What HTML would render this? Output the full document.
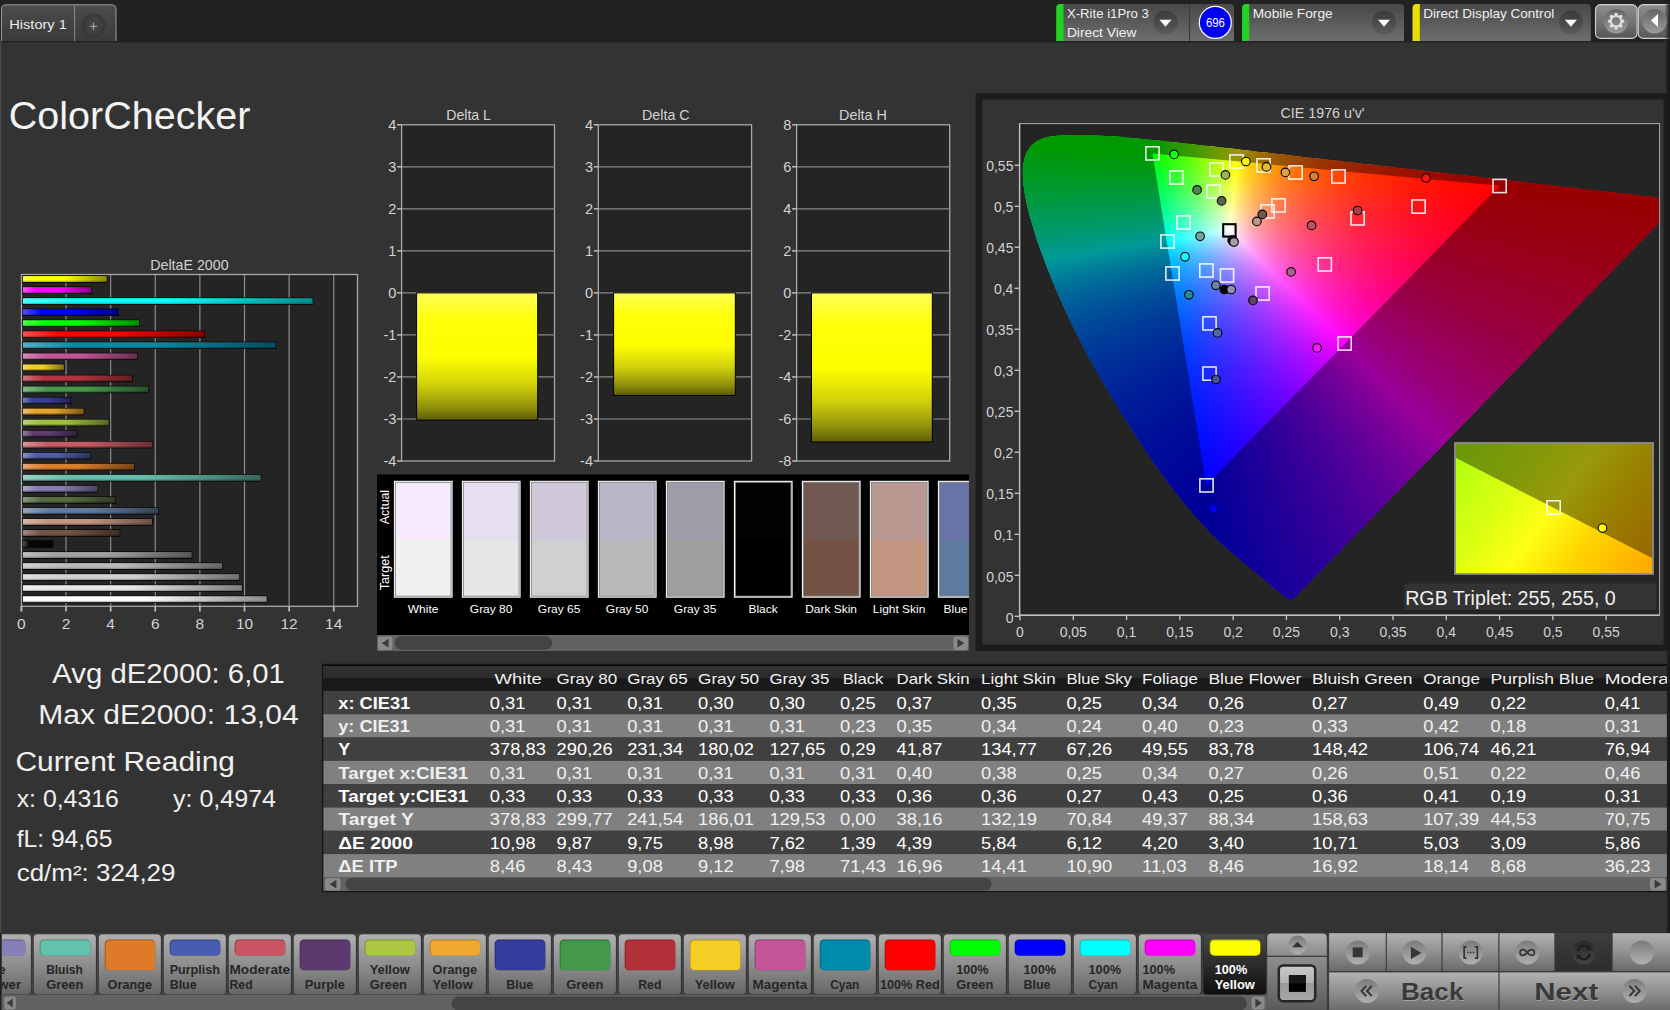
<!DOCTYPE html>
<html lang="en"><head><meta charset="utf-8"><title>ColorChecker</title>
<style>
html,body{margin:0;padding:0;background:#333333;overflow:hidden}
body{width:1670px;height:1010px;position:relative;font-family:"Liberation Sans",sans-serif}
svg{position:absolute;left:0;top:0;display:block;font-family:"Liberation Sans",sans-serif}
text{white-space:pre}
</style></head><body>
<svg width="1670" height="1010" viewBox="0 0 1670 1010">
<defs>
<linearGradient id="gshadow" x1="0" y1="0" x2="0" y2="1"><stop offset="0" stop-color="#1e1e1e"/><stop offset="1" stop-color="#333333"/></linearGradient>
<linearGradient id="gright" x1="0" y1="0" x2="1" y2="0"><stop offset="0" stop-color="#333333"/><stop offset="0.5" stop-color="#262626"/><stop offset="1" stop-color="#1c1c1c"/></linearGradient>
<linearGradient id="gright2" x1="0" y1="0" x2="1" y2="0"><stop offset="0" stop-color="#222222" stop-opacity="0"/><stop offset="1" stop-color="#1e1e1e"/></linearGradient>
<linearGradient id="gtab" x1="0" y1="0" x2="0" y2="1"><stop offset="0" stop-color="#4c4c4c"/><stop offset="1" stop-color="#3a3a3a"/></linearGradient>
<radialGradient id="gplus"><stop offset="0" stop-color="#4a4a4a"/><stop offset="0.7" stop-color="#3c3c3c"/><stop offset="1" stop-color="#363636"/></radialGradient>
<linearGradient id="gdev" x1="0" y1="0" x2="0" y2="1"><stop offset="0" stop-color="#484848"/><stop offset="1" stop-color="#6e6e6e"/></linearGradient>
<linearGradient id="gbtn" x1="0" y1="0" x2="0" y2="1"><stop offset="0" stop-color="#8e8e8e"/><stop offset="0.5" stop-color="#747474"/><stop offset="1" stop-color="#565656"/></linearGradient>
<radialGradient id="gdd" cx="0.5" cy="0.35" r="0.7"><stop offset="0" stop-color="#4a4a4a"/><stop offset="1" stop-color="#3c3c3c"/></radialGradient>
<linearGradient id="gddl" x1="0" y1="0" x2="0" y2="1"><stop offset="0" stop-color="#3a3a3a"/><stop offset="1" stop-color="#5c5c5c"/></linearGradient>
<linearGradient id="gcirc" x1="0" y1="0" x2="0" y2="1"><stop offset="0" stop-color="#646464"/><stop offset="1" stop-color="#9c9c9c"/></linearGradient>
<linearGradient id="b0" x1="0" y1="0" x2="1" y2="0"><stop offset="0" stop-color="#ffff52"/><stop offset="0.2" stop-color="#ffff00"/><stop offset="0.5" stop-color="#ffff00"/><stop offset="1" stop-color="#8c8c00"/></linearGradient>
<linearGradient id="b1" x1="0" y1="0" x2="1" y2="0"><stop offset="0" stop-color="#ff52ff"/><stop offset="0.2" stop-color="#ff00ff"/><stop offset="0.5" stop-color="#ff00ff"/><stop offset="1" stop-color="#8c008c"/></linearGradient>
<linearGradient id="b2" x1="0" y1="0" x2="1" y2="0"><stop offset="0" stop-color="#52ffff"/><stop offset="0.2" stop-color="#00ffff"/><stop offset="0.5" stop-color="#00ffff"/><stop offset="1" stop-color="#008c8c"/></linearGradient>
<linearGradient id="b3" x1="0" y1="0" x2="1" y2="0"><stop offset="0" stop-color="#5252ff"/><stop offset="0.2" stop-color="#0000ff"/><stop offset="0.5" stop-color="#0000ff"/><stop offset="1" stop-color="#00008c"/></linearGradient>
<linearGradient id="b4" x1="0" y1="0" x2="1" y2="0"><stop offset="0" stop-color="#52ff52"/><stop offset="0.2" stop-color="#00ff00"/><stop offset="0.5" stop-color="#00ff00"/><stop offset="1" stop-color="#008c00"/></linearGradient>
<linearGradient id="b5" x1="0" y1="0" x2="1" y2="0"><stop offset="0" stop-color="#ff5252"/><stop offset="0.2" stop-color="#ff0000"/><stop offset="0.5" stop-color="#ff0000"/><stop offset="1" stop-color="#8c0000"/></linearGradient>
<linearGradient id="b6" x1="0" y1="0" x2="1" y2="0"><stop offset="0" stop-color="#57b1c5"/><stop offset="0.2" stop-color="#088caa"/><stop offset="0.5" stop-color="#088caa"/><stop offset="1" stop-color="#044d5e"/></linearGradient>
<linearGradient id="b7" x1="0" y1="0" x2="1" y2="0"><stop offset="0" stop-color="#d48cb9"/><stop offset="0.2" stop-color="#c05698"/><stop offset="0.5" stop-color="#c05698"/><stop offset="1" stop-color="#6a2f54"/></linearGradient>
<linearGradient id="b8" x1="0" y1="0" x2="1" y2="0"><stop offset="0" stop-color="#f2dc6d"/><stop offset="0.2" stop-color="#eccc28"/><stop offset="0.5" stop-color="#eccc28"/><stop offset="1" stop-color="#827016"/></linearGradient>
<linearGradient id="b9" x1="0" y1="0" x2="1" y2="0"><stop offset="0" stop-color="#cb757c"/><stop offset="0.2" stop-color="#b2343e"/><stop offset="0.5" stop-color="#b2343e"/><stop offset="1" stop-color="#621d22"/></linearGradient>
<linearGradient id="b10" x1="0" y1="0" x2="1" y2="0"><stop offset="0" stop-color="#83b884"/><stop offset="0.2" stop-color="#48964a"/><stop offset="0.5" stop-color="#48964a"/><stop offset="1" stop-color="#285229"/></linearGradient>
<linearGradient id="b11" x1="0" y1="0" x2="1" y2="0"><stop offset="0" stop-color="#787cb9"/><stop offset="0.2" stop-color="#383e98"/><stop offset="0.5" stop-color="#383e98"/><stop offset="1" stop-color="#1f2254"/></linearGradient>
<linearGradient id="b12" x1="0" y1="0" x2="1" y2="0"><stop offset="0" stop-color="#eec171"/><stop offset="0.2" stop-color="#e6a42e"/><stop offset="0.5" stop-color="#e6a42e"/><stop offset="1" stop-color="#7f5a19"/></linearGradient>
<linearGradient id="b13" x1="0" y1="0" x2="1" y2="0"><stop offset="0" stop-color="#bed37e"/><stop offset="0.2" stop-color="#a0be42"/><stop offset="0.5" stop-color="#a0be42"/><stop offset="1" stop-color="#586924"/></linearGradient>
<linearGradient id="b14" x1="0" y1="0" x2="1" y2="0"><stop offset="0" stop-color="#927a9c"/><stop offset="0.2" stop-color="#5e3c6e"/><stop offset="0.5" stop-color="#5e3c6e"/><stop offset="1" stop-color="#34213d"/></linearGradient>
<linearGradient id="b15" x1="0" y1="0" x2="1" y2="0"><stop offset="0" stop-color="#d78f96"/><stop offset="0.2" stop-color="#c45a64"/><stop offset="0.5" stop-color="#c45a64"/><stop offset="1" stop-color="#6c3237"/></linearGradient>
<linearGradient id="b16" x1="0" y1="0" x2="1" y2="0"><stop offset="0" stop-color="#8890c4"/><stop offset="0.2" stop-color="#505ca8"/><stop offset="0.5" stop-color="#505ca8"/><stop offset="1" stop-color="#2c335c"/></linearGradient>
<linearGradient id="b17" x1="0" y1="0" x2="1" y2="0"><stop offset="0" stop-color="#e6a770"/><stop offset="0.2" stop-color="#da7e2c"/><stop offset="0.5" stop-color="#da7e2c"/><stop offset="1" stop-color="#784518"/></linearGradient>
<linearGradient id="b18" x1="0" y1="0" x2="1" y2="0"><stop offset="0" stop-color="#98d3c7"/><stop offset="0.2" stop-color="#68beac"/><stop offset="0.5" stop-color="#68beac"/><stop offset="1" stop-color="#39695f"/></linearGradient>
<linearGradient id="b19" x1="0" y1="0" x2="1" y2="0"><stop offset="0" stop-color="#ada9cb"/><stop offset="0.2" stop-color="#8680b2"/><stop offset="0.5" stop-color="#8680b2"/><stop offset="1" stop-color="#4a4662"/></linearGradient>
<linearGradient id="b20" x1="0" y1="0" x2="1" y2="0"><stop offset="0" stop-color="#8d9b80"/><stop offset="0.2" stop-color="#586c44"/><stop offset="0.5" stop-color="#586c44"/><stop offset="1" stop-color="#303b25"/></linearGradient>
<linearGradient id="b21" x1="0" y1="0" x2="1" y2="0"><stop offset="0" stop-color="#94a5bd"/><stop offset="0.2" stop-color="#627a9e"/><stop offset="0.5" stop-color="#627a9e"/><stop offset="1" stop-color="#364357"/></linearGradient>
<linearGradient id="b22" x1="0" y1="0" x2="1" y2="0"><stop offset="0" stop-color="#d7b8aa"/><stop offset="0.2" stop-color="#c49682"/><stop offset="0.5" stop-color="#c49682"/><stop offset="1" stop-color="#6c5248"/></linearGradient>
<linearGradient id="b23" x1="0" y1="0" x2="1" y2="0"><stop offset="0" stop-color="#a08980"/><stop offset="0.2" stop-color="#745244"/><stop offset="0.5" stop-color="#745244"/><stop offset="1" stop-color="#402d25"/></linearGradient>
<linearGradient id="b24" x1="0" y1="0" x2="1" y2="0"><stop offset="0" stop-color="#575757"/><stop offset="0.2" stop-color="#080808"/><stop offset="0.5" stop-color="#080808"/><stop offset="1" stop-color="#040404"/></linearGradient>
<linearGradient id="b25" x1="0" y1="0" x2="1" y2="0"><stop offset="0" stop-color="#bebebe"/><stop offset="0.2" stop-color="#a0a0a0"/><stop offset="0.5" stop-color="#a0a0a0"/><stop offset="1" stop-color="#585858"/></linearGradient>
<linearGradient id="b26" x1="0" y1="0" x2="1" y2="0"><stop offset="0" stop-color="#d0d0d0"/><stop offset="0.2" stop-color="#bababa"/><stop offset="0.5" stop-color="#bababa"/><stop offset="1" stop-color="#666666"/></linearGradient>
<linearGradient id="b27" x1="0" y1="0" x2="1" y2="0"><stop offset="0" stop-color="#dfdfdf"/><stop offset="0.2" stop-color="#d0d0d0"/><stop offset="0.5" stop-color="#d0d0d0"/><stop offset="1" stop-color="#727272"/></linearGradient>
<linearGradient id="b28" x1="0" y1="0" x2="1" y2="0"><stop offset="0" stop-color="#eeeeee"/><stop offset="0.2" stop-color="#e6e6e6"/><stop offset="0.5" stop-color="#e6e6e6"/><stop offset="1" stop-color="#7f7f7f"/></linearGradient>
<linearGradient id="b29" x1="0" y1="0" x2="1" y2="0"><stop offset="0" stop-color="#ffffff"/><stop offset="0.2" stop-color="#ffffff"/><stop offset="0.5" stop-color="#ffffff"/><stop offset="1" stop-color="#8c8c8c"/></linearGradient>
<linearGradient id="gyel" x1="0" y1="0" x2="0" y2="1"><stop offset="0" stop-color="#ffff58"/><stop offset="0.22" stop-color="#ffff08"/><stop offset="0.5" stop-color="#ffff00"/><stop offset="0.72" stop-color="#d2d20a"/><stop offset="0.9" stop-color="#90900c"/><stop offset="1" stop-color="#5c5c08"/></linearGradient>
<linearGradient id="c0" gradientUnits="userSpaceOnUse" x1="1053" x2="1103.5"><stop offset="0" stop-color="#00ff00"/><stop offset="1" stop-color="#00ff00"/></linearGradient>
<linearGradient id="c1" gradientUnits="userSpaceOnUse" x1="1042" x2="1130.5"><stop offset="0" stop-color="#00ff00"/><stop offset="1" stop-color="#00ff00"/></linearGradient>
<linearGradient id="c2" gradientUnits="userSpaceOnUse" x1="1036" x2="1151.5"><stop offset="0" stop-color="#00ff00"/><stop offset=".9827" stop-color="#00ff00"/><stop offset="1" stop-color="#04ff00"/></linearGradient>
<linearGradient id="c3" gradientUnits="userSpaceOnUse" x1="1033" x2="1170.5"><stop offset="0" stop-color="#00ff00"/><stop offset=".8509" stop-color="#00ff00"/><stop offset="1" stop-color="#30ff00"/></linearGradient>
<linearGradient id="c4" gradientUnits="userSpaceOnUse" x1="1030" x2="1188.5"><stop offset="0" stop-color="#00ff00"/><stop offset=".7603" stop-color="#00ff00"/><stop offset="1" stop-color="#5fff00"/></linearGradient>
<linearGradient id="c5" gradientUnits="userSpaceOnUse" x1="1028" x2="1206.5"><stop offset="0" stop-color="#00ff02"/><stop offset=".6891" stop-color="#00ff00"/><stop offset=".8515" stop-color="#47ff00"/><stop offset="1" stop-color="#93ff00"/></linearGradient>
<linearGradient id="c6" gradientUnits="userSpaceOnUse" x1="1026" x2="1224.5"><stop offset="0" stop-color="#00ff06"/><stop offset=".1864" stop-color="#00ff00"/><stop offset=".6297" stop-color="#00ff00"/><stop offset=".7254" stop-color="#2dff00"/><stop offset=".8237" stop-color="#61ff00"/><stop offset=".9144" stop-color="#96ff00"/><stop offset="1" stop-color="#ceff00"/></linearGradient>
<linearGradient id="c7" gradientUnits="userSpaceOnUse" x1="1025" x2="1241.5"><stop offset="0" stop-color="#00ff09"/><stop offset=".2725" stop-color="#00ff00"/><stop offset=".5843" stop-color="#00ff00"/><stop offset=".6928" stop-color="#39ff00"/><stop offset=".7945" stop-color="#76ff00"/><stop offset=".8915" stop-color="#b8ff00"/><stop offset=".9815" stop-color="#fdff00"/><stop offset="1" stop-color="#fff200"/></linearGradient>
<linearGradient id="c8" gradientUnits="userSpaceOnUse" x1="1024" x2="1259.5"><stop offset="0" stop-color="#00ff0c"/><stop offset=".3461" stop-color="#00ff00"/><stop offset=".5435" stop-color="#00ff00"/><stop offset=".6433" stop-color="#3aff00"/><stop offset=".7367" stop-color="#77ff00"/><stop offset=".8238" stop-color="#b8ff00"/><stop offset=".9066" stop-color="#feff00"/><stop offset=".9533" stop-color="#ffdb00"/><stop offset="1" stop-color="#ffbd00"/></linearGradient>
<linearGradient id="c9" gradientUnits="userSpaceOnUse" x1="1023" x2="1276.5"><stop offset="0" stop-color="#00ff10"/><stop offset=".4103" stop-color="#00ff00"/><stop offset=".5089" stop-color="#00ff00"/><stop offset=".5996" stop-color="#38ff00"/><stop offset=".6884" stop-color="#77ff00"/><stop offset=".7692" stop-color="#b8ff00"/><stop offset=".8462" stop-color="#ffff00"/><stop offset=".8817" stop-color="#ffe000"/><stop offset=".9172" stop-color="#ffc600"/><stop offset="1" stop-color="#ff9800"/></linearGradient>
<linearGradient id="c10" gradientUnits="userSpaceOnUse" x1="1022" x2="1294.5"><stop offset="0" stop-color="#00ff13"/><stop offset=".4789" stop-color="#00ff00"/><stop offset=".5633" stop-color="#39ff00"/><stop offset=".644" stop-color="#77ff00"/><stop offset=".7193" stop-color="#b9ff00"/><stop offset=".7908" stop-color="#ffff00"/><stop offset=".833" stop-color="#ffd800"/><stop offset=".8826" stop-color="#ffb400"/><stop offset=".9376" stop-color="#ff9600"/><stop offset="1" stop-color="#ff7b00"/></linearGradient>
<linearGradient id="c11" gradientUnits="userSpaceOnUse" x1="1021" x2="1311.5"><stop offset="0" stop-color="#00ff16"/><stop offset=".4527" stop-color="#00ff04"/><stop offset=".5267" stop-color="#35ff00"/><stop offset=".6041" stop-color="#74ff00"/><stop offset=".673" stop-color="#b4ff00"/><stop offset=".7453" stop-color="#fffe00"/><stop offset=".7952" stop-color="#ffce00"/><stop offset=".852" stop-color="#ffa600"/><stop offset=".9208" stop-color="#ff8300"/><stop offset="1" stop-color="#ff6500"/></linearGradient>
<linearGradient id="c12" gradientUnits="userSpaceOnUse" x1="1021" x2="1328.5"><stop offset="0" stop-color="#00ff1a"/><stop offset=".4293" stop-color="#00ff08"/><stop offset=".5024" stop-color="#38ff03"/><stop offset=".574" stop-color="#77ff00"/><stop offset=".6407" stop-color="#b9ff00"/><stop offset=".7024" stop-color="#ffff00"/><stop offset=".7577" stop-color="#ffc800"/><stop offset=".8244" stop-color="#ff9a00"/><stop offset=".9041" stop-color="#ff7300"/><stop offset="1" stop-color="#ff5400"/></linearGradient>
<linearGradient id="c13" gradientUnits="userSpaceOnUse" x1="1020" x2="1346.5"><stop offset="0" stop-color="#00ff1d"/><stop offset=".4089" stop-color="#00ff0c"/><stop offset=".4778" stop-color="#39ff08"/><stop offset=".5436" stop-color="#77ff03"/><stop offset=".6049" stop-color="#b8ff00"/><stop offset=".6631" stop-color="#feff00"/><stop offset=".6953" stop-color="#ffdb00"/><stop offset=".7259" stop-color="#ffbf00"/><stop offset=".7979" stop-color="#ff8e00"/><stop offset=".8882" stop-color="#ff6500"/><stop offset="1" stop-color="#ff4400"/></linearGradient>
<linearGradient id="c14" gradientUnits="userSpaceOnUse" x1="1020" x2="1363.5"><stop offset="0" stop-color="#00ff21"/><stop offset=".3886" stop-color="#00ff11"/><stop offset=".4527" stop-color="#37ff0d"/><stop offset=".5167" stop-color="#76ff09"/><stop offset=".575" stop-color="#b8ff04"/><stop offset=".6303" stop-color="#feff00"/><stop offset=".6623" stop-color="#ffd900"/><stop offset=".6943" stop-color="#ffbb00"/><stop offset=".7307" stop-color="#ff9f00"/><stop offset=".7729" stop-color="#ff8500"/><stop offset=".8734" stop-color="#ff5a00"/><stop offset="1" stop-color="#ff3800"/></linearGradient>
<linearGradient id="c15" gradientUnits="userSpaceOnUse" x1="1020" x2="1381.5"><stop offset="0" stop-color="#00ff24"/><stop offset=".3707" stop-color="#00ff15"/><stop offset=".4315" stop-color="#38ff12"/><stop offset=".491" stop-color="#76ff0e"/><stop offset=".5463" stop-color="#b8ff0a"/><stop offset=".5989" stop-color="#ffff05"/><stop offset=".6293" stop-color="#ffd802"/><stop offset=".6653" stop-color="#ffb500"/><stop offset=".7054" stop-color="#ff9600"/><stop offset=".7497" stop-color="#ff7c00"/><stop offset=".8008" stop-color="#ff6500"/><stop offset=".8589" stop-color="#ff5000"/><stop offset="1" stop-color="#ff2d00"/></linearGradient>
<linearGradient id="c16" gradientUnits="userSpaceOnUse" x1="1020" x2="1398.5"><stop offset="0" stop-color="#00ff27"/><stop offset=".3554" stop-color="#00ff1a"/><stop offset=".4148" stop-color="#3aff16"/><stop offset=".4703" stop-color="#78ff13"/><stop offset=".5218" stop-color="#b8ff0f"/><stop offset=".5707" stop-color="#feff0b"/><stop offset=".605" stop-color="#ffd306"/><stop offset=".6407" stop-color="#ffaf03"/><stop offset=".6816" stop-color="#ff9000"/><stop offset=".7292" stop-color="#ff7400"/><stop offset=".7834" stop-color="#ff5c00"/><stop offset=".8468" stop-color="#ff4700"/><stop offset="1" stop-color="#ff2500"/></linearGradient>
<linearGradient id="c17" gradientUnits="userSpaceOnUse" x1="1019" x2="1415.5"><stop offset="0" stop-color="#00ff2b"/><stop offset=".3417" stop-color="#00ff1e"/><stop offset=".396" stop-color="#37ff1b"/><stop offset=".4502" stop-color="#76ff18"/><stop offset=".5006" stop-color="#b9ff15"/><stop offset=".5473" stop-color="#ffff11"/><stop offset=".5801" stop-color="#ffd20c"/><stop offset=".6166" stop-color="#ffac07"/><stop offset=".6595" stop-color="#ff8b03"/><stop offset=".71" stop-color="#ff6e00"/><stop offset=".7667" stop-color="#ff5500"/><stop offset=".8335" stop-color="#ff4000"/><stop offset=".9105" stop-color="#ff2d00"/><stop offset="1" stop-color="#ff1d00"/></linearGradient>
<linearGradient id="c18" gradientUnits="userSpaceOnUse" x1="1019" x2="1433.5"><stop offset="0" stop-color="#00ff2e"/><stop offset=".3281" stop-color="#00ff23"/><stop offset=".3812" stop-color="#39ff20"/><stop offset=".4306" stop-color="#76ff1d"/><stop offset=".4777" stop-color="#b7ff1a"/><stop offset=".5223" stop-color="#fdff17"/><stop offset=".5573" stop-color="#ffce10"/><stop offset=".5947" stop-color="#ffa70b"/><stop offset=".6393" stop-color="#ff8406"/><stop offset=".6912" stop-color="#ff6702"/><stop offset=".7515" stop-color="#ff4e00"/><stop offset=".8215" stop-color="#ff3800"/><stop offset=".9035" stop-color="#ff2600"/><stop offset="1" stop-color="#ff1600"/></linearGradient>
<linearGradient id="c19" gradientUnits="userSpaceOnUse" x1="1019" x2="1450.5"><stop offset="0" stop-color="#00ff32"/><stop offset=".3163" stop-color="#00ff28"/><stop offset=".3662" stop-color="#39ff25"/><stop offset=".4137" stop-color="#76ff23"/><stop offset=".4565" stop-color="#b4ff20"/><stop offset=".5029" stop-color="#fffe1d"/><stop offset=".5353" stop-color="#ffcd15"/><stop offset=".5747" stop-color="#ffa30f"/><stop offset=".6199" stop-color="#ff8009"/><stop offset=".6732" stop-color="#ff6204"/><stop offset=".7358" stop-color="#ff4801"/><stop offset=".81" stop-color="#ff3200"/><stop offset=".8969" stop-color="#ff2000"/><stop offset="1" stop-color="#ff1000"/></linearGradient>
<linearGradient id="c20" gradientUnits="userSpaceOnUse" x1="1019" x2="1467.5"><stop offset="0" stop-color="#00ff36"/><stop offset=".3043" stop-color="#00ff2d"/><stop offset=".3512" stop-color="#37ff2b"/><stop offset=".398" stop-color="#75ff28"/><stop offset=".4415" stop-color="#b7ff26"/><stop offset=".4827" stop-color="#ffff23"/><stop offset=".5162" stop-color="#ffcb1a"/><stop offset=".5552" stop-color="#ffa013"/><stop offset=".602" stop-color="#ff7b0c"/><stop offset=".6566" stop-color="#ff5d07"/><stop offset=".7224" stop-color="#ff4202"/><stop offset=".7993" stop-color="#ff2d00"/><stop offset=".8907" stop-color="#ff1a00"/><stop offset="1" stop-color="#ff0b00"/></linearGradient>
<linearGradient id="c21" gradientUnits="userSpaceOnUse" x1="1019" x2="1485.5"><stop offset="0" stop-color="#00ff39"/><stop offset=".2937" stop-color="#00ff31"/><stop offset=".3398" stop-color="#39ff30"/><stop offset=".3837" stop-color="#77ff2e"/><stop offset=".4234" stop-color="#b6ff2c"/><stop offset=".4641" stop-color="#fffe29"/><stop offset=".4973" stop-color="#ffc91f"/><stop offset=".537" stop-color="#ff9c16"/><stop offset=".5841" stop-color="#ff770f"/><stop offset=".6409" stop-color="#ff5709"/><stop offset=".7085" stop-color="#ff3d04"/><stop offset=".7889" stop-color="#ff2700"/><stop offset=".8853" stop-color="#ff1500"/><stop offset="1" stop-color="#ff0600"/></linearGradient>
<linearGradient id="c22" gradientUnits="userSpaceOnUse" x1="1019" x2="1502.5"><stop offset="0" stop-color="#00ff3d"/><stop offset=".2844" stop-color="#00ff36"/><stop offset=".3278" stop-color="#39ff35"/><stop offset=".3692" stop-color="#75ff33"/><stop offset=".4064" stop-color="#b3ff32"/><stop offset=".4478" stop-color="#fffe2f"/><stop offset=".4633" stop-color="#ffe129"/><stop offset=".4809" stop-color="#ffc724"/><stop offset=".5212" stop-color="#ff981a"/><stop offset=".5688" stop-color="#ff7312"/><stop offset=".6267" stop-color="#ff530b"/><stop offset=".696" stop-color="#ff3805"/><stop offset=".7797" stop-color="#ff2201"/><stop offset=".88" stop-color="#ff1000"/><stop offset="1" stop-color="#ff0100"/></linearGradient>
<linearGradient id="c23" gradientUnits="userSpaceOnUse" x1="1019" x2="1520.5"><stop offset="0" stop-color="#00ff40"/><stop offset=".2742" stop-color="#00ff3b"/><stop offset=".3161" stop-color="#38ff3a"/><stop offset=".3569" stop-color="#76ff39"/><stop offset=".3948" stop-color="#b8ff38"/><stop offset=".4307" stop-color="#ffff36"/><stop offset=".4467" stop-color="#ffe02f"/><stop offset=".4636" stop-color="#ffc629"/><stop offset=".5045" stop-color="#ff961e"/><stop offset=".5533" stop-color="#ff6e15"/><stop offset=".6132" stop-color="#ff4e0d"/><stop offset=".6879" stop-color="#ff3307"/><stop offset=".7797" stop-color="#ff1c01"/><stop offset=".9103" stop-color="#ff0700"/><stop offset="1" stop-color="#ff0000"/></linearGradient>
<linearGradient id="c24" gradientUnits="userSpaceOnUse" x1="1020" x2="1537.5"><stop offset="0" stop-color="#00ff44"/><stop offset=".2647" stop-color="#00ff40"/><stop offset=".3053" stop-color="#39ff40"/><stop offset=".344" stop-color="#76ff3f"/><stop offset=".3787" stop-color="#b5ff3e"/><stop offset=".4155" stop-color="#fffe3c"/><stop offset=".4319" stop-color="#ffde34"/><stop offset=".4493" stop-color="#ffc22d"/><stop offset=".4899" stop-color="#ff9221"/><stop offset=".5401" stop-color="#ff6a17"/><stop offset=".6019" stop-color="#ff490f"/><stop offset=".6831" stop-color="#ff2c08"/><stop offset=".7845" stop-color="#ff1502"/><stop offset=".9353" stop-color="#ff0000"/><stop offset="1" stop-color="#ff0000"/></linearGradient>
<linearGradient id="c25" gradientUnits="userSpaceOnUse" x1="1020" x2="1555.5"><stop offset="0" stop-color="#00ff48"/><stop offset=".2568" stop-color="#00ff45"/><stop offset=".2951" stop-color="#38ff45"/><stop offset=".3315" stop-color="#74ff44"/><stop offset=".3641" stop-color="#b1ff44"/><stop offset=".4015" stop-color="#fffd43"/><stop offset=".4174" stop-color="#ffdd3a"/><stop offset=".4351" stop-color="#ffc032"/><stop offset=".4547" stop-color="#ffa62b"/><stop offset=".4771" stop-color="#ff8d24"/><stop offset=".5285" stop-color="#ff6519"/><stop offset=".591" stop-color="#ff4410"/><stop offset=".6788" stop-color="#ff2708"/><stop offset=".7899" stop-color="#ff0f02"/><stop offset=".901" stop-color="#ff0000"/><stop offset="1" stop-color="#ff0000"/></linearGradient>
<linearGradient id="c26" gradientUnits="userSpaceOnUse" x1="1020" x2="1572.5"><stop offset="0" stop-color="#00ff4b"/><stop offset=".2489" stop-color="#00ff4b"/><stop offset=".286" stop-color="#38ff4b"/><stop offset=".3222" stop-color="#76ff4a"/><stop offset=".3557" stop-color="#b7ff4a"/><stop offset=".3882" stop-color="#ffff4a"/><stop offset=".4045" stop-color="#ffdc40"/><stop offset=".4217" stop-color="#ffbf37"/><stop offset=".4416" stop-color="#ffa42f"/><stop offset=".4633" stop-color="#ff8c28"/><stop offset=".5158" stop-color="#ff621c"/><stop offset=".5801" stop-color="#ff4012"/><stop offset=".6742" stop-color="#ff2209"/><stop offset=".7946" stop-color="#ff0a02"/><stop offset=".8697" stop-color="#ff0000"/><stop offset="1" stop-color="#ff0000"/></linearGradient>
<linearGradient id="c27" gradientUnits="userSpaceOnUse" x1="1020" x2="1589.5"><stop offset="0" stop-color="#00ff4f"/><stop offset=".2423" stop-color="#00ff50"/><stop offset=".2783" stop-color="#39ff50"/><stop offset=".3126" stop-color="#76ff50"/><stop offset=".3433" stop-color="#b4ff51"/><stop offset=".3766" stop-color="#fffe50"/><stop offset=".3924" stop-color="#ffdb46"/><stop offset=".41" stop-color="#ffbd3c"/><stop offset=".4302" stop-color="#ffa133"/><stop offset=".4522" stop-color="#ff882b"/><stop offset=".5048" stop-color="#ff5e1e"/><stop offset=".5707" stop-color="#ff3c14"/><stop offset=".6708" stop-color="#ff1d0a"/><stop offset=".8016" stop-color="#ff0502"/><stop offset=".8402" stop-color="#ff0001"/><stop offset="1" stop-color="#ff0000"/></linearGradient>
<linearGradient id="c28" gradientUnits="userSpaceOnUse" x1="1020" x2="1607.5"><stop offset="0" stop-color="#00ff53"/><stop offset=".2357" stop-color="#01ff55"/><stop offset=".2706" stop-color="#3aff56"/><stop offset=".3038" stop-color="#77ff56"/><stop offset=".3353" stop-color="#baff57"/><stop offset=".3643" stop-color="#ffff58"/><stop offset=".3804" stop-color="#ffdb4b"/><stop offset=".3983" stop-color="#ffba41"/><stop offset=".4179" stop-color="#ff9f37"/><stop offset=".44" stop-color="#ff852f"/><stop offset=".4928" stop-color="#ff5b21"/><stop offset=".56" stop-color="#ff3915"/><stop offset=".6664" stop-color="#ff190b"/><stop offset=".8077" stop-color="#ff0003"/><stop offset="1" stop-color="#ff0000"/></linearGradient>
<linearGradient id="c29" gradientUnits="userSpaceOnUse" x1="1021" x2="1624.5"><stop offset="0" stop-color="#00ff57"/><stop offset=".2278" stop-color="#00ff5b"/><stop offset=".261" stop-color="#38ff5c"/><stop offset=".2933" stop-color="#75ff5c"/><stop offset=".3231" stop-color="#b6ff5d"/><stop offset=".3529" stop-color="#fffe5e"/><stop offset=".3687" stop-color="#ffda51"/><stop offset=".3869" stop-color="#ffb845"/><stop offset=".4068" stop-color="#ff9c3b"/><stop offset=".4292" stop-color="#ff8232"/><stop offset=".4548" stop-color="#ff6b2a"/><stop offset=".483" stop-color="#ff5723"/><stop offset=".551" stop-color="#ff3517"/><stop offset=".652" stop-color="#ff170c"/><stop offset=".7846" stop-color="#ff0004"/><stop offset="1" stop-color="#ff0000"/></linearGradient>
<linearGradient id="c30" gradientUnits="userSpaceOnUse" x1="1021" x2="1642.5"><stop offset="0" stop-color="#00ff5b"/><stop offset=".222" stop-color="#00ff60"/><stop offset=".2542" stop-color="#39ff61"/><stop offset=".2848" stop-color="#75ff63"/><stop offset=".3121" stop-color="#b2ff64"/><stop offset=".3427" stop-color="#fffe65"/><stop offset=".358" stop-color="#ffd957"/><stop offset=".3757" stop-color="#ffb74b"/><stop offset=".3958" stop-color="#ff9a3f"/><stop offset=".4183" stop-color="#ff8036"/><stop offset=".4441" stop-color="#ff682d"/><stop offset=".473" stop-color="#ff5425"/><stop offset=".5422" stop-color="#ff3218"/><stop offset=".6364" stop-color="#ff160e"/><stop offset=".7586" stop-color="#ff0006"/><stop offset="1" stop-color="#ff0000"/></linearGradient>
<linearGradient id="c31" gradientUnits="userSpaceOnUse" x1="1021" x2="1659.5"><stop offset="0" stop-color="#00ff5e"/><stop offset=".2161" stop-color="#00ff66"/><stop offset=".2459" stop-color="#35ff67"/><stop offset=".2772" stop-color="#75ff69"/><stop offset=".3054" stop-color="#b7ff6b"/><stop offset=".3328" stop-color="#ffff6d"/><stop offset=".3485" stop-color="#ffd85d"/><stop offset=".3657" stop-color="#ffb650"/><stop offset=".3853" stop-color="#ff9944"/><stop offset=".408" stop-color="#ff7e39"/><stop offset=".4338" stop-color="#ff6630"/><stop offset=".4628" stop-color="#ff5228"/><stop offset=".5325" stop-color="#ff2f1a"/><stop offset=".6218" stop-color="#ff150f"/><stop offset=".7353" stop-color="#ff0007"/><stop offset=".9021" stop-color="#ff0000"/><stop offset="1" stop-color="#ff0000"/></linearGradient>
<linearGradient id="c32" gradientUnits="userSpaceOnUse" x1="1022" x2="1661.5"><stop offset="0" stop-color="#00ff62"/><stop offset=".215" stop-color="#00ff6b"/><stop offset=".2455" stop-color="#37ff6d"/><stop offset=".2752" stop-color="#75ff6f"/><stop offset=".3026" stop-color="#b5ff72"/><stop offset=".3307" stop-color="#fffe74"/><stop offset=".3464" stop-color="#ffd763"/><stop offset=".3636" stop-color="#ffb655"/><stop offset=".3839" stop-color="#ff9748"/><stop offset=".4066" stop-color="#ff7c3d"/><stop offset=".4324" stop-color="#ff6533"/><stop offset=".4613" stop-color="#ff502b"/><stop offset=".5309" stop-color="#ff2e1c"/><stop offset=".6185" stop-color="#ff1411"/><stop offset=".7295" stop-color="#ff0009"/><stop offset="1" stop-color="#ff0000"/></linearGradient>
<linearGradient id="c33" gradientUnits="userSpaceOnUse" x1="1022" x2="1661.5"><stop offset="0" stop-color="#00ff66"/><stop offset=".2158" stop-color="#00ff71"/><stop offset=".2463" stop-color="#38ff73"/><stop offset=".2752" stop-color="#75ff76"/><stop offset=".301" stop-color="#b1ff78"/><stop offset=".3307" stop-color="#fffd7b"/><stop offset=".3464" stop-color="#ffd669"/><stop offset=".3636" stop-color="#ffb55a"/><stop offset=".3831" stop-color="#ff974d"/><stop offset=".4058" stop-color="#ff7c41"/><stop offset=".4316" stop-color="#ff6537"/><stop offset=".4605" stop-color="#ff502e"/><stop offset=".5309" stop-color="#ff2e1f"/><stop offset=".6169" stop-color="#ff1413"/><stop offset=".7263" stop-color="#ff000a"/><stop offset="1" stop-color="#ff0000"/></linearGradient>
<linearGradient id="c34" gradientUnits="userSpaceOnUse" x1="1023" x2="1661.5"><stop offset="0" stop-color="#00ff6a"/><stop offset=".2146" stop-color="#00ff77"/><stop offset=".2443" stop-color="#36ff79"/><stop offset=".2749" stop-color="#76ff7c"/><stop offset=".3023" stop-color="#b7ff7f"/><stop offset=".3289" stop-color="#ffff83"/><stop offset=".3446" stop-color="#ffd770"/><stop offset=".3618" stop-color="#ffb560"/><stop offset=".3814" stop-color="#ff9752"/><stop offset=".4041" stop-color="#ff7c46"/><stop offset=".4299" stop-color="#ff643b"/><stop offset=".4589" stop-color="#ff5031"/><stop offset=".5286" stop-color="#ff2e21"/><stop offset=".6139" stop-color="#ff1415"/><stop offset=".7228" stop-color="#ff000c"/><stop offset="1" stop-color="#ff0000"/></linearGradient>
<linearGradient id="c35" gradientUnits="userSpaceOnUse" x1="1023" x2="1661.5"><stop offset="0" stop-color="#00ff6e"/><stop offset=".2153" stop-color="#00ff7d"/><stop offset=".2459" stop-color="#39ff80"/><stop offset=".2749" stop-color="#76ff83"/><stop offset=".3007" stop-color="#b4ff86"/><stop offset=".3289" stop-color="#fffe8a"/><stop offset=".3446" stop-color="#ffd676"/><stop offset=".3618" stop-color="#ffb466"/><stop offset=".3814" stop-color="#ff9657"/><stop offset=".4041" stop-color="#ff7b4a"/><stop offset=".4291" stop-color="#ff643f"/><stop offset=".4581" stop-color="#ff4f35"/><stop offset=".5286" stop-color="#ff2d24"/><stop offset=".6132" stop-color="#ff1417"/><stop offset=".7204" stop-color="#ff000e"/><stop offset="1" stop-color="#ff0001"/></linearGradient>
<linearGradient id="c36" gradientUnits="userSpaceOnUse" x1="1023" x2="1661.5"><stop offset="0" stop-color="#00ff72"/><stop offset=".2161" stop-color="#00ff83"/><stop offset=".2467" stop-color="#3aff86"/><stop offset=".2756" stop-color="#78ff8a"/><stop offset=".3031" stop-color="#baff8e"/><stop offset=".3281" stop-color="#ffff92"/><stop offset=".3438" stop-color="#ffd77e"/><stop offset=".361" stop-color="#ffb56c"/><stop offset=".3806" stop-color="#ff965d"/><stop offset=".4033" stop-color="#ff7b4f"/><stop offset=".4283" stop-color="#ff6443"/><stop offset=".4573" stop-color="#ff4f38"/><stop offset=".5278" stop-color="#ff2d26"/><stop offset=".6116" stop-color="#ff141a"/><stop offset=".7173" stop-color="#ff000f"/><stop offset="1" stop-color="#ff0002"/></linearGradient>
<linearGradient id="c37" gradientUnits="userSpaceOnUse" x1="1024" x2="1661.5"><stop offset="0" stop-color="#00ff77"/><stop offset=".2149" stop-color="#00ff89"/><stop offset=".2439" stop-color="#36ff8c"/><stop offset=".2737" stop-color="#76ff91"/><stop offset=".3004" stop-color="#b6ff95"/><stop offset=".3271" stop-color="#fffe9a"/><stop offset=".3427" stop-color="#ffd684"/><stop offset=".36" stop-color="#ffb472"/><stop offset=".3796" stop-color="#ff9661"/><stop offset=".4024" stop-color="#ff7a53"/><stop offset=".4275" stop-color="#ff6346"/><stop offset=".4565" stop-color="#ff4e3b"/><stop offset=".5271" stop-color="#ff2c29"/><stop offset=".6094" stop-color="#ff131c"/><stop offset=".7137" stop-color="#ff0011"/><stop offset="1" stop-color="#ff0003"/></linearGradient>
<linearGradient id="c38" gradientUnits="userSpaceOnUse" x1="1024" x2="1661.5"><stop offset="0" stop-color="#00ff7b"/><stop offset=".2157" stop-color="#00ff8f"/><stop offset=".2455" stop-color="#39ff93"/><stop offset=".2737" stop-color="#75ff98"/><stop offset=".2988" stop-color="#b2ff9c"/><stop offset=".3271" stop-color="#fffda1"/><stop offset=".342" stop-color="#ffd78b"/><stop offset=".3592" stop-color="#ffb478"/><stop offset=".3788" stop-color="#ff9667"/><stop offset=".4016" stop-color="#ff7a57"/><stop offset=".4267" stop-color="#ff634a"/><stop offset=".4557" stop-color="#ff4e3f"/><stop offset=".5263" stop-color="#ff2c2b"/><stop offset=".6078" stop-color="#ff131e"/><stop offset=".7106" stop-color="#ff0013"/><stop offset="1" stop-color="#ff0004"/></linearGradient>
<linearGradient id="c39" gradientUnits="userSpaceOnUse" x1="1025" x2="1661.5"><stop offset="0" stop-color="#00ff7f"/><stop offset=".2152" stop-color="#00ff95"/><stop offset=".2451" stop-color="#3aff9a"/><stop offset=".2734" stop-color="#77ff9f"/><stop offset=".3001" stop-color="#b9ffa4"/><stop offset=".3252" stop-color="#ffffaa"/><stop offset=".3401" stop-color="#ffd893"/><stop offset=".3574" stop-color="#ffb57e"/><stop offset=".3771" stop-color="#ff966c"/><stop offset=".3998" stop-color="#ff7a5c"/><stop offset=".425" stop-color="#ff634f"/><stop offset=".454" stop-color="#ff4e42"/><stop offset=".5247" stop-color="#ff2b2e"/><stop offset=".6057" stop-color="#ff1320"/><stop offset=".707" stop-color="#ff0015"/><stop offset="1" stop-color="#ff0005"/></linearGradient>
<linearGradient id="c40" gradientUnits="userSpaceOnUse" x1="1025" x2="1661.5"><stop offset="0" stop-color="#00ff83"/><stop offset=".2152" stop-color="#00ff9b"/><stop offset=".2435" stop-color="#36ffa0"/><stop offset=".2726" stop-color="#75ffa6"/><stop offset=".2985" stop-color="#b5ffab"/><stop offset=".3252" stop-color="#fffeb1"/><stop offset=".3401" stop-color="#ffd799"/><stop offset=".3574" stop-color="#ffb484"/><stop offset=".3771" stop-color="#ff9571"/><stop offset=".3998" stop-color="#ff7961"/><stop offset=".425" stop-color="#ff6252"/><stop offset=".454" stop-color="#ff4d46"/><stop offset=".5247" stop-color="#ff2b31"/><stop offset=".6041" stop-color="#ff1322"/><stop offset=".7038" stop-color="#ff0017"/><stop offset="1" stop-color="#ff0006"/></linearGradient>
<linearGradient id="c41" gradientUnits="userSpaceOnUse" x1="1026" x2="1661.5"><stop offset="0" stop-color="#00ff88"/><stop offset=".2148" stop-color="#00ffa2"/><stop offset=".2439" stop-color="#38ffa7"/><stop offset=".2714" stop-color="#75ffad"/><stop offset=".2958" stop-color="#b1ffb3"/><stop offset=".3242" stop-color="#fffdb9"/><stop offset=".3391" stop-color="#ffd6a0"/><stop offset=".3564" stop-color="#ffb38a"/><stop offset=".3761" stop-color="#ff9476"/><stop offset=".3989" stop-color="#ff7865"/><stop offset=".4241" stop-color="#ff6156"/><stop offset=".4532" stop-color="#ff4c49"/><stop offset=".524" stop-color="#ff2a33"/><stop offset=".6019" stop-color="#ff1324"/><stop offset=".7002" stop-color="#ff0018"/><stop offset="1" stop-color="#ff0007"/></linearGradient>
<linearGradient id="c42" gradientUnits="userSpaceOnUse" x1="1026" x2="1661.5"><stop offset="0" stop-color="#00ff8c"/><stop offset=".118" stop-color="#00ff99"/><stop offset=".2156" stop-color="#01ffa8"/><stop offset=".2447" stop-color="#39ffae"/><stop offset=".2722" stop-color="#76ffb4"/><stop offset=".2982" stop-color="#b8ffbb"/><stop offset=".3234" stop-color="#ffffc2"/><stop offset=".3383" stop-color="#ffd7a8"/><stop offset=".3556" stop-color="#ffb390"/><stop offset=".3753" stop-color="#ff947c"/><stop offset=".3973" stop-color="#ff796a"/><stop offset=".4225" stop-color="#ff625b"/><stop offset=".4516" stop-color="#ff4c4d"/><stop offset=".5224" stop-color="#ff2a36"/><stop offset=".6003" stop-color="#ff1327"/><stop offset=".6971" stop-color="#ff001a"/><stop offset="1" stop-color="#ff0008"/></linearGradient>
<linearGradient id="c43" gradientUnits="userSpaceOnUse" x1="1027" x2="1661.5"><stop offset="0" stop-color="#00ff91"/><stop offset=".1174" stop-color="#00ff9e"/><stop offset=".2143" stop-color="#00ffaf"/><stop offset=".2427" stop-color="#37ffb5"/><stop offset=".2703" stop-color="#74ffbc"/><stop offset=".2955" stop-color="#b4ffc3"/><stop offset=".3223" stop-color="#fffeca"/><stop offset=".3373" stop-color="#ffd6af"/><stop offset=".3546" stop-color="#ffb296"/><stop offset=".3743" stop-color="#ff9381"/><stop offset=".3964" stop-color="#ff786f"/><stop offset=".4216" stop-color="#ff615f"/><stop offset=".4507" stop-color="#ff4c50"/><stop offset=".5217" stop-color="#ff2938"/><stop offset=".5981" stop-color="#ff1229"/><stop offset=".6935" stop-color="#ff001c"/><stop offset="1" stop-color="#ff0009"/></linearGradient>
<linearGradient id="c44" gradientUnits="userSpaceOnUse" x1="1028" x2="1661.5"><stop offset="0" stop-color="#00ff95"/><stop offset=".1168" stop-color="#00ffa4"/><stop offset=".2139" stop-color="#00ffb5"/><stop offset=".2431" stop-color="#3affbc"/><stop offset=".2707" stop-color="#78ffc4"/><stop offset=".296" stop-color="#b8ffcb"/><stop offset=".3204" stop-color="#ffffd4"/><stop offset=".3354" stop-color="#ffd7b7"/><stop offset=".3528" stop-color="#ffb39d"/><stop offset=".3725" stop-color="#ff9387"/><stop offset=".3946" stop-color="#ff7874"/><stop offset=".4199" stop-color="#ff6163"/><stop offset=".4491" stop-color="#ff4b54"/><stop offset=".5193" stop-color="#ff293b"/><stop offset=".5951" stop-color="#ff122b"/><stop offset=".6898" stop-color="#ff001e"/><stop offset=".8256" stop-color="#ff0013"/><stop offset="1" stop-color="#ff000a"/></linearGradient>
<linearGradient id="c45" gradientUnits="userSpaceOnUse" x1="1028" x2="1661.5"><stop offset="0" stop-color="#00ff9a"/><stop offset=".1176" stop-color="#00ffa9"/><stop offset=".2147" stop-color="#01ffbc"/><stop offset=".2431" stop-color="#39ffc3"/><stop offset=".2699" stop-color="#76ffcb"/><stop offset=".2952" stop-color="#b6ffd3"/><stop offset=".3204" stop-color="#fffedc"/><stop offset=".3354" stop-color="#ffd6be"/><stop offset=".352" stop-color="#ffb3a4"/><stop offset=".3717" stop-color="#ff938d"/><stop offset=".3938" stop-color="#ff7879"/><stop offset=".4191" stop-color="#ff6067"/><stop offset=".4483" stop-color="#ff4b58"/><stop offset=".5193" stop-color="#ff283e"/><stop offset=".5935" stop-color="#ff122e"/><stop offset=".6867" stop-color="#ff0020"/><stop offset=".8232" stop-color="#ff0014"/><stop offset="1" stop-color="#ff000a"/></linearGradient>
<linearGradient id="c46" gradientUnits="userSpaceOnUse" x1="1029" x2="1661.5"><stop offset="0" stop-color="#00ff9e"/><stop offset=".117" stop-color="#00ffaf"/><stop offset=".2134" stop-color="#00ffc3"/><stop offset=".2411" stop-color="#37ffcb"/><stop offset=".268" stop-color="#74ffd3"/><stop offset=".2925" stop-color="#b2ffdb"/><stop offset=".3194" stop-color="#fffde4"/><stop offset=".3344" stop-color="#ffd5c5"/><stop offset=".351" stop-color="#ffb2aa"/><stop offset=".3708" stop-color="#ff9292"/><stop offset=".3929" stop-color="#ff777d"/><stop offset=".4182" stop-color="#ff5f6b"/><stop offset=".4474" stop-color="#ff4a5b"/><stop offset=".5186" stop-color="#ff2841"/><stop offset=".5929" stop-color="#ff1230"/><stop offset=".6838" stop-color="#ff0022"/><stop offset=".8213" stop-color="#ff0015"/><stop offset="1" stop-color="#ff000b"/></linearGradient>
<linearGradient id="c47" gradientUnits="userSpaceOnUse" x1="1029" x2="1659.5"><stop offset="0" stop-color="#00ffa3"/><stop offset=".1174" stop-color="#00ffb5"/><stop offset=".2149" stop-color="#00ffca"/><stop offset=".2435" stop-color="#3affd2"/><stop offset=".2704" stop-color="#77ffdb"/><stop offset=".2958" stop-color="#b9ffe4"/><stop offset=".3196" stop-color="#ffffee"/><stop offset=".3347" stop-color="#ffd6cd"/><stop offset=".3513" stop-color="#ffb3b2"/><stop offset=".3711" stop-color="#ff9398"/><stop offset=".3933" stop-color="#ff7783"/><stop offset=".4187" stop-color="#ff5f70"/><stop offset=".4473" stop-color="#ff4a5f"/><stop offset=".5178" stop-color="#ff2844"/><stop offset=".5916" stop-color="#ff1232"/><stop offset=".6828" stop-color="#ff0024"/><stop offset=".8208" stop-color="#ff0017"/><stop offset="1" stop-color="#ff000d"/></linearGradient>
<linearGradient id="c48" gradientUnits="userSpaceOnUse" x1="1030" x2="1658.5"><stop offset="0" stop-color="#00ffa8"/><stop offset=".1169" stop-color="#00ffba"/><stop offset=".214" stop-color="#00ffd1"/><stop offset=".2403" stop-color="#34ffd9"/><stop offset=".2681" stop-color="#73ffe3"/><stop offset=".2928" stop-color="#b3ffec"/><stop offset=".319" stop-color="#fffef7"/><stop offset=".3341" stop-color="#ffd5d5"/><stop offset=".3508" stop-color="#ffb2b8"/><stop offset=".3699" stop-color="#ff939f"/><stop offset=".3922" stop-color="#ff7788"/><stop offset=".4177" stop-color="#ff5f74"/><stop offset=".4471" stop-color="#ff4a63"/><stop offset=".5179" stop-color="#ff2746"/><stop offset=".5903" stop-color="#ff1235"/><stop offset=".6802" stop-color="#ff0026"/><stop offset=".8194" stop-color="#ff0018"/><stop offset="1" stop-color="#ff000e"/></linearGradient>
<linearGradient id="c49" gradientUnits="userSpaceOnUse" x1="1031" x2="1656.5"><stop offset="0" stop-color="#00ffac"/><stop offset=".1175" stop-color="#00ffc0"/><stop offset=".2142" stop-color="#00ffd8"/><stop offset=".2414" stop-color="#37ffe1"/><stop offset=".2678" stop-color="#73ffeb"/><stop offset=".291" stop-color="#affff4"/><stop offset=".3189" stop-color="#fffdff"/><stop offset=".3341" stop-color="#ffd4dc"/><stop offset=".3509" stop-color="#ffb1be"/><stop offset=".3701" stop-color="#ff92a4"/><stop offset=".3925" stop-color="#ff768d"/><stop offset=".4181" stop-color="#ff5e78"/><stop offset=".4468" stop-color="#ff4967"/><stop offset=".518" stop-color="#ff2749"/><stop offset=".5899" stop-color="#ff1137"/><stop offset=".6787" stop-color="#ff0028"/><stop offset=".8185" stop-color="#ff001a"/><stop offset="1" stop-color="#ff000f"/></linearGradient>
<linearGradient id="c50" gradientUnits="userSpaceOnUse" x1="1031" x2="1654.5"><stop offset="0" stop-color="#00ffb1"/><stop offset=".1179" stop-color="#00ffc6"/><stop offset=".2157" stop-color="#00ffe0"/><stop offset=".2398" stop-color="#31ffe8"/><stop offset=".2622" stop-color="#63fff0"/><stop offset=".2967" stop-color="#bcffff"/><stop offset=".3232" stop-color="#fff2ff"/><stop offset=".3384" stop-color="#ffcbdd"/><stop offset=".3561" stop-color="#ffa8be"/><stop offset=".3753" stop-color="#ff8ba5"/><stop offset=".3978" stop-color="#ff718e"/><stop offset=".4234" stop-color="#ff5a79"/><stop offset=".4523" stop-color="#ff4668"/><stop offset=".5237" stop-color="#ff254b"/><stop offset=".5926" stop-color="#ff1139"/><stop offset=".6776" stop-color="#ff002a"/><stop offset=".818" stop-color="#ff001b"/><stop offset="1" stop-color="#ff0010"/></linearGradient>
<linearGradient id="c51" gradientUnits="userSpaceOnUse" x1="1032" x2="1652.5"><stop offset="0" stop-color="#00ffb6"/><stop offset=".1176" stop-color="#00ffcc"/><stop offset=".2151" stop-color="#00ffe7"/><stop offset=".2458" stop-color="#3efff2"/><stop offset=".2764" stop-color="#87ffff"/><stop offset=".3263" stop-color="#ffe8ff"/><stop offset=".3417" stop-color="#ffc3de"/><stop offset=".3594" stop-color="#ffa2bf"/><stop offset=".3795" stop-color="#ff85a5"/><stop offset=".4021" stop-color="#ff6c8f"/><stop offset=".4279" stop-color="#ff567b"/><stop offset=".4577" stop-color="#ff4269"/><stop offset=".5294" stop-color="#ff224c"/><stop offset=".5955" stop-color="#ff103b"/><stop offset=".6761" stop-color="#ff002d"/><stop offset=".8163" stop-color="#ff001d"/><stop offset="1" stop-color="#ff0011"/></linearGradient>
<linearGradient id="c52" gradientUnits="userSpaceOnUse" x1="1032" x2="1650.5"><stop offset="0" stop-color="#00ffbb"/><stop offset=".1188" stop-color="#00ffd2"/><stop offset=".2167" stop-color="#00ffef"/><stop offset=".2587" stop-color="#59ffff"/><stop offset=".3314" stop-color="#ffdcfd"/><stop offset=".3468" stop-color="#ffbadd"/><stop offset=".3646" stop-color="#ff9bc0"/><stop offset=".3848" stop-color="#ff7fa6"/><stop offset=".4082" stop-color="#ff678f"/><stop offset=".4341" stop-color="#ff527b"/><stop offset=".464" stop-color="#ff3f6a"/><stop offset=".5368" stop-color="#ff204d"/><stop offset=".5998" stop-color="#ff0e3c"/><stop offset=".675" stop-color="#ff002f"/><stop offset=".8157" stop-color="#ff001f"/><stop offset="1" stop-color="#ff0012"/></linearGradient>
<linearGradient id="c53" gradientUnits="userSpaceOnUse" x1="1033" x2="1648.5"><stop offset="0" stop-color="#00ffc0"/><stop offset=".1186" stop-color="#00ffd9"/><stop offset=".2169" stop-color="#00fff7"/><stop offset=".2388" stop-color="#2dffff"/><stop offset=".2819" stop-color="#88edff"/><stop offset=".3347" stop-color="#ffd3fd"/><stop offset=".3509" stop-color="#ffb1dc"/><stop offset=".3688" stop-color="#ff93c0"/><stop offset=".3891" stop-color="#ff79a6"/><stop offset=".4127" stop-color="#ff6290"/><stop offset=".4687" stop-color="#ff3c6b"/><stop offset=".5418" stop-color="#ff1e4e"/><stop offset=".6019" stop-color="#ff0e3e"/><stop offset=".6734" stop-color="#ff0031"/><stop offset=".8148" stop-color="#ff0020"/><stop offset="1" stop-color="#ff0013"/></linearGradient>
<linearGradient id="c54" gradientUnits="userSpaceOnUse" x1="1034" x2="1646.5"><stop offset="0" stop-color="#00ffc5"/><stop offset=".1184" stop-color="#00ffdf"/><stop offset=".2163" stop-color="#00fffe"/><stop offset=".2718" stop-color="#6fe9ff"/><stop offset=".338" stop-color="#ffcbfd"/><stop offset=".3543" stop-color="#ffaadd"/><stop offset=".3722" stop-color="#ff8ec1"/><stop offset=".3935" stop-color="#ff74a7"/><stop offset=".4171" stop-color="#ff5e91"/><stop offset=".4743" stop-color="#ff386c"/><stop offset=".5478" stop-color="#ff1c4f"/><stop offset=".6718" stop-color="#ff0033"/><stop offset=".8139" stop-color="#ff0022"/><stop offset="1" stop-color="#ff0014"/></linearGradient>
<linearGradient id="c55" gradientUnits="userSpaceOnUse" x1="1035" x2="1644.5"><stop offset="0" stop-color="#00ffca"/><stop offset=".1075" stop-color="#00ffe2"/><stop offset=".1977" stop-color="#00ffff"/><stop offset=".2166" stop-color="#00f8ff"/><stop offset=".2756" stop-color="#74e0ff"/><stop offset=".3413" stop-color="#ffc2fd"/><stop offset=".3577" stop-color="#ffa3dd"/><stop offset=".3765" stop-color="#ff87c1"/><stop offset=".3979" stop-color="#ff6fa7"/><stop offset=".4217" stop-color="#ff5991"/><stop offset=".4791" stop-color="#ff366d"/><stop offset=".5529" stop-color="#ff1a50"/><stop offset=".6702" stop-color="#ff0036"/><stop offset=".813" stop-color="#ff0023"/><stop offset="1" stop-color="#ff0016"/></linearGradient>
<linearGradient id="c56" gradientUnits="userSpaceOnUse" x1="1035" x2="1642.5"><stop offset="0" stop-color="#00ffd0"/><stop offset=".0963" stop-color="#00ffe5"/><stop offset=".1786" stop-color="#00ffff"/><stop offset=".2181" stop-color="#00f0ff"/><stop offset=".279" stop-color="#75d8ff"/><stop offset=".3457" stop-color="#ffbafe"/><stop offset=".3621" stop-color="#ff9dde"/><stop offset=".3811" stop-color="#ff82c2"/><stop offset=".4025" stop-color="#ff6aa9"/><stop offset=".4272" stop-color="#ff5592"/><stop offset=".4856" stop-color="#ff336d"/><stop offset=".5597" stop-color="#ff1851"/><stop offset=".67" stop-color="#ff0038"/><stop offset=".8123" stop-color="#ff0025"/><stop offset="1" stop-color="#ff0017"/></linearGradient>
<linearGradient id="c57" gradientUnits="userSpaceOnUse" x1="1036" x2="1640.5"><stop offset="0" stop-color="#00ffd5"/><stop offset=".0844" stop-color="#00ffe9"/><stop offset=".158" stop-color="#00ffff"/><stop offset=".2175" stop-color="#00e9ff"/><stop offset=".2787" stop-color="#72d2ff"/><stop offset=".349" stop-color="#ffb3fe"/><stop offset=".3664" stop-color="#ff95dd"/><stop offset=".3854" stop-color="#ff7cc2"/><stop offset=".4069" stop-color="#ff66a9"/><stop offset=".4309" stop-color="#ff5294"/><stop offset=".4897" stop-color="#ff306f"/><stop offset=".5649" stop-color="#ff1652"/><stop offset=".6683" stop-color="#ff003a"/><stop offset=".8114" stop-color="#ff0027"/><stop offset="1" stop-color="#ff0018"/></linearGradient>
<linearGradient id="c58" gradientUnits="userSpaceOnUse" x1="1037" x2="1638.5"><stop offset="0" stop-color="#00ffda"/><stop offset=".1372" stop-color="#00ffff"/><stop offset=".2178" stop-color="#00e3ff"/><stop offset=".2826" stop-color="#76caff"/><stop offset=".3525" stop-color="#ffabfe"/><stop offset=".3682" stop-color="#ff92e1"/><stop offset=".3857" stop-color="#ff7bc7"/><stop offset=".4264" stop-color="#ff559c"/><stop offset=".478" stop-color="#ff3579"/><stop offset=".542" stop-color="#ff1c5c"/><stop offset=".5993" stop-color="#ff0d4b"/><stop offset=".6667" stop-color="#ff003d"/><stop offset=".8105" stop-color="#ff0028"/><stop offset="1" stop-color="#ff0019"/></linearGradient>
<linearGradient id="c59" gradientUnits="userSpaceOnUse" x1="1037" x2="1636.5"><stop offset="0" stop-color="#00ffe0"/><stop offset=".1176" stop-color="#00ffff"/><stop offset=".2193" stop-color="#01dcff"/><stop offset=".2852" stop-color="#76c3ff"/><stop offset=".357" stop-color="#ffa4fe"/><stop offset=".3728" stop-color="#ff8ce1"/><stop offset=".3903" stop-color="#ff76c8"/><stop offset=".432" stop-color="#ff519c"/><stop offset=".4837" stop-color="#ff327a"/><stop offset=".5471" stop-color="#ff1a5e"/><stop offset=".6656" stop-color="#ff003f"/><stop offset=".8098" stop-color="#ff002a"/><stop offset="1" stop-color="#ff001b"/></linearGradient>
<linearGradient id="c60" gradientUnits="userSpaceOnUse" x1="1038" x2="1634.5"><stop offset="0" stop-color="#00ffe5"/><stop offset=".0964" stop-color="#00ffff"/><stop offset=".2188" stop-color="#00d6ff"/><stop offset=".2858" stop-color="#74bdff"/><stop offset=".3604" stop-color="#ff9efe"/><stop offset=".3764" stop-color="#ff86e2"/><stop offset=".394" stop-color="#ff71c9"/><stop offset=".4359" stop-color="#ff4d9e"/><stop offset=".4878" stop-color="#ff307b"/><stop offset=".5516" stop-color="#ff195f"/><stop offset=".6639" stop-color="#ff0042"/><stop offset=".808" stop-color="#ff002c"/><stop offset="1" stop-color="#ff001c"/></linearGradient>
<linearGradient id="c61" gradientUnits="userSpaceOnUse" x1="1039" x2="1632.5"><stop offset="0" stop-color="#00ffeb"/><stop offset=".075" stop-color="#00ffff"/><stop offset=".219" stop-color="#00d0ff"/><stop offset=".289" stop-color="#76b6ff"/><stop offset=".3639" stop-color="#ff97fe"/><stop offset=".3799" stop-color="#ff81e2"/><stop offset=".3976" stop-color="#ff6dca"/><stop offset=".4398" stop-color="#ff4a9f"/><stop offset=".4912" stop-color="#ff2e7d"/><stop offset=".5552" stop-color="#ff1761"/><stop offset=".6622" stop-color="#ff0044"/><stop offset=".8071" stop-color="#ff002e"/><stop offset="1" stop-color="#ff001d"/></linearGradient>
<linearGradient id="c62" gradientUnits="userSpaceOnUse" x1="1039" x2="1630.5"><stop offset="0" stop-color="#00fff0"/><stop offset=".0549" stop-color="#00ffff"/><stop offset=".2206" stop-color="#01caff"/><stop offset=".2925" stop-color="#77b0ff"/><stop offset=".3686" stop-color="#ff91fe"/><stop offset=".3846" stop-color="#ff7ce3"/><stop offset=".4024" stop-color="#ff68cb"/><stop offset=".4446" stop-color="#ff47a0"/><stop offset=".4962" stop-color="#ff2c7e"/><stop offset=".5604" stop-color="#ff1662"/><stop offset=".661" stop-color="#ff0047"/><stop offset=".8064" stop-color="#ff0030"/><stop offset="1" stop-color="#ff001e"/></linearGradient>
<linearGradient id="c63" gradientUnits="userSpaceOnUse" x1="1040" x2="1628.5"><stop offset="0" stop-color="#00fff6"/><stop offset=".0331" stop-color="#00ffff"/><stop offset=".2201" stop-color="#00c4ff"/><stop offset=".2931" stop-color="#75aaff"/><stop offset=".3721" stop-color="#ff8bfe"/><stop offset=".3883" stop-color="#ff77e3"/><stop offset=".4061" stop-color="#ff64cb"/><stop offset=".4486" stop-color="#ff44a1"/><stop offset=".5004" stop-color="#ff2a80"/><stop offset=".5641" stop-color="#ff1464"/><stop offset=".6593" stop-color="#ff0049"/><stop offset=".8054" stop-color="#ff0031"/><stop offset="1" stop-color="#ff0020"/></linearGradient>
<linearGradient id="c64" gradientUnits="userSpaceOnUse" x1="1041" x2="1626.5"><stop offset="0" stop-color="#00fffc"/><stop offset=".0683" stop-color="#00efff"/><stop offset=".2203" stop-color="#00bfff"/><stop offset=".2963" stop-color="#78a4ff"/><stop offset=".3757" stop-color="#ff85fe"/><stop offset=".392" stop-color="#ff72e4"/><stop offset=".4108" stop-color="#ff5fcb"/><stop offset=".4535" stop-color="#ff40a2"/><stop offset=".5056" stop-color="#ff2780"/><stop offset=".5687" stop-color="#ff1365"/><stop offset=".6576" stop-color="#ff004c"/><stop offset=".8044" stop-color="#ff0033"/><stop offset="1" stop-color="#ff0021"/></linearGradient>
<linearGradient id="c65" gradientUnits="userSpaceOnUse" x1="1042" x2="1624.5"><stop offset="0" stop-color="#00fcff"/><stop offset=".2197" stop-color="#00baff"/><stop offset=".2953" stop-color="#73a0ff"/><stop offset=".3794" stop-color="#ff80fe"/><stop offset=".4146" stop-color="#ff5bcc"/><stop offset=".4567" stop-color="#ff3ea4"/><stop offset=".509" stop-color="#ff2582"/><stop offset=".5725" stop-color="#ff1167"/><stop offset=".6558" stop-color="#ff004f"/><stop offset=".8034" stop-color="#ff0035"/><stop offset="1" stop-color="#ff0022"/></linearGradient>
<linearGradient id="c66" gradientUnits="userSpaceOnUse" x1="1043" x2="1623.5"><stop offset="0" stop-color="#00f6ff"/><stop offset=".2196" stop-color="#00b5ff"/><stop offset=".2989" stop-color="#779aff"/><stop offset=".3824" stop-color="#ff7afe"/><stop offset=".4177" stop-color="#ff57cd"/><stop offset=".4608" stop-color="#ff3ba4"/><stop offset=".5125" stop-color="#ff2383"/><stop offset=".5762" stop-color="#ff1068"/><stop offset=".6529" stop-color="#ff0052"/><stop offset=".7468" stop-color="#ff003f"/><stop offset=".8613" stop-color="#ff0030"/><stop offset="1" stop-color="#ff0023"/></linearGradient>
<linearGradient id="c67" gradientUnits="userSpaceOnUse" x1="1043" x2="1621.5"><stop offset="0" stop-color="#00f1ff"/><stop offset=".2213" stop-color="#00b0ff"/><stop offset=".3025" stop-color="#7895ff"/><stop offset=".3872" stop-color="#ff75fe"/><stop offset=".4226" stop-color="#ff54ce"/><stop offset=".4659" stop-color="#ff38a5"/><stop offset=".5177" stop-color="#ff2185"/><stop offset=".5808" stop-color="#ff0f69"/><stop offset=".6517" stop-color="#ff0054"/><stop offset=".7502" stop-color="#ff0041"/><stop offset=".8634" stop-color="#ff0031"/><stop offset="1" stop-color="#ff0025"/></linearGradient>
<linearGradient id="c68" gradientUnits="userSpaceOnUse" x1="1044" x2="1619.5"><stop offset="0" stop-color="#00ebff"/><stop offset=".2207" stop-color="#00acff"/><stop offset=".3023" stop-color="#7591ff"/><stop offset=".391" stop-color="#ff70fe"/><stop offset=".4266" stop-color="#ff50ce"/><stop offset=".47" stop-color="#ff35a6"/><stop offset=".5222" stop-color="#ff1f86"/><stop offset=".5847" stop-color="#ff0d6b"/><stop offset=".6499" stop-color="#ff0057"/><stop offset=".7533" stop-color="#ff0042"/><stop offset=".8653" stop-color="#ff0033"/><stop offset="1" stop-color="#ff0026"/></linearGradient>
<linearGradient id="c69" gradientUnits="userSpaceOnUse" x1="1045" x2="1617.5"><stop offset="0" stop-color="#00e6ff"/><stop offset=".221" stop-color="#00a7ff"/><stop offset=".3057" stop-color="#778bff"/><stop offset=".3948" stop-color="#ff6bfe"/><stop offset=".4306" stop-color="#ff4dcf"/><stop offset=".4734" stop-color="#ff33a8"/><stop offset=".5258" stop-color="#ff1e87"/><stop offset=".5886" stop-color="#ff0c6c"/><stop offset=".648" stop-color="#ff005a"/><stop offset=".7563" stop-color="#ff0043"/><stop offset=".8664" stop-color="#ff0034"/><stop offset="1" stop-color="#ff0027"/></linearGradient>
<linearGradient id="c70" gradientUnits="userSpaceOnUse" x1="1046" x2="1615.5"><stop offset="0" stop-color="#00e1ff"/><stop offset=".2212" stop-color="#00a3ff"/><stop offset=".309" stop-color="#7986ff"/><stop offset=".3986" stop-color="#ff67fe"/><stop offset=".4346" stop-color="#ff49d0"/><stop offset=".4776" stop-color="#ff30a9"/><stop offset=".5294" stop-color="#ff1c89"/><stop offset=".5926" stop-color="#ff0b6e"/><stop offset=".6471" stop-color="#ff005d"/><stop offset=".7594" stop-color="#ff0045"/><stop offset=".8683" stop-color="#ff0036"/><stop offset="1" stop-color="#ff0029"/></linearGradient>
<linearGradient id="c71" gradientUnits="userSpaceOnUse" x1="1046" x2="1613.5"><stop offset="0" stop-color="#00dcff"/><stop offset=".222" stop-color="#009fff"/><stop offset=".3101" stop-color="#7783ff"/><stop offset=".4035" stop-color="#ff62fe"/><stop offset=".4396" stop-color="#ff46d0"/><stop offset=".4828" stop-color="#ff2eaa"/><stop offset=".5348" stop-color="#ff1a8a"/><stop offset=".5974" stop-color="#ff096f"/><stop offset=".6458" stop-color="#ff0060"/><stop offset=".7621" stop-color="#ff0047"/><stop offset=".8705" stop-color="#ff0037"/><stop offset="1" stop-color="#ff002a"/></linearGradient>
<linearGradient id="c72" gradientUnits="userSpaceOnUse" x1="1047" x2="1611.5"><stop offset="0" stop-color="#00d7ff"/><stop offset=".2223" stop-color="#009aff"/><stop offset=".3136" stop-color="#797eff"/><stop offset=".4074" stop-color="#ff5efe"/><stop offset=".4438" stop-color="#ff42d1"/><stop offset=".4872" stop-color="#ff2bab"/><stop offset=".5394" stop-color="#ff188b"/><stop offset=".6014" stop-color="#ff0871"/><stop offset=".6439" stop-color="#ff0063"/><stop offset=".7653" stop-color="#ff0048"/><stop offset=".8725" stop-color="#ff0039"/><stop offset="1" stop-color="#ff002c"/></linearGradient>
<linearGradient id="c73" gradientUnits="userSpaceOnUse" x1="1048" x2="1609.5"><stop offset="0" stop-color="#00d2ff"/><stop offset=".2226" stop-color="#0096ff"/><stop offset=".3161" stop-color="#797aff"/><stop offset=".4114" stop-color="#ff5afe"/><stop offset=".4479" stop-color="#ff3fd2"/><stop offset=".4915" stop-color="#ff29ac"/><stop offset=".5432" stop-color="#ff178d"/><stop offset=".6055" stop-color="#ff0772"/><stop offset=".642" stop-color="#ff0066"/><stop offset=".7685" stop-color="#ff004a"/><stop offset=".8744" stop-color="#ff003a"/><stop offset="1" stop-color="#ff002d"/></linearGradient>
<linearGradient id="c74" gradientUnits="userSpaceOnUse" x1="1049" x2="1607.5"><stop offset="0" stop-color="#00ceff"/><stop offset=".222" stop-color="#0093ff"/><stop offset=".316" stop-color="#7776ff"/><stop offset=".4154" stop-color="#ff56fe"/><stop offset=".4521" stop-color="#ff3cd2"/><stop offset=".496" stop-color="#ff27ad"/><stop offset=".5479" stop-color="#ff158e"/><stop offset=".6097" stop-color="#ff0674"/><stop offset=".6401" stop-color="#ff006a"/><stop offset=".7708" stop-color="#ff004b"/><stop offset="1" stop-color="#ff002e"/></linearGradient>
<linearGradient id="c75" gradientUnits="userSpaceOnUse" x1="1050" x2="1605.5"><stop offset="0" stop-color="#00c9ff"/><stop offset=".2223" stop-color="#008fff"/><stop offset=".3204" stop-color="#7a72ff"/><stop offset=".4194" stop-color="#ff52fe"/><stop offset=".4563" stop-color="#ff39d3"/><stop offset=".5005" stop-color="#ff24ae"/><stop offset=".5527" stop-color="#ff138f"/><stop offset=".6139" stop-color="#ff0575"/><stop offset=".6382" stop-color="#ff006d"/><stop offset=".7741" stop-color="#ff004d"/><stop offset="1" stop-color="#ff0030"/></linearGradient>
<linearGradient id="c76" gradientUnits="userSpaceOnUse" x1="1051" x2="1603.5"><stop offset="0" stop-color="#00c5ff"/><stop offset=".2226" stop-color="#008bff"/><stop offset=".3231" stop-color="#7b6eff"/><stop offset=".4235" stop-color="#ff4eff"/><stop offset=".4606" stop-color="#ff36d3"/><stop offset=".5041" stop-color="#ff22af"/><stop offset=".5566" stop-color="#ff1290"/><stop offset=".6181" stop-color="#ff0376"/><stop offset=".6362" stop-color="#ff0070"/><stop offset=".6914" stop-color="#ff0060"/><stop offset=".7774" stop-color="#ff004e"/><stop offset="1" stop-color="#ff0031"/></linearGradient>
<linearGradient id="c77" gradientUnits="userSpaceOnUse" x1="1051" x2="1601.5"><stop offset="0" stop-color="#00c1ff"/><stop offset=".2234" stop-color="#0088ff"/><stop offset=".3243" stop-color="#786bff"/><stop offset=".4287" stop-color="#ff4aff"/><stop offset=".4659" stop-color="#ff33d4"/><stop offset=".5095" stop-color="#ff20b0"/><stop offset=".5613" stop-color="#ff1092"/><stop offset=".6231" stop-color="#ff0278"/><stop offset=".6948" stop-color="#ff0062"/><stop offset=".7802" stop-color="#ff0050"/><stop offset="1" stop-color="#ff0033"/></linearGradient>
<linearGradient id="c78" gradientUnits="userSpaceOnUse" x1="1052" x2="1599.5"><stop offset="0" stop-color="#00bdff"/><stop offset=".2237" stop-color="#0085ff"/><stop offset=".3288" stop-color="#7b67ff"/><stop offset=".4329" stop-color="#ff46ff"/><stop offset=".4703" stop-color="#ff31d5"/><stop offset=".5142" stop-color="#ff1eb1"/><stop offset=".5653" stop-color="#ff0f93"/><stop offset=".6265" stop-color="#ff017a"/><stop offset=".6986" stop-color="#ff0064"/><stop offset=".7826" stop-color="#ff0051"/><stop offset="1" stop-color="#ff0034"/></linearGradient>
<linearGradient id="c79" gradientUnits="userSpaceOnUse" x1="1053" x2="1597.5"><stop offset="0" stop-color="#00b9ff"/><stop offset=".2241" stop-color="#0081ff"/><stop offset=".3306" stop-color="#7b63ff"/><stop offset=".4371" stop-color="#ff43ff"/><stop offset=".4747" stop-color="#ff2ed5"/><stop offset=".5188" stop-color="#ff1cb2"/><stop offset=".5702" stop-color="#ff0d94"/><stop offset=".6309" stop-color="#ff007b"/><stop offset=".7025" stop-color="#ff0065"/><stop offset=".786" stop-color="#ff0053"/><stop offset="1" stop-color="#ff0036"/></linearGradient>
<linearGradient id="c80" gradientUnits="userSpaceOnUse" x1="1054" x2="1595.5"><stop offset="0" stop-color="#00b5ff"/><stop offset=".2235" stop-color="#007eff"/><stop offset=".3315" stop-color="#7960ff"/><stop offset=".4414" stop-color="#ff3fff"/><stop offset=".4792" stop-color="#ff2bd6"/><stop offset=".5226" stop-color="#ff1ab3"/><stop offset=".5743" stop-color="#ff0b96"/><stop offset=".6343" stop-color="#ff007d"/><stop offset=".7054" stop-color="#ff0067"/><stop offset=".7886" stop-color="#ff0054"/><stop offset="1" stop-color="#ff0037"/></linearGradient>
<linearGradient id="c81" gradientUnits="userSpaceOnUse" x1="1055" x2="1593.5"><stop offset="0" stop-color="#00b1ff"/><stop offset=".2238" stop-color="#007bff"/><stop offset=".3352" stop-color="#7b5dff"/><stop offset=".4457" stop-color="#ff3cff"/><stop offset=".4838" stop-color="#ff29d6"/><stop offset=".5274" stop-color="#ff18b4"/><stop offset=".5785" stop-color="#ff0a97"/><stop offset=".6388" stop-color="#ff007e"/><stop offset=".7094" stop-color="#ff0068"/><stop offset=".7911" stop-color="#ff0056"/><stop offset="1" stop-color="#ff0039"/></linearGradient>
<linearGradient id="c82" gradientUnits="userSpaceOnUse" x1="1056" x2="1591.5"><stop offset="0" stop-color="#00adff"/><stop offset=".2241" stop-color="#0078ff"/><stop offset=".338" stop-color="#7c5aff"/><stop offset=".45" stop-color="#ff39ff"/><stop offset=".4883" stop-color="#ff26d7"/><stop offset=".5322" stop-color="#ff16b5"/><stop offset=".5836" stop-color="#ff0898"/><stop offset=".6246" stop-color="#ff0086"/><stop offset=".6433" stop-color="#ff007f"/><stop offset=".7134" stop-color="#ff006a"/><stop offset=".7946" stop-color="#ff0058"/><stop offset="1" stop-color="#ff003b"/></linearGradient>
<linearGradient id="c83" gradientUnits="userSpaceOnUse" x1="1056" x2="1590.5"><stop offset="0" stop-color="#00aaff"/><stop offset=".2245" stop-color="#0075ff"/><stop offset=".3396" stop-color="#7a57ff"/><stop offset=".4546" stop-color="#ff36ff"/><stop offset=".492" stop-color="#ff24d8"/><stop offset=".536" stop-color="#ff14b6"/><stop offset=".5762" stop-color="#ff0a9f"/><stop offset=".6221" stop-color="#ff008a"/><stop offset=".6473" stop-color="#ff0080"/><stop offset=".7166" stop-color="#ff006b"/><stop offset=".797" stop-color="#ff0059"/><stop offset="1" stop-color="#ff003c"/></linearGradient>
<linearGradient id="c84" gradientUnits="userSpaceOnUse" x1="1057" x2="1588.5"><stop offset="0" stop-color="#00a7ff"/><stop offset=".2248" stop-color="#0072ff"/><stop offset=".3434" stop-color="#7c54ff"/><stop offset=".4591" stop-color="#ff33ff"/><stop offset=".4967" stop-color="#ff21d8"/><stop offset=".5409" stop-color="#ff13b7"/><stop offset=".6199" stop-color="#ff008e"/><stop offset=".651" stop-color="#ff0082"/><stop offset=".7197" stop-color="#ff006d"/><stop offset=".7996" stop-color="#ff005b"/><stop offset="1" stop-color="#ff003e"/></linearGradient>
<linearGradient id="c85" gradientUnits="userSpaceOnUse" x1="1058" x2="1586.5"><stop offset="0" stop-color="#00a3ff"/><stop offset=".2252" stop-color="#0070ff"/><stop offset=".3453" stop-color="#7c51ff"/><stop offset=".4636" stop-color="#ff30ff"/><stop offset=".5014" stop-color="#ff1fd9"/><stop offset=".5449" stop-color="#ff11b8"/><stop offset=".6178" stop-color="#ff0092"/><stop offset=".6547" stop-color="#ff0084"/><stop offset=".7228" stop-color="#ff006f"/><stop offset=".8023" stop-color="#ff005c"/><stop offset="1" stop-color="#ff003f"/></linearGradient>
<linearGradient id="c86" gradientUnits="userSpaceOnUse" x1="1059" x2="1584.5"><stop offset="0" stop-color="#00a0ff"/><stop offset=".2245" stop-color="#006dff"/><stop offset=".3473" stop-color="#7b4eff"/><stop offset=".4681" stop-color="#ff2dff"/><stop offset=".5062" stop-color="#ff1dd9"/><stop offset=".55" stop-color="#ff0fb9"/><stop offset=".6166" stop-color="#ff0096"/><stop offset=".6594" stop-color="#ff0085"/><stop offset=".7269" stop-color="#ff0070"/><stop offset=".8049" stop-color="#ff005e"/><stop offset="1" stop-color="#ff0041"/></linearGradient>
<linearGradient id="c87" gradientUnits="userSpaceOnUse" x1="1060" x2="1582.5"><stop offset="0" stop-color="#009cff"/><stop offset=".2249" stop-color="#006aff"/><stop offset=".3502" stop-color="#7c4bff"/><stop offset=".4727" stop-color="#ff2aff"/><stop offset=".51" stop-color="#ff1bdb"/><stop offset=".5541" stop-color="#ff0dba"/><stop offset=".6144" stop-color="#ff009a"/><stop offset=".6632" stop-color="#ff0087"/><stop offset=".7301" stop-color="#ff0072"/><stop offset=".8077" stop-color="#ff0060"/><stop offset="1" stop-color="#ff0042"/></linearGradient>
<linearGradient id="c88" gradientUnits="userSpaceOnUse" x1="1061" x2="1580.5"><stop offset="0" stop-color="#0099ff"/><stop offset=".2252" stop-color="#0168ff"/><stop offset=".3532" stop-color="#7c48ff"/><stop offset=".4774" stop-color="#ff27ff"/><stop offset=".5159" stop-color="#ff18da"/><stop offset=".5592" stop-color="#ff0cbb"/><stop offset=".6121" stop-color="#ff009e"/><stop offset=".667" stop-color="#ff0088"/><stop offset=".7334" stop-color="#ff0073"/><stop offset=".8104" stop-color="#ff0061"/><stop offset="1" stop-color="#ff0044"/></linearGradient>
<linearGradient id="c89" gradientUnits="userSpaceOnUse" x1="1062" x2="1578.5"><stop offset="0" stop-color="#0096ff"/><stop offset=".2246" stop-color="#0065ff"/><stop offset=".3543" stop-color="#7b46ff"/><stop offset=".4821" stop-color="#ff25ff"/><stop offset=".5208" stop-color="#ff16db"/><stop offset=".5644" stop-color="#ff0abc"/><stop offset=".6099" stop-color="#ff00a3"/><stop offset=".6718" stop-color="#ff0089"/><stop offset=".7377" stop-color="#ff0075"/><stop offset=".8132" stop-color="#ff0063"/><stop offset="1" stop-color="#ff0046"/></linearGradient>
<linearGradient id="c90" gradientUnits="userSpaceOnUse" x1="1063" x2="1576.5"><stop offset="0" stop-color="#0093ff"/><stop offset=".2249" stop-color="#0063ff"/><stop offset=".3583" stop-color="#7d43ff"/><stop offset=".4869" stop-color="#ff22ff"/><stop offset=".5248" stop-color="#ff14dc"/><stop offset=".5686" stop-color="#ff08bd"/><stop offset=".6076" stop-color="#ff00a8"/><stop offset=".6758" stop-color="#ff008b"/><stop offset=".741" stop-color="#ff0077"/><stop offset=".816" stop-color="#ff0065"/><stop offset="1" stop-color="#ff0047"/></linearGradient>
<linearGradient id="c91" gradientUnits="userSpaceOnUse" x1="1064" x2="1574.5"><stop offset="0" stop-color="#0090ff"/><stop offset=".2243" stop-color="#0061ff"/><stop offset=".3585" stop-color="#7b41ff"/><stop offset=".4917" stop-color="#ff1fff"/><stop offset=".5299" stop-color="#ff12dc"/><stop offset=".573" stop-color="#ff07be"/><stop offset=".6053" stop-color="#ff00ac"/><stop offset=".6797" stop-color="#ff008c"/><stop offset=".7444" stop-color="#ff0078"/><stop offset=".8188" stop-color="#ff0066"/><stop offset="1" stop-color="#ff0049"/></linearGradient>
<linearGradient id="c92" gradientUnits="userSpaceOnUse" x1="1065" x2="1572.5"><stop offset="0" stop-color="#008dff"/><stop offset=".2246" stop-color="#005eff"/><stop offset=".3626" stop-color="#7c3eff"/><stop offset=".4966" stop-color="#ff1dff"/><stop offset=".535" stop-color="#ff10dd"/><stop offset=".5783" stop-color="#ff05bf"/><stop offset=".603" stop-color="#ff00b1"/><stop offset=".6837" stop-color="#ff008e"/><stop offset=".8217" stop-color="#ff0068"/><stop offset="1" stop-color="#ff004b"/></linearGradient>
<linearGradient id="c93" gradientUnits="userSpaceOnUse" x1="1066" x2="1570.5"><stop offset="0" stop-color="#008aff"/><stop offset=".225" stop-color="#005cff"/><stop offset=".3657" stop-color="#7d3cff"/><stop offset=".5015" stop-color="#ff1aff"/><stop offset=".5391" stop-color="#ff0ede"/><stop offset=".5828" stop-color="#ff04c0"/><stop offset=".6323" stop-color="#ff00a6"/><stop offset=".6878" stop-color="#ff008f"/><stop offset=".8236" stop-color="#ff006a"/><stop offset="1" stop-color="#ff004d"/></linearGradient>
<linearGradient id="c94" gradientUnits="userSpaceOnUse" x1="1067" x2="1568.5"><stop offset="0" stop-color="#0087ff"/><stop offset=".2243" stop-color="#005aff"/><stop offset=".3669" stop-color="#7b3aff"/><stop offset=".5065" stop-color="#ff18ff"/><stop offset=".5444" stop-color="#ff0cde"/><stop offset=".5872" stop-color="#ff02c1"/><stop offset=".6361" stop-color="#ff00a8"/><stop offset=".6919" stop-color="#ff0091"/><stop offset=".8265" stop-color="#ff006c"/><stop offset="1" stop-color="#ff004f"/></linearGradient>
<linearGradient id="c95" gradientUnits="userSpaceOnUse" x1="1067" x2="1566.5"><stop offset="0" stop-color="#0085ff"/><stop offset=".2262" stop-color="#0058ff"/><stop offset=".3724" stop-color="#7d37ff"/><stop offset=".5125" stop-color="#ff16ff"/><stop offset=".5506" stop-color="#ff0bde"/><stop offset=".5936" stop-color="#ff01c2"/><stop offset=".6416" stop-color="#ff00a9"/><stop offset=".6967" stop-color="#ff0092"/><stop offset=".8298" stop-color="#ff006d"/><stop offset="1" stop-color="#ff0050"/></linearGradient>
<linearGradient id="c96" gradientUnits="userSpaceOnUse" x1="1068" x2="1564.5"><stop offset="0" stop-color="#0082ff"/><stop offset=".2266" stop-color="#0056ff"/><stop offset=".3756" stop-color="#7d35ff"/><stop offset=".5176" stop-color="#ff13ff"/><stop offset=".5559" stop-color="#ff09df"/><stop offset=".5982" stop-color="#ff00c3"/><stop offset=".6465" stop-color="#ff00aa"/><stop offset=".7009" stop-color="#ff0094"/><stop offset=".8318" stop-color="#ff006f"/><stop offset="1" stop-color="#ff0052"/></linearGradient>
<linearGradient id="c97" gradientUnits="userSpaceOnUse" x1="1069" x2="1562.5"><stop offset="0" stop-color="#007fff"/><stop offset=".2259" stop-color="#0054ff"/><stop offset=".3759" stop-color="#7b33ff"/><stop offset=".5228" stop-color="#ff11ff"/><stop offset=".5603" stop-color="#ff07e0"/><stop offset=".6028" stop-color="#ff00c4"/><stop offset=".6505" stop-color="#ff00ac"/><stop offset=".7052" stop-color="#ff0095"/><stop offset=".8349" stop-color="#ff0071"/><stop offset="1" stop-color="#ff0054"/></linearGradient>
<linearGradient id="c98" gradientUnits="userSpaceOnUse" x1="1070" x2="1560.5"><stop offset="0" stop-color="#007dff"/><stop offset=".2263" stop-color="#0052ff"/><stop offset=".3802" stop-color="#7d31ff"/><stop offset=".528" stop-color="#ff0fff"/><stop offset=".5892" stop-color="#ff00d0"/><stop offset=".6086" stop-color="#ff00c5"/><stop offset=".6565" stop-color="#ff00ac"/><stop offset=".7095" stop-color="#ff0097"/><stop offset=".8379" stop-color="#ff0073"/><stop offset="1" stop-color="#ff0056"/></linearGradient>
<linearGradient id="c99" gradientUnits="userSpaceOnUse" x1="1071" x2="1558.5"><stop offset="0" stop-color="#007aff"/><stop offset=".2267" stop-color="#0050ff"/><stop offset=".3836" stop-color="#7d2fff"/><stop offset=".5333" stop-color="#ff0dff"/><stop offset=".5867" stop-color="#ff00d6"/><stop offset=".6133" stop-color="#ff00c6"/><stop offset=".6605" stop-color="#ff00ae"/><stop offset=".7138" stop-color="#ff0098"/><stop offset=".84" stop-color="#ff0075"/><stop offset="1" stop-color="#ff0058"/></linearGradient>
<linearGradient id="c100" gradientUnits="userSpaceOnUse" x1="1072" x2="1556.5"><stop offset="0" stop-color="#0078ff"/><stop offset=".226" stop-color="#004eff"/><stop offset=".3839" stop-color="#7b2dff"/><stop offset=".5387" stop-color="#ff0bff"/><stop offset=".5851" stop-color="#ff00db"/><stop offset=".6182" stop-color="#ff00c7"/><stop offset=".6656" stop-color="#ff00af"/><stop offset=".7183" stop-color="#ff009a"/><stop offset=".8431" stop-color="#ff0076"/><stop offset="1" stop-color="#ff005a"/></linearGradient>
<linearGradient id="c101" gradientUnits="userSpaceOnUse" x1="1073" x2="1555.5"><stop offset="0" stop-color="#0075ff"/><stop offset=".2259" stop-color="#004cff"/><stop offset=".3876" stop-color="#7d2bff"/><stop offset=".543" stop-color="#ff09ff"/><stop offset=".5813" stop-color="#ff00e1"/><stop offset=".6228" stop-color="#ff00c7"/><stop offset=".7212" stop-color="#ff009b"/><stop offset=".8456" stop-color="#ff0078"/><stop offset="1" stop-color="#ff005b"/></linearGradient>
<linearGradient id="c102" gradientUnits="userSpaceOnUse" x1="1074" x2="1553.5"><stop offset="0" stop-color="#0073ff"/><stop offset=".2263" stop-color="#004aff"/><stop offset=".391" stop-color="#7d29ff"/><stop offset=".5485" stop-color="#ff07ff"/><stop offset=".5787" stop-color="#ff00e7"/><stop offset=".6277" stop-color="#ff00c8"/><stop offset=".7258" stop-color="#ff009d"/><stop offset=".8478" stop-color="#ff007a"/><stop offset="1" stop-color="#ff005d"/></linearGradient>
<linearGradient id="c103" gradientUnits="userSpaceOnUse" x1="1075" x2="1551.5"><stop offset="0" stop-color="#0071ff"/><stop offset=".2256" stop-color="#0048ff"/><stop offset=".3924" stop-color="#7c27ff"/><stop offset=".554" stop-color="#ff05ff"/><stop offset=".5761" stop-color="#ff00ee"/><stop offset=".6327" stop-color="#ff00ca"/><stop offset=".7303" stop-color="#ff009e"/><stop offset=".851" stop-color="#ff007b"/><stop offset="1" stop-color="#ff005f"/></linearGradient>
<linearGradient id="c104" gradientUnits="userSpaceOnUse" x1="1076" x2="1549.5"><stop offset="0" stop-color="#006eff"/><stop offset=".226" stop-color="#0046ff"/><stop offset=".396" stop-color="#7d26ff"/><stop offset=".5597" stop-color="#ff03ff"/><stop offset=".5977" stop-color="#ff00e3"/><stop offset=".6389" stop-color="#ff00ca"/><stop offset=".735" stop-color="#ff00a0"/><stop offset=".8532" stop-color="#ff007d"/><stop offset="1" stop-color="#ff0061"/></linearGradient>
<linearGradient id="c105" gradientUnits="userSpaceOnUse" x1="1078" x2="1547.5"><stop offset="0" stop-color="#006cff"/><stop offset=".2247" stop-color="#0045ff"/><stop offset=".3983" stop-color="#7d24ff"/><stop offset=".5644" stop-color="#ff01ff"/><stop offset=".6028" stop-color="#ff00e3"/><stop offset=".6432" stop-color="#ff00cb"/><stop offset=".738" stop-color="#ff00a1"/><stop offset=".8552" stop-color="#ff007f"/><stop offset="1" stop-color="#ff0063"/></linearGradient>
<linearGradient id="c106" gradientUnits="userSpaceOnUse" x1="1079" x2="1545.5"><stop offset="0" stop-color="#0069ff"/><stop offset=".224" stop-color="#0043ff"/><stop offset=".3998" stop-color="#7c22ff"/><stop offset=".5702" stop-color="#ff00ff"/><stop offset=".6077" stop-color="#ff00e4"/><stop offset=".6484" stop-color="#ff00cc"/><stop offset=".7428" stop-color="#ff00a3"/><stop offset=".8585" stop-color="#ff0081"/><stop offset="1" stop-color="#ff0066"/></linearGradient>
<linearGradient id="c107" gradientUnits="userSpaceOnUse" x1="1080" x2="1543.5"><stop offset="0" stop-color="#0067ff"/><stop offset=".2244" stop-color="#0041ff"/><stop offset=".4035" stop-color="#7d20ff"/><stop offset=".5761" stop-color="#ff00ff"/><stop offset=".6537" stop-color="#ff00cd"/><stop offset=".7476" stop-color="#ff00a4"/><stop offset=".8619" stop-color="#ff0083"/><stop offset="1" stop-color="#ff0068"/></linearGradient>
<linearGradient id="c108" gradientUnits="userSpaceOnUse" x1="1081" x2="1541.5"><stop offset="0" stop-color="#0065ff"/><stop offset=".2248" stop-color="#0040ff"/><stop offset=".4072" stop-color="#7d1eff"/><stop offset=".5613" stop-color="#ef00ff"/><stop offset=".582" stop-color="#ff00ff"/><stop offset=".6591" stop-color="#ff00ce"/><stop offset=".7514" stop-color="#ff00a6"/><stop offset=".8632" stop-color="#ff0085"/><stop offset="1" stop-color="#ff006a"/></linearGradient>
<linearGradient id="c109" gradientUnits="userSpaceOnUse" x1="1082" x2="1539.5"><stop offset="0" stop-color="#0063ff"/><stop offset=".224" stop-color="#003eff"/><stop offset=".4098" stop-color="#7d1dff"/><stop offset=".5585" stop-color="#e800ff"/><stop offset=".588" stop-color="#ff00ff"/><stop offset=".6645" stop-color="#ff00cf"/><stop offset=".7563" stop-color="#ff00a7"/><stop offset=".8667" stop-color="#ff0087"/><stop offset="1" stop-color="#ff006c"/></linearGradient>
<linearGradient id="c110" gradientUnits="userSpaceOnUse" x1="1083" x2="1537.5"><stop offset="0" stop-color="#0061ff"/><stop offset=".2244" stop-color="#003dff"/><stop offset=".3927" stop-color="#6f1fff"/><stop offset=".5556" stop-color="#e200ff"/><stop offset=".5941" stop-color="#ff00ff"/><stop offset=".67" stop-color="#ff00d0"/><stop offset=".7602" stop-color="#ff00a9"/><stop offset=".8691" stop-color="#ff0089"/><stop offset="1" stop-color="#ff006e"/></linearGradient>
<linearGradient id="c111" gradientUnits="userSpaceOnUse" x1="1084" x2="1535.5"><stop offset="0" stop-color="#005fff"/><stop offset=".2248" stop-color="#003bff"/><stop offset=".392" stop-color="#6d1eff"/><stop offset=".5526" stop-color="#dc00ff"/><stop offset=".6002" stop-color="#ff00ff"/><stop offset=".6755" stop-color="#ff00d1"/><stop offset=".7652" stop-color="#ff00ab"/><stop offset=".8715" stop-color="#ff008b"/><stop offset="1" stop-color="#ff0070"/></linearGradient>
<linearGradient id="c112" gradientUnits="userSpaceOnUse" x1="1085" x2="1533.5"><stop offset="0" stop-color="#005dff"/><stop offset=".2241" stop-color="#003aff"/><stop offset=".3902" stop-color="#691dff"/><stop offset=".5507" stop-color="#d700ff"/><stop offset=".6076" stop-color="#ff00fe"/><stop offset=".6812" stop-color="#ff00d2"/><stop offset=".7692" stop-color="#ff00ac"/><stop offset=".874" stop-color="#ff008d"/><stop offset="1" stop-color="#ff0073"/></linearGradient>
<linearGradient id="c113" gradientUnits="userSpaceOnUse" x1="1086" x2="1531.5"><stop offset="0" stop-color="#005bff"/><stop offset=".2245" stop-color="#0038ff"/><stop offset=".3883" stop-color="#661dff"/><stop offset=".5477" stop-color="#d100ff"/><stop offset=".6139" stop-color="#ff00ff"/><stop offset=".6869" stop-color="#ff00d3"/><stop offset=".7744" stop-color="#ff00ae"/><stop offset=".8777" stop-color="#ff008f"/><stop offset="1" stop-color="#ff0075"/></linearGradient>
<linearGradient id="c114" gradientUnits="userSpaceOnUse" x1="1087" x2="1529.5"><stop offset="0" stop-color="#0059ff"/><stop offset=".2237" stop-color="#0037ff"/><stop offset=".3842" stop-color="#621cff"/><stop offset=".5446" stop-color="#cb00ff"/><stop offset=".6203" stop-color="#ff00ff"/><stop offset=".6927" stop-color="#ff00d4"/><stop offset=".7785" stop-color="#ff00b0"/><stop offset=".8802" stop-color="#ff0091"/><stop offset="1" stop-color="#ff0077"/></linearGradient>
<linearGradient id="c115" gradientUnits="userSpaceOnUse" x1="1088" x2="1527.5"><stop offset="0" stop-color="#0057ff"/><stop offset=".2241" stop-color="#0035ff"/><stop offset=".3857" stop-color="#611bff"/><stop offset=".5415" stop-color="#c600ff"/><stop offset=".6268" stop-color="#ff00ff"/><stop offset=".6985" stop-color="#ff00d5"/><stop offset=".7827" stop-color="#ff00b1"/><stop offset=".8828" stop-color="#ff0093"/><stop offset="1" stop-color="#ff0079"/></linearGradient>
<linearGradient id="c116" gradientUnits="userSpaceOnUse" x1="1089" x2="1525.5"><stop offset="0" stop-color="#0055ff"/><stop offset=".2245" stop-color="#0034ff"/><stop offset=".3837" stop-color="#5f1aff"/><stop offset=".5384" stop-color="#c000ff"/><stop offset=".6334" stop-color="#ff00ff"/><stop offset=".7045" stop-color="#ff00d6"/><stop offset=".7881" stop-color="#ff00b3"/><stop offset=".8855" stop-color="#ff0095"/><stop offset="1" stop-color="#ff007c"/></linearGradient>
<linearGradient id="c117" gradientUnits="userSpaceOnUse" x1="1091" x2="1523.5"><stop offset="0" stop-color="#0053ff"/><stop offset=".222" stop-color="#0033ff"/><stop offset=".378" stop-color="#5a1aff"/><stop offset=".5341" stop-color="#bb00ff"/><stop offset=".6393" stop-color="#ff00ff"/><stop offset=".7098" stop-color="#ff00d7"/><stop offset=".7919" stop-color="#ff00b4"/><stop offset=".8879" stop-color="#ff0097"/><stop offset="1" stop-color="#ff007e"/></linearGradient>
<linearGradient id="c118" gradientUnits="userSpaceOnUse" x1="1092" x2="1521.5"><stop offset="0" stop-color="#0052ff"/><stop offset=".2224" stop-color="#0031ff"/><stop offset=".3783" stop-color="#5919ff"/><stop offset=".5308" stop-color="#b600ff"/><stop offset=".6461" stop-color="#ff00ff"/><stop offset=".7159" stop-color="#ff00d7"/><stop offset=".7963" stop-color="#ff00b6"/><stop offset=".8906" stop-color="#ff0099"/><stop offset="1" stop-color="#ff0081"/></linearGradient>
<linearGradient id="c119" gradientUnits="userSpaceOnUse" x1="1093" x2="1520.5"><stop offset="0" stop-color="#0050ff"/><stop offset=".2222" stop-color="#0030ff"/><stop offset=".3766" stop-color="#5718ff"/><stop offset=".5263" stop-color="#b100ff"/><stop offset=".6515" stop-color="#ff00ff"/><stop offset=".7205" stop-color="#ff00d8"/><stop offset=".8" stop-color="#ff00b8"/><stop offset=".8924" stop-color="#ff009b"/><stop offset="1" stop-color="#ff0083"/></linearGradient>
<linearGradient id="c120" gradientUnits="userSpaceOnUse" x1="1094" x2="1518.5"><stop offset="0" stop-color="#004eff"/><stop offset=".2214" stop-color="#002fff"/><stop offset=".523" stop-color="#ac00ff"/><stop offset=".6584" stop-color="#ff00ff"/><stop offset=".7267" stop-color="#ff00d9"/><stop offset=".8045" stop-color="#ff00b9"/><stop offset=".8952" stop-color="#ff009d"/><stop offset="1" stop-color="#ff0085"/></linearGradient>
<linearGradient id="c121" gradientUnits="userSpaceOnUse" x1="1095" x2="1516.5"><stop offset="0" stop-color="#004cff"/><stop offset=".2218" stop-color="#002eff"/><stop offset=".5196" stop-color="#a700ff"/><stop offset=".6655" stop-color="#ff00ff"/><stop offset=".7319" stop-color="#ff00db"/><stop offset=".809" stop-color="#ff00bb"/><stop offset=".898" stop-color="#ff009f"/><stop offset="1" stop-color="#ff0088"/></linearGradient>
<linearGradient id="c122" gradientUnits="userSpaceOnUse" x1="1096" x2="1514.5"><stop offset="0" stop-color="#004bff"/><stop offset=".2222" stop-color="#002cff"/><stop offset=".5173" stop-color="#a300ff"/><stop offset=".6726" stop-color="#ff00ff"/><stop offset=".7384" stop-color="#ff00db"/><stop offset=".8136" stop-color="#ff00bd"/><stop offset=".9008" stop-color="#ff00a2"/><stop offset="1" stop-color="#ff008a"/></linearGradient>
<linearGradient id="c123" gradientUnits="userSpaceOnUse" x1="1097" x2="1512.5"><stop offset="0" stop-color="#0049ff"/><stop offset=".2214" stop-color="#002bff"/><stop offset=".5138" stop-color="#9e00ff"/><stop offset=".6799" stop-color="#ff00ff"/><stop offset=".7449" stop-color="#ff00dc"/><stop offset=".8183" stop-color="#ff00be"/><stop offset=".9025" stop-color="#ff00a4"/><stop offset="1" stop-color="#ff008d"/></linearGradient>
<linearGradient id="c124" gradientUnits="userSpaceOnUse" x1="1099" x2="1510.5"><stop offset="0" stop-color="#0047ff"/><stop offset=".2199" stop-color="#002aff"/><stop offset=".5091" stop-color="#9900ff"/><stop offset=".6865" stop-color="#ff00ff"/><stop offset=".7509" stop-color="#ff00dd"/><stop offset=".8238" stop-color="#ff00c0"/><stop offset=".9064" stop-color="#ff00a6"/><stop offset="1" stop-color="#ff008f"/></linearGradient>
<linearGradient id="c125" gradientUnits="userSpaceOnUse" x1="1100" x2="1508.5"><stop offset="0" stop-color="#0046ff"/><stop offset=".2203" stop-color="#0029ff"/><stop offset=".5055" stop-color="#9500ff"/><stop offset=".694" stop-color="#ff00ff"/><stop offset=".7576" stop-color="#ff00de"/><stop offset=".8286" stop-color="#ff00c2"/><stop offset=".9094" stop-color="#ff00a8"/><stop offset="1" stop-color="#ff0092"/></linearGradient>
<linearGradient id="c126" gradientUnits="userSpaceOnUse" x1="1101" x2="1506.5"><stop offset="0" stop-color="#0044ff"/><stop offset=".2195" stop-color="#0028ff"/><stop offset=".5018" stop-color="#9000ff"/><stop offset=".7016" stop-color="#ff00ff"/><stop offset=".7633" stop-color="#ff00df"/><stop offset=".8323" stop-color="#ff00c4"/><stop offset=".9112" stop-color="#ff00ab"/><stop offset="1" stop-color="#ff0095"/></linearGradient>
<linearGradient id="c127" gradientUnits="userSpaceOnUse" x1="1102" x2="1504.5"><stop offset="0" stop-color="#0043ff"/><stop offset=".2199" stop-color="#0026ff"/><stop offset=".4981" stop-color="#8c00ff"/><stop offset=".7093" stop-color="#ff00ff"/><stop offset=".7702" stop-color="#ff00e0"/><stop offset=".8373" stop-color="#ff00c5"/><stop offset=".9143" stop-color="#ff00ad"/><stop offset="1" stop-color="#ff0098"/></linearGradient>
<linearGradient id="c128" gradientUnits="userSpaceOnUse" x1="1103" x2="1502.5"><stop offset="0" stop-color="#0041ff"/><stop offset=".2203" stop-color="#0025ff"/><stop offset=".4944" stop-color="#8800ff"/><stop offset=".7171" stop-color="#ff00ff"/><stop offset=".776" stop-color="#ff00e2"/><stop offset=".8423" stop-color="#ff00c7"/><stop offset=".9161" stop-color="#ff00b0"/><stop offset="1" stop-color="#ff009a"/></linearGradient>
<linearGradient id="c129" gradientUnits="userSpaceOnUse" x1="1104" x2="1500.5"><stop offset="0" stop-color="#0040ff"/><stop offset=".2194" stop-color="#0024ff"/><stop offset=".4905" stop-color="#8400ff"/><stop offset=".7238" stop-color="#ff00ff"/><stop offset=".7856" stop-color="#ff00e1"/><stop offset=".8487" stop-color="#ff00c8"/><stop offset="1" stop-color="#ff009d"/></linearGradient>
<linearGradient id="c130" gradientUnits="userSpaceOnUse" x1="1106" x2="1498.5"><stop offset="0" stop-color="#003eff"/><stop offset=".2178" stop-color="#0023ff"/><stop offset=".4854" stop-color="#7f00ff"/><stop offset=".7312" stop-color="#fe00ff"/><stop offset=".7924" stop-color="#ff00e2"/><stop offset=".8535" stop-color="#ff00ca"/><stop offset="1" stop-color="#ff00a0"/></linearGradient>
<linearGradient id="c131" gradientUnits="userSpaceOnUse" x1="1107" x2="1496.5"><stop offset="0" stop-color="#003cff"/><stop offset=".2182" stop-color="#0022ff"/><stop offset=".4814" stop-color="#7b00ff"/><stop offset=".7394" stop-color="#fe00ff"/><stop offset=".8588" stop-color="#ff00cc"/><stop offset="1" stop-color="#ff00a3"/></linearGradient>
<linearGradient id="c132" gradientUnits="userSpaceOnUse" x1="1108" x2="1494.5"><stop offset="0" stop-color="#003bff"/><stop offset=".2173" stop-color="#0021ff"/><stop offset=".4774" stop-color="#7700ff"/><stop offset=".7477" stop-color="#fe00ff"/><stop offset=".8642" stop-color="#ff00ce"/><stop offset="1" stop-color="#ff00a6"/></linearGradient>
<linearGradient id="c133" gradientUnits="userSpaceOnUse" x1="1109" x2="1492.5"><stop offset="0" stop-color="#003aff"/><stop offset=".2177" stop-color="#0020ff"/><stop offset=".4746" stop-color="#7400ff"/><stop offset=".7562" stop-color="#fe00ff"/><stop offset=".8683" stop-color="#ff00d0"/><stop offset="1" stop-color="#ff00a9"/></linearGradient>
<linearGradient id="c134" gradientUnits="userSpaceOnUse" x1="1110" x2="1490.5"><stop offset="0" stop-color="#0038ff"/><stop offset=".2181" stop-color="#001fff"/><stop offset=".4704" stop-color="#7000ff"/><stop offset=".7648" stop-color="#fe00ff"/><stop offset=".8739" stop-color="#ff00d1"/><stop offset="1" stop-color="#ff00ac"/></linearGradient>
<linearGradient id="c135" gradientUnits="userSpaceOnUse" x1="1111" x2="1488.5"><stop offset="0" stop-color="#0037ff"/><stop offset=".2172" stop-color="#001eff"/><stop offset=".4662" stop-color="#6d00ff"/><stop offset=".7735" stop-color="#fe00ff"/><stop offset=".8795" stop-color="#ff00d3"/><stop offset="1" stop-color="#ff00af"/></linearGradient>
<linearGradient id="c136" gradientUnits="userSpaceOnUse" x1="1113" x2="1486.5"><stop offset="0" stop-color="#0035ff"/><stop offset=".2155" stop-color="#001dff"/><stop offset=".4605" stop-color="#6900ff"/><stop offset=".7831" stop-color="#ff00ff"/><stop offset=".8822" stop-color="#ff00d6"/><stop offset="1" stop-color="#ff00b2"/></linearGradient>
<linearGradient id="c137" gradientUnits="userSpaceOnUse" x1="1114" x2="1485.5"><stop offset="0" stop-color="#0034ff"/><stop offset=".214" stop-color="#001cff"/><stop offset=".4549" stop-color="#6500ff"/><stop offset=".79" stop-color="#ff00ff"/><stop offset=".8869" stop-color="#ff00d7"/><stop offset="1" stop-color="#ff00b5"/></linearGradient>
<linearGradient id="c138" gradientUnits="userSpaceOnUse" x1="1115" x2="1483.5"><stop offset="0" stop-color="#0033ff"/><stop offset=".2144" stop-color="#001bff"/><stop offset=".4505" stop-color="#6200ff"/><stop offset=".7992" stop-color="#ff00ff"/><stop offset=".8928" stop-color="#ff00d9"/><stop offset="1" stop-color="#ff00b8"/></linearGradient>
<linearGradient id="c139" gradientUnits="userSpaceOnUse" x1="1116" x2="1481.5"><stop offset="0" stop-color="#0031ff"/><stop offset=".2148" stop-color="#001aff"/><stop offset=".446" stop-color="#5e00ff"/><stop offset=".8085" stop-color="#ff00ff"/><stop offset=".8974" stop-color="#ff00db"/><stop offset="1" stop-color="#ff00bb"/></linearGradient>
<linearGradient id="c140" gradientUnits="userSpaceOnUse" x1="1118" x2="1479.5"><stop offset="0" stop-color="#0030ff"/><stop offset=".2116" stop-color="#001aff"/><stop offset=".4398" stop-color="#5b00ff"/><stop offset=".8174" stop-color="#ff00ff"/><stop offset=".9032" stop-color="#ff00dd"/><stop offset="1" stop-color="#ff00bf"/></linearGradient>
<linearGradient id="c141" gradientUnits="userSpaceOnUse" x1="1119" x2="1477.5"><stop offset="0" stop-color="#002fff"/><stop offset=".212" stop-color="#0019ff"/><stop offset=".4351" stop-color="#5800ff"/><stop offset=".8271" stop-color="#ff00ff"/><stop offset=".9079" stop-color="#ff00df"/><stop offset="1" stop-color="#ff00c2"/></linearGradient>
<linearGradient id="c142" gradientUnits="userSpaceOnUse" x1="1120" x2="1475.5"><stop offset="0" stop-color="#002dff"/><stop offset=".2124" stop-color="#0018ff"/><stop offset=".4304" stop-color="#5400ff"/><stop offset=".8368" stop-color="#ff00ff"/><stop offset=".9142" stop-color="#ff00e0"/><stop offset="1" stop-color="#ff00c6"/></linearGradient>
<linearGradient id="c143" gradientUnits="userSpaceOnUse" x1="1121" x2="1473.5"><stop offset="0" stop-color="#002cff"/><stop offset=".2113" stop-color="#0017ff"/><stop offset=".4255" stop-color="#5100ff"/><stop offset=".8468" stop-color="#ff00ff"/><stop offset=".9191" stop-color="#ff00e3"/><stop offset="1" stop-color="#ff00c9"/></linearGradient>
<linearGradient id="c144" gradientUnits="userSpaceOnUse" x1="1122" x2="1471.5"><stop offset="0" stop-color="#002bff"/><stop offset=".2117" stop-color="#0016ff"/><stop offset=".422" stop-color="#4f00ff"/><stop offset=".6423" stop-color="#a500ff"/><stop offset=".8569" stop-color="#ff00ff"/><stop offset=".9256" stop-color="#ff00e4"/><stop offset="1" stop-color="#ff00cd"/></linearGradient>
<linearGradient id="c145" gradientUnits="userSpaceOnUse" x1="1124" x2="1469.5"><stop offset="0" stop-color="#002aff"/><stop offset=".2098" stop-color="#0015ff"/><stop offset=".4153" stop-color="#4b00ff"/><stop offset=".644" stop-color="#a400ff"/><stop offset=".8669" stop-color="#ff00ff"/><stop offset="1" stop-color="#ff00d0"/></linearGradient>
<linearGradient id="c146" gradientUnits="userSpaceOnUse" x1="1125" x2="1467.5"><stop offset="0" stop-color="#0028ff"/><stop offset=".2088" stop-color="#0014ff"/><stop offset=".4102" stop-color="#4800ff"/><stop offset=".6467" stop-color="#a200ff"/><stop offset=".8774" stop-color="#ff00ff"/><stop offset="1" stop-color="#ff00d4"/></linearGradient>
<linearGradient id="c147" gradientUnits="userSpaceOnUse" x1="1126" x2="1465.5"><stop offset="0" stop-color="#0027ff"/><stop offset=".2091" stop-color="#0013ff"/><stop offset=".405" stop-color="#4500ff"/><stop offset=".6495" stop-color="#a100ff"/><stop offset=".8881" stop-color="#ff00ff"/><stop offset="1" stop-color="#ff00d8"/></linearGradient>
<linearGradient id="c148" gradientUnits="userSpaceOnUse" x1="1127" x2="1463.5"><stop offset="0" stop-color="#0026ff"/><stop offset=".2095" stop-color="#0013ff"/><stop offset=".3997" stop-color="#4200ff"/><stop offset=".6538" stop-color="#9f00ff"/><stop offset=".899" stop-color="#ff00ff"/><stop offset="1" stop-color="#ff00dc"/></linearGradient>
<linearGradient id="c149" gradientUnits="userSpaceOnUse" x1="1129" x2="1461.5"><stop offset="0" stop-color="#0025ff"/><stop offset=".206" stop-color="#0012ff"/><stop offset=".3925" stop-color="#3f00ff"/><stop offset=".6556" stop-color="#9e00ff"/><stop offset=".9098" stop-color="#ff00ff"/><stop offset="1" stop-color="#ff00e0"/></linearGradient>
<linearGradient id="c150" gradientUnits="userSpaceOnUse" x1="1130" x2="1459.5"><stop offset="0" stop-color="#0024ff"/><stop offset=".2064" stop-color="#0011ff"/><stop offset=".3869" stop-color="#3d00ff"/><stop offset=".6586" stop-color="#9c00ff"/><stop offset=".9211" stop-color="#ff00ff"/><stop offset="1" stop-color="#ff00e4"/></linearGradient>
<linearGradient id="c151" gradientUnits="userSpaceOnUse" x1="1131" x2="1457.5"><stop offset="0" stop-color="#0023ff"/><stop offset=".2067" stop-color="#0010ff"/><stop offset=".3813" stop-color="#3a00ff"/><stop offset=".6616" stop-color="#9b00ff"/><stop offset=".9326" stop-color="#ff00ff"/><stop offset="1" stop-color="#ff00e8"/></linearGradient>
<linearGradient id="c152" gradientUnits="userSpaceOnUse" x1="1133" x2="1455.5"><stop offset="0" stop-color="#0021ff"/><stop offset=".2031" stop-color="#0010ff"/><stop offset=".3736" stop-color="#3700ff"/><stop offset=".6636" stop-color="#9900ff"/><stop offset=".9442" stop-color="#ff00ff"/><stop offset="1" stop-color="#ff00ec"/></linearGradient>
<linearGradient id="c153" gradientUnits="userSpaceOnUse" x1="1134" x2="1453.5"><stop offset="0" stop-color="#0020ff"/><stop offset=".2034" stop-color="#000fff"/><stop offset=".3678" stop-color="#3400ff"/><stop offset=".6667" stop-color="#9800ff"/><stop offset=".9562" stop-color="#ff00ff"/><stop offset="1" stop-color="#ff00f0"/></linearGradient>
<linearGradient id="c154" gradientUnits="userSpaceOnUse" x1="1135" x2="1451.5"><stop offset="0" stop-color="#001fff"/><stop offset=".2038" stop-color="#000eff"/><stop offset=".3618" stop-color="#3200ff"/><stop offset=".6698" stop-color="#9600ff"/><stop offset=".9684" stop-color="#ff00ff"/><stop offset="1" stop-color="#ff00f4"/></linearGradient>
<linearGradient id="c155" gradientUnits="userSpaceOnUse" x1="1136" x2="1450.5"><stop offset="0" stop-color="#001eff"/><stop offset=".2019" stop-color="#000dff"/><stop offset=".3561" stop-color="#2f00ff"/><stop offset=".6725" stop-color="#9500ff"/><stop offset=".9777" stop-color="#ff00ff"/><stop offset="1" stop-color="#ff00f7"/></linearGradient>
<linearGradient id="c156" gradientUnits="userSpaceOnUse" x1="1138" x2="1448.5"><stop offset="0" stop-color="#001dff"/><stop offset=".1997" stop-color="#000dff"/><stop offset=".3478" stop-color="#2d00ff"/><stop offset=".6747" stop-color="#9400ff"/><stop offset=".9903" stop-color="#ff00ff"/><stop offset="1" stop-color="#ff00fc"/></linearGradient>
<linearGradient id="c157" gradientUnits="userSpaceOnUse" x1="1139" x2="1446.5"><stop offset="0" stop-color="#001cff"/><stop offset=".2" stop-color="#000cff"/><stop offset=".3415" stop-color="#2a00ff"/><stop offset=".6764" stop-color="#9200ff"/><stop offset="1" stop-color="#fe00ff"/></linearGradient>
<linearGradient id="c158" gradientUnits="userSpaceOnUse" x1="1140" x2="1444.5"><stop offset="0" stop-color="#001bff"/><stop offset=".1987" stop-color="#000bff"/><stop offset=".335" stop-color="#2800ff"/><stop offset=".6732" stop-color="#8f00ff"/><stop offset="1" stop-color="#f900ff"/></linearGradient>
<linearGradient id="c159" gradientUnits="userSpaceOnUse" x1="1142" x2="1442.5"><stop offset="0" stop-color="#001aff"/><stop offset=".1963" stop-color="#000aff"/><stop offset=".3261" stop-color="#2500ff"/><stop offset=".6689" stop-color="#8b00ff"/><stop offset="1" stop-color="#f500ff"/></linearGradient>
<linearGradient id="c160" gradientUnits="userSpaceOnUse" x1="1143" x2="1440.5"><stop offset="0" stop-color="#0019ff"/><stop offset=".195" stop-color="#000aff"/><stop offset=".3193" stop-color="#2300ff"/><stop offset=".6655" stop-color="#8800ff"/><stop offset="1" stop-color="#f100ff"/></linearGradient>
<linearGradient id="c161" gradientUnits="userSpaceOnUse" x1="1145" x2="1438.5"><stop offset="0" stop-color="#0018ff"/><stop offset=".1925" stop-color="#0009ff"/><stop offset=".3101" stop-color="#2000ff"/><stop offset=".661" stop-color="#8500ff"/><stop offset="1" stop-color="#ec00ff"/></linearGradient>
<linearGradient id="c162" gradientUnits="userSpaceOnUse" x1="1146" x2="1436.5"><stop offset="0" stop-color="#0017ff"/><stop offset=".1928" stop-color="#0008ff"/><stop offset=".3029" stop-color="#1e00ff"/><stop offset=".6575" stop-color="#8100ff"/><stop offset="1" stop-color="#e800ff"/></linearGradient>
<linearGradient id="c163" gradientUnits="userSpaceOnUse" x1="1147" x2="1434.5"><stop offset="0" stop-color="#0016ff"/><stop offset=".1913" stop-color="#0008ff"/><stop offset=".2957" stop-color="#1c00ff"/><stop offset=".6539" stop-color="#7e00ff"/><stop offset="1" stop-color="#e400ff"/></linearGradient>
<linearGradient id="c164" gradientUnits="userSpaceOnUse" x1="1149" x2="1432.5"><stop offset="0" stop-color="#0015ff"/><stop offset=".1887" stop-color="#0007ff"/><stop offset=".2857" stop-color="#1900ff"/><stop offset=".649" stop-color="#7b00ff"/><stop offset="1" stop-color="#e000ff"/></linearGradient>
<linearGradient id="c165" gradientUnits="userSpaceOnUse" x1="1150" x2="1430.5"><stop offset="0" stop-color="#0014ff"/><stop offset=".1889" stop-color="#0006ff"/><stop offset=".2781" stop-color="#1700ff"/><stop offset=".6453" stop-color="#7800ff"/><stop offset="1" stop-color="#dc00ff"/></linearGradient>
<linearGradient id="c166" gradientUnits="userSpaceOnUse" x1="1151" x2="1428.5"><stop offset="0" stop-color="#0013ff"/><stop offset=".1874" stop-color="#0006ff"/><stop offset=".2721" stop-color="#1500ff"/><stop offset=".6414" stop-color="#7500ff"/><stop offset="1" stop-color="#d800ff"/></linearGradient>
<linearGradient id="c167" gradientUnits="userSpaceOnUse" x1="1153" x2="1426.5"><stop offset="0" stop-color="#0012ff"/><stop offset=".1846" stop-color="#0005ff"/><stop offset=".2614" stop-color="#1300ff"/><stop offset=".6362" stop-color="#7200ff"/><stop offset="1" stop-color="#d400ff"/></linearGradient>
<linearGradient id="c168" gradientUnits="userSpaceOnUse" x1="1154" x2="1424.5"><stop offset="0" stop-color="#0011ff"/><stop offset=".1848" stop-color="#0005ff"/><stop offset=".2532" stop-color="#1100ff"/><stop offset=".6322" stop-color="#6f00ff"/><stop offset="1" stop-color="#d100ff"/></linearGradient>
<linearGradient id="c169" gradientUnits="userSpaceOnUse" x1="1156" x2="1422.5"><stop offset="0" stop-color="#0010ff"/><stop offset=".1801" stop-color="#0004ff"/><stop offset=".242" stop-color="#0f00ff"/><stop offset=".6266" stop-color="#6c00ff"/><stop offset="1" stop-color="#cd00ff"/></linearGradient>
<linearGradient id="c170" gradientUnits="userSpaceOnUse" x1="1157" x2="1420.5"><stop offset="0" stop-color="#000fff"/><stop offset=".1803" stop-color="#0003ff"/><stop offset=".2334" stop-color="#0c00ff"/><stop offset=".5977" stop-color="#6300ff"/><stop offset="1" stop-color="#c900ff"/></linearGradient>
<linearGradient id="c171" gradientUnits="userSpaceOnUse" x1="1159" x2="1418.5"><stop offset="0" stop-color="#000eff"/><stop offset=".1773" stop-color="#0003ff"/><stop offset=".2216" stop-color="#0a00ff"/><stop offset=".5954" stop-color="#6100ff"/><stop offset="1" stop-color="#c500ff"/></linearGradient>
<linearGradient id="c172" gradientUnits="userSpaceOnUse" x1="1160" x2="1417.5"><stop offset="0" stop-color="#000dff"/><stop offset=".1748" stop-color="#0002ff"/><stop offset=".5942" stop-color="#6000ff"/><stop offset="1" stop-color="#c300ff"/></linearGradient>
<linearGradient id="c173" gradientUnits="userSpaceOnUse" x1="1161" x2="1415.5"><stop offset="0" stop-color="#000cff"/><stop offset=".1749" stop-color="#0002ff"/><stop offset=".5933" stop-color="#5e00ff"/><stop offset="1" stop-color="#bf00ff"/></linearGradient>
<linearGradient id="c174" gradientUnits="userSpaceOnUse" x1="1163" x2="1413.5"><stop offset="0" stop-color="#000bff"/><stop offset=".1717" stop-color="#0001ff"/><stop offset=".5928" stop-color="#5d00ff"/><stop offset="1" stop-color="#bc00ff"/></linearGradient>
<linearGradient id="c175" gradientUnits="userSpaceOnUse" x1="1164" x2="1411.5"><stop offset="0" stop-color="#000bff"/><stop offset=".1697" stop-color="#0001ff"/><stop offset=".5919" stop-color="#5b00ff"/><stop offset="1" stop-color="#b800ff"/></linearGradient>
<linearGradient id="c176" gradientUnits="userSpaceOnUse" x1="1166" x2="1409.5"><stop offset="0" stop-color="#000aff"/><stop offset=".1663" stop-color="#0000ff"/><stop offset=".5893" stop-color="#5900ff"/><stop offset="1" stop-color="#b500ff"/></linearGradient>
<linearGradient id="c177" gradientUnits="userSpaceOnUse" x1="1167" x2="1407.5"><stop offset="0" stop-color="#0009ff"/><stop offset=".1642" stop-color="#0000ff"/><stop offset=".5863" stop-color="#5700ff"/><stop offset="1" stop-color="#b200ff"/></linearGradient>
<linearGradient id="c178" gradientUnits="userSpaceOnUse" x1="1169" x2="1405.5"><stop offset="0" stop-color="#0008ff"/><stop offset=".1607" stop-color="#0000ff"/><stop offset=".5856" stop-color="#5600ff"/><stop offset="1" stop-color="#ae00ff"/></linearGradient>
<linearGradient id="c179" gradientUnits="userSpaceOnUse" x1="1170" x2="1403.5"><stop offset="0" stop-color="#0007ff"/><stop offset=".1606" stop-color="#0000ff"/><stop offset="1" stop-color="#ab00ff"/></linearGradient>
<linearGradient id="c180" gradientUnits="userSpaceOnUse" x1="1172" x2="1401.5"><stop offset="0" stop-color="#0006ff"/><stop offset=".1547" stop-color="#0000ff"/><stop offset="1" stop-color="#a800ff"/></linearGradient>
<linearGradient id="c181" gradientUnits="userSpaceOnUse" x1="1174" x2="1399.5"><stop offset="0" stop-color="#0005ff"/><stop offset=".1508" stop-color="#0000ff"/><stop offset="1" stop-color="#a500ff"/></linearGradient>
<linearGradient id="c182" gradientUnits="userSpaceOnUse" x1="1175" x2="1397.5"><stop offset="0" stop-color="#0005ff"/><stop offset=".1506" stop-color="#0000ff"/><stop offset="1" stop-color="#a200ff"/></linearGradient>
<linearGradient id="c183" gradientUnits="userSpaceOnUse" x1="1177" x2="1395.5"><stop offset="0" stop-color="#0004ff"/><stop offset=".1442" stop-color="#0000ff"/><stop offset="1" stop-color="#9f00ff"/></linearGradient>
<linearGradient id="c184" gradientUnits="userSpaceOnUse" x1="1178" x2="1393.5"><stop offset="0" stop-color="#0003ff"/><stop offset=".1439" stop-color="#0000ff"/><stop offset="1" stop-color="#9c00ff"/></linearGradient>
<linearGradient id="c185" gradientUnits="userSpaceOnUse" x1="1180" x2="1391.5"><stop offset="0" stop-color="#0002ff"/><stop offset=".1395" stop-color="#0000ff"/><stop offset="1" stop-color="#9900ff"/></linearGradient>
<linearGradient id="c186" gradientUnits="userSpaceOnUse" x1="1182" x2="1389.5"><stop offset="0" stop-color="#0001ff"/><stop offset=".1325" stop-color="#0000ff"/><stop offset="1" stop-color="#9600ff"/></linearGradient>
<linearGradient id="c187" gradientUnits="userSpaceOnUse" x1="1183" x2="1387.5"><stop offset="0" stop-color="#0000ff"/><stop offset=".132" stop-color="#0000ff"/><stop offset="1" stop-color="#9300ff"/></linearGradient>
<linearGradient id="c188" gradientUnits="userSpaceOnUse" x1="1185" x2="1385.5"><stop offset="0" stop-color="#0000ff"/><stop offset=".1272" stop-color="#0000ff"/><stop offset="1" stop-color="#9000ff"/></linearGradient>
<linearGradient id="c189" gradientUnits="userSpaceOnUse" x1="1186" x2="1383.5"><stop offset="0" stop-color="#0000ff"/><stop offset=".1241" stop-color="#0000ff"/><stop offset="1" stop-color="#8d00ff"/></linearGradient>
<linearGradient id="c190" gradientUnits="userSpaceOnUse" x1="1188" x2="1382.5"><stop offset="0" stop-color="#0000ff"/><stop offset=".1183" stop-color="#0000ff"/><stop offset="1" stop-color="#8b00ff"/></linearGradient>
<linearGradient id="c191" gradientUnits="userSpaceOnUse" x1="1190" x2="1380.5"><stop offset="0" stop-color="#0000ff"/><stop offset=".1129" stop-color="#0000ff"/><stop offset="1" stop-color="#8800ff"/></linearGradient>
<linearGradient id="c192" gradientUnits="userSpaceOnUse" x1="1192" x2="1378.5"><stop offset="0" stop-color="#0000ff"/><stop offset=".1046" stop-color="#0000ff"/><stop offset="1" stop-color="#8600ff"/></linearGradient>
<linearGradient id="c193" gradientUnits="userSpaceOnUse" x1="1193" x2="1376.5"><stop offset="0" stop-color="#0000ff"/><stop offset=".1035" stop-color="#0000ff"/><stop offset="1" stop-color="#8300ff"/></linearGradient>
<linearGradient id="c194" gradientUnits="userSpaceOnUse" x1="1195" x2="1374.5"><stop offset="0" stop-color="#0000ff"/><stop offset=".0975" stop-color="#0000ff"/><stop offset="1" stop-color="#8000ff"/></linearGradient>
<linearGradient id="c195" gradientUnits="userSpaceOnUse" x1="1197" x2="1372.5"><stop offset="0" stop-color="#0000ff"/><stop offset=".0883" stop-color="#0000ff"/><stop offset="1" stop-color="#7e00ff"/></linearGradient>
<linearGradient id="c196" gradientUnits="userSpaceOnUse" x1="1199" x2="1370.5"><stop offset="0" stop-color="#0000ff"/><stop offset=".0816" stop-color="#0000ff"/><stop offset="1" stop-color="#7b00ff"/></linearGradient>
<linearGradient id="c197" gradientUnits="userSpaceOnUse" x1="1200" x2="1368.5"><stop offset="0" stop-color="#0000ff"/><stop offset=".0801" stop-color="#0000ff"/><stop offset="1" stop-color="#7900ff"/></linearGradient>
<linearGradient id="c198" gradientUnits="userSpaceOnUse" x1="1202" x2="1366.5"><stop offset="0" stop-color="#0000ff"/><stop offset=".0699" stop-color="#0000ff"/><stop offset="1" stop-color="#7600ff"/></linearGradient>
<linearGradient id="c199" gradientUnits="userSpaceOnUse" x1="1204" x2="1364.5"><stop offset="0" stop-color="#0000ff"/><stop offset=".0623" stop-color="#0000ff"/><stop offset="1" stop-color="#7300ff"/></linearGradient>
<linearGradient id="c200" gradientUnits="userSpaceOnUse" x1="1206" x2="1362.5"><stop offset="0" stop-color="#0000ff"/><stop offset=".0511" stop-color="#0000ff"/><stop offset="1" stop-color="#7100ff"/></linearGradient>
<linearGradient id="c201" gradientUnits="userSpaceOnUse" x1="1208" x2="1360.5"><stop offset="0" stop-color="#0000ff"/><stop offset=".0426" stop-color="#0000ff"/><stop offset="1" stop-color="#6f00ff"/></linearGradient>
<linearGradient id="c202" gradientUnits="userSpaceOnUse" x1="1210" x2="1358.5"><stop offset="0" stop-color="#0000ff"/><stop offset=".0909" stop-color="#0600ff"/><stop offset="1" stop-color="#6c00ff"/></linearGradient>
<linearGradient id="c203" gradientUnits="userSpaceOnUse" x1="1212" x2="1356.5"><stop offset="0" stop-color="#0000ff"/><stop offset="1" stop-color="#6a00ff"/></linearGradient>
<linearGradient id="c204" gradientUnits="userSpaceOnUse" x1="1214" x2="1354.5"><stop offset="0" stop-color="#0000ff"/><stop offset="1" stop-color="#6700ff"/></linearGradient>
<linearGradient id="c205" gradientUnits="userSpaceOnUse" x1="1216" x2="1352.5"><stop offset="0" stop-color="#0000ff"/><stop offset="1" stop-color="#6500ff"/></linearGradient>
<linearGradient id="c206" gradientUnits="userSpaceOnUse" x1="1218" x2="1350.5"><stop offset="0" stop-color="#0100ff"/><stop offset="1" stop-color="#6300ff"/></linearGradient>
<linearGradient id="c207" gradientUnits="userSpaceOnUse" x1="1220" x2="1348.5"><stop offset="0" stop-color="#0300ff"/><stop offset="1" stop-color="#6100ff"/></linearGradient>
<linearGradient id="c208" gradientUnits="userSpaceOnUse" x1="1223" x2="1347.5"><stop offset="0" stop-color="#0500ff"/><stop offset="1" stop-color="#5f00ff"/></linearGradient>
<linearGradient id="c209" gradientUnits="userSpaceOnUse" x1="1225" x2="1345.5"><stop offset="0" stop-color="#0600ff"/><stop offset="1" stop-color="#5d00ff"/></linearGradient>
<linearGradient id="c210" gradientUnits="userSpaceOnUse" x1="1227" x2="1343.5"><stop offset="0" stop-color="#0700ff"/><stop offset="1" stop-color="#5b00ff"/></linearGradient>
<linearGradient id="c211" gradientUnits="userSpaceOnUse" x1="1229" x2="1341.5"><stop offset="0" stop-color="#0800ff"/><stop offset="1" stop-color="#5800ff"/></linearGradient>
<linearGradient id="c212" gradientUnits="userSpaceOnUse" x1="1232" x2="1339.5"><stop offset="0" stop-color="#0a00ff"/><stop offset="1" stop-color="#5600ff"/></linearGradient>
<linearGradient id="c213" gradientUnits="userSpaceOnUse" x1="1234" x2="1337.5"><stop offset="0" stop-color="#0b00ff"/><stop offset="1" stop-color="#5400ff"/></linearGradient>
<linearGradient id="c214" gradientUnits="userSpaceOnUse" x1="1236" x2="1335.5"><stop offset="0" stop-color="#0c00ff"/><stop offset="1" stop-color="#5200ff"/></linearGradient>
<linearGradient id="c215" gradientUnits="userSpaceOnUse" x1="1239" x2="1333.5"><stop offset="0" stop-color="#0e00ff"/><stop offset="1" stop-color="#5000ff"/></linearGradient>
<linearGradient id="c216" gradientUnits="userSpaceOnUse" x1="1241" x2="1331.5"><stop offset="0" stop-color="#0f00ff"/><stop offset="1" stop-color="#4e00ff"/></linearGradient>
<linearGradient id="c217" gradientUnits="userSpaceOnUse" x1="1243" x2="1329.5"><stop offset="0" stop-color="#1000ff"/><stop offset="1" stop-color="#4c00ff"/></linearGradient>
<linearGradient id="c218" gradientUnits="userSpaceOnUse" x1="1246" x2="1327.5"><stop offset="0" stop-color="#1200ff"/><stop offset="1" stop-color="#4a00ff"/></linearGradient>
<linearGradient id="c219" gradientUnits="userSpaceOnUse" x1="1248" x2="1325.5"><stop offset="0" stop-color="#1300ff"/><stop offset="1" stop-color="#4800ff"/></linearGradient>
<linearGradient id="c220" gradientUnits="userSpaceOnUse" x1="1251" x2="1323.5"><stop offset="0" stop-color="#1400ff"/><stop offset="1" stop-color="#4600ff"/></linearGradient>
<linearGradient id="c221" gradientUnits="userSpaceOnUse" x1="1253" x2="1321.5"><stop offset="0" stop-color="#1500ff"/><stop offset="1" stop-color="#4400ff"/></linearGradient>
<linearGradient id="c222" gradientUnits="userSpaceOnUse" x1="1255" x2="1319.5"><stop offset="0" stop-color="#1600ff"/><stop offset="1" stop-color="#4200ff"/></linearGradient>
<linearGradient id="c223" gradientUnits="userSpaceOnUse" x1="1258" x2="1317.5"><stop offset="0" stop-color="#1800ff"/><stop offset="1" stop-color="#4000ff"/></linearGradient>
<linearGradient id="c224" gradientUnits="userSpaceOnUse" x1="1260" x2="1315.5"><stop offset="0" stop-color="#1900ff"/><stop offset="1" stop-color="#3e00ff"/></linearGradient>
<linearGradient id="c225" gradientUnits="userSpaceOnUse" x1="1263" x2="1313.5"><stop offset="0" stop-color="#1b00ff"/><stop offset="1" stop-color="#3c00ff"/></linearGradient>
<linearGradient id="c226" gradientUnits="userSpaceOnUse" x1="1265" x2="1312.5"><stop offset="0" stop-color="#1c00ff"/><stop offset="1" stop-color="#3b00ff"/></linearGradient>
<linearGradient id="c227" gradientUnits="userSpaceOnUse" x1="1268" x2="1310.5"><stop offset="0" stop-color="#1d00ff"/><stop offset="1" stop-color="#3900ff"/></linearGradient>
<linearGradient id="c228" gradientUnits="userSpaceOnUse" x1="1270" x2="1308.5"><stop offset="0" stop-color="#1e00ff"/><stop offset="1" stop-color="#3800ff"/></linearGradient>
<linearGradient id="c229" gradientUnits="userSpaceOnUse" x1="1272" x2="1306.5"><stop offset="0" stop-color="#1f00ff"/><stop offset="1" stop-color="#3600ff"/></linearGradient>
<linearGradient id="c230" gradientUnits="userSpaceOnUse" x1="1275" x2="1304.5"><stop offset="0" stop-color="#2100ff"/><stop offset="1" stop-color="#3400ff"/></linearGradient>
<linearGradient id="c231" gradientUnits="userSpaceOnUse" x1="1277" x2="1302.5"><stop offset="0" stop-color="#2200ff"/><stop offset="1" stop-color="#3200ff"/></linearGradient>
<linearGradient id="c232" gradientUnits="userSpaceOnUse" x1="1279" x2="1300.5"><stop offset="0" stop-color="#2300ff"/><stop offset="1" stop-color="#3100ff"/></linearGradient>
<linearGradient id="c233" gradientUnits="userSpaceOnUse" x1="1282" x2="1298.5"><stop offset="0" stop-color="#2400ff"/><stop offset="1" stop-color="#2f00ff"/></linearGradient>
<linearGradient id="c234" gradientUnits="userSpaceOnUse" x1="1285" x2="1296.5"><stop offset="0" stop-color="#2600ff"/><stop offset="1" stop-color="#2d00ff"/></linearGradient>
<linearGradient id="ginsL" gradientUnits="userSpaceOnUse" x1="1465.3" y1="441.9" x2="1641.9" y2="572.9"><stop offset="0" stop-color="#b0ff10"/><stop offset="0.3" stop-color="#dcff10"/><stop offset="0.5" stop-color="#ffff14"/><stop offset="0.72" stop-color="#ffd400"/><stop offset="1" stop-color="#ffac00"/></linearGradient>
<linearGradient id="ghead" x1="0" y1="0" x2="0" y2="1"><stop offset="0" stop-color="#0a0a0a"/><stop offset="0.04" stop-color="#0a0a0a"/><stop offset="0.05" stop-color="#343434"/><stop offset="0.5" stop-color="#2a2a2a"/><stop offset="0.53" stop-color="#181818"/><stop offset="1" stop-color="#1c1c1c"/></linearGradient>
<linearGradient id="gpb" x1="0" y1="0" x2="0" y2="1"><stop offset="0" stop-color="#b0b0b0"/><stop offset="0.5" stop-color="#8e8e8e"/><stop offset="1" stop-color="#666666"/></linearGradient>
<linearGradient id="gpbs" x1="0" y1="0" x2="0" y2="1"><stop offset="0" stop-color="#4a4a4a"/><stop offset="1" stop-color="#0e0e0e"/></linearGradient>
<linearGradient id="gcp" x1="0" y1="0" x2="0" y2="1"><stop offset="0" stop-color="#b2b2b2"/><stop offset="0.5" stop-color="#909090"/><stop offset="1" stop-color="#6a6a6a"/></linearGradient>
<linearGradient id="gcpa" x1="0" y1="0" x2="0" y2="1"><stop offset="0" stop-color="#b0b0b0"/><stop offset="1" stop-color="#8a8a8a"/></linearGradient>
<linearGradient id="gcp2" x1="0" y1="0" x2="0" y2="1"><stop offset="0" stop-color="#8e8e8e"/><stop offset="1" stop-color="#5a5a5a"/></linearGradient>
<linearGradient id="gcpd" x1="0" y1="0" x2="0" y2="1"><stop offset="0" stop-color="#3e3e3e"/><stop offset="1" stop-color="#2c2c2c"/></linearGradient>
<linearGradient id="gcc" x1="0" y1="0" x2="0" y2="1"><stop offset="0" stop-color="#7a7a7a"/><stop offset="0.5" stop-color="#969696"/><stop offset="1" stop-color="#b0b0b0"/></linearGradient>
<linearGradient id="gccd" x1="0" y1="0" x2="0" y2="1"><stop offset="0" stop-color="#2a2a2a"/><stop offset="1" stop-color="#444444"/></linearGradient>
<linearGradient id="gstop" x1="0" y1="0" x2="0" y2="1"><stop offset="0" stop-color="#cacaca"/><stop offset="0.5" stop-color="#b2b2b2"/><stop offset="0.5" stop-color="#9a9a9a"/><stop offset="1" stop-color="#a8a8a8"/></linearGradient>
<linearGradient id="gedge" x1="0" y1="0" x2="1" y2="0"><stop offset="0" stop-color="#1a1a1a" stop-opacity="0"/><stop offset="0.45" stop-color="#1a1a1a" stop-opacity="0.85"/><stop offset="1" stop-color="#1a1a1a"/></linearGradient>
</defs>
<rect x="0" y="0" width="1670" height="41" fill="#222222"/>
<rect x="0" y="41" width="1670" height="2.5" fill="url(#gshadow)"/>
<rect x="0" y="41" width="1.2" height="969" fill="#4a4a4a"/>
<rect x="1664.5" y="41" width="5.5" height="53" fill="url(#gright)"/>
<path d="M1.5,41 V9 Q1.5,4.8 6,4.8 H111.5 Q116,4.8 116,9 V41 Z" fill="url(#gtab)"/>
<path d="M1.5,41 V9 Q1.5,4.8 6,4.8 H111.5 Q116,4.8 116,9 V41" fill="none" stroke="#9a9a9a" stroke-width="1"/>
<line x1="74.6" y1="5" x2="74.6" y2="41" stroke="#8c8c8c" stroke-width="1"/>
<text x="9.3" y="29.1" font-size="13.6" fill="#ececec" textLength="57.5" lengthAdjust="spacingAndGlyphs">History 1</text>
<circle cx="93.4" cy="25.7" r="12.3" fill="url(#gplus)"/>
<path d="M89.9,26.3 H97.1 M93.5,22.7 V29.9" stroke="#a8a8a8" stroke-width="1" fill="none"/>
<path d="M1056.3,41 V8 Q1056.3,4 1060.3,4 H1230 Q1234,4 1234,8 V41 Z" fill="url(#gdev)"/>
<path d="M1056.3,41 V8 Q1056.3,4 1060.3,4 H1063.5 V41 Z" fill="#1ed41e"/>
<text x="1066.9" y="18.2" font-size="12.2" fill="#f0f0f0" textLength="82" lengthAdjust="spacingAndGlyphs">X-Rite i1Pro 3</text>
<text x="1066.9" y="36.6" font-size="12.2" fill="#f0f0f0" textLength="69.5" lengthAdjust="spacingAndGlyphs">Direct View</text>
<circle cx="1165.5" cy="22.5" r="12" fill="url(#gddl)"/>
<path d="M1159.5,19.8 H1171.5 L1165.5,26.8 Z" fill="#ffffff"/>
<line x1="1189.5" y1="4.5" x2="1189.5" y2="41" stroke="#3c3c3c" stroke-width="1.2"/>
<circle cx="1215.3" cy="22.4" r="16" fill="#0000f0" stroke="#ffffff" stroke-width="1.2"/>
<text x="1215.4" y="26.9" font-size="12.4" fill="#ffffff" text-anchor="middle" textLength="19" lengthAdjust="spacingAndGlyphs">696</text>
<path d="M1242.1,41 V8 Q1242.1,4 1246.1,4 H1400 Q1404,4 1404,8 V41 Z" fill="url(#gdev)"/>
<path d="M1242.1,41 V8 Q1242.1,4 1246.1,4 H1249.3 V41 Z" fill="#1ed41e"/>
<text x="1252.7" y="18.2" font-size="12.2" fill="#f0f0f0" textLength="80" lengthAdjust="spacingAndGlyphs">Mobile Forge</text>
<circle cx="1384" cy="22.5" r="12" fill="url(#gddl)"/>
<path d="M1378,19.8 H1390 L1384,26.8 Z" fill="#ffffff"/>
<path d="M1412.6,41 V8 Q1412.6,4 1416.6,4 H1586.8 Q1590.8,4 1590.8,8 V41 Z" fill="url(#gdev)"/>
<path d="M1412.6,41 V8 Q1412.6,4 1416.6,4 H1419.8 V41 Z" fill="#e8e000"/>
<text x="1423.2" y="18.2" font-size="12.2" fill="#f0f0f0" textLength="131" lengthAdjust="spacingAndGlyphs">Direct Display Control</text>
<circle cx="1570.9" cy="22.5" r="12" fill="url(#gddl)"/>
<path d="M1564.9,19.8 H1576.9 L1570.9,26.8 Z" fill="#ffffff"/>
<rect x="1595.5" y="4.6" width="41.6" height="33.8" fill="url(#gbtn)" rx="5" stroke="#d0d0d0" stroke-width="1.1"/>
<circle cx="1616.1" cy="21.3" r="12.2" fill="url(#gcirc)"/>
<path d="M1624.29,19.88 L1624.29,22.52 L1622.12,23.06 L1621.67,24.14 L1622.83,26.06 L1620.96,27.93 L1619.04,26.77 L1617.96,27.22 L1617.42,29.39 L1614.78,29.39 L1614.24,27.22 L1613.16,26.77 L1611.24,27.93 L1609.37,26.06 L1610.53,24.14 L1610.08,23.06 L1607.91,22.52 L1607.91,19.88 L1610.08,19.34 L1610.53,18.26 L1609.37,16.34 L1611.24,14.47 L1613.16,15.63 L1614.24,15.18 L1614.78,13.01 L1617.42,13.01 L1617.96,15.18 L1619.04,15.63 L1620.96,14.47 L1622.83,16.34 L1621.67,18.26 L1622.12,19.34 Z M1620.3,21.2 A4.2,4.2 0 1 0 1611.9,21.2 A4.2,4.2 0 1 0 1620.3,21.2 Z" fill="#dedede" fill-rule="evenodd"/>
<rect x="1638.2" y="4.6" width="45" height="33.8" fill="url(#gbtn)" rx="5" stroke="#d0d0d0" stroke-width="1.1"/>
<rect x="1664.5" y="0" width="5.5" height="41" fill="url(#gright2)"/>
<circle cx="1654.6" cy="21.3" r="12.2" fill="url(#gcirc)"/>
<path d="M1658,14.1 V27.1 L1651,20.6 Z" fill="#ffffff"/>
<text x="8.8" y="128.6" font-size="38.4" fill="#f4f4f4" textLength="241.6" lengthAdjust="spacingAndGlyphs">ColorChecker</text>
<text x="52.3" y="682.5" font-size="26.8" fill="#f0f0f0" textLength="232.6" lengthAdjust="spacingAndGlyphs">Avg dE2000: 6,01</text>
<text x="38.2" y="723.7" font-size="26.8" fill="#f0f0f0" textLength="260.4" lengthAdjust="spacingAndGlyphs">Max dE2000: 13,04</text>
<text x="15.4" y="771.3" font-size="26.8" fill="#f0f0f0" textLength="219.6" lengthAdjust="spacingAndGlyphs">Current Reading</text>
<text x="16.7" y="806.8" font-size="23.2" fill="#f0f0f0" textLength="102.2" lengthAdjust="spacingAndGlyphs">x: 0,4316</text>
<text x="173" y="806.8" font-size="23.2" fill="#f0f0f0" textLength="103" lengthAdjust="spacingAndGlyphs">y: 0,4974</text>
<text x="16.7" y="847.2" font-size="23.2" fill="#f0f0f0" textLength="95.8" lengthAdjust="spacingAndGlyphs">fL: 94,65</text>
<text x="16.7" y="881.4" font-size="23.2" fill="#f0f0f0" textLength="158.8" lengthAdjust="spacingAndGlyphs">cd/m²: 324,29</text>
<text x="189.4" y="269.7" font-size="15" fill="#d2d2d2" text-anchor="middle" textLength="78.4" lengthAdjust="spacingAndGlyphs">DeltaE 2000</text>
<rect x="21.5" y="274.5" width="336" height="331.8" fill="#242424" stroke="#a8a8a8" stroke-width="1.3"/>
<line x1="66.02" y1="275" x2="66.02" y2="606" stroke="#8a8a8a" stroke-width="1.2"/>
<line x1="110.64" y1="275" x2="110.64" y2="606" stroke="#8a8a8a" stroke-width="1.2"/>
<line x1="155.26" y1="275" x2="155.26" y2="606" stroke="#8a8a8a" stroke-width="1.2"/>
<line x1="199.88" y1="275" x2="199.88" y2="606" stroke="#8a8a8a" stroke-width="1.2"/>
<line x1="244.5" y1="275" x2="244.5" y2="606" stroke="#8a8a8a" stroke-width="1.2"/>
<line x1="289.12" y1="275" x2="289.12" y2="606" stroke="#8a8a8a" stroke-width="1.2"/>
<line x1="333.74" y1="275" x2="333.74" y2="606" stroke="#8a8a8a" stroke-width="1.2"/>
<line x1="21.4" y1="606.3" x2="21.4" y2="611.6" stroke="#bdbdbd" stroke-width="2"/>
<text x="21.4" y="628.7" font-size="15.5" fill="#d2d2d2" text-anchor="middle">0</text>
<line x1="66.02" y1="606.3" x2="66.02" y2="611.6" stroke="#bdbdbd" stroke-width="1.7"/>
<text x="66.02" y="628.7" font-size="15.5" fill="#d2d2d2" text-anchor="middle">2</text>
<line x1="110.64" y1="606.3" x2="110.64" y2="611.6" stroke="#bdbdbd" stroke-width="1.7"/>
<text x="110.64" y="628.7" font-size="15.5" fill="#d2d2d2" text-anchor="middle">4</text>
<line x1="155.26" y1="606.3" x2="155.26" y2="611.6" stroke="#bdbdbd" stroke-width="1.7"/>
<text x="155.26" y="628.7" font-size="15.5" fill="#d2d2d2" text-anchor="middle">6</text>
<line x1="199.88" y1="606.3" x2="199.88" y2="611.6" stroke="#bdbdbd" stroke-width="1.7"/>
<text x="199.88" y="628.7" font-size="15.5" fill="#d2d2d2" text-anchor="middle">8</text>
<line x1="244.5" y1="606.3" x2="244.5" y2="611.6" stroke="#bdbdbd" stroke-width="1.7"/>
<text x="244.5" y="628.7" font-size="15.5" fill="#d2d2d2" text-anchor="middle">10</text>
<line x1="289.12" y1="606.3" x2="289.12" y2="611.6" stroke="#bdbdbd" stroke-width="1.7"/>
<text x="289.12" y="628.7" font-size="15.5" fill="#d2d2d2" text-anchor="middle">12</text>
<line x1="333.74" y1="606.3" x2="333.74" y2="611.6" stroke="#bdbdbd" stroke-width="1.7"/>
<text x="333.74" y="628.7" font-size="15.5" fill="#d2d2d2" text-anchor="middle">14</text>
<rect x="22.4" y="275.46" width="84.9" height="7.3" fill="#000000"/>
<rect x="22.9" y="276.06" width="83.8" height="5.9" fill="url(#b0)"/>
<rect x="22.9" y="280.66" width="83.8" height="1.3" fill="#000000" opacity="0.22"/>
<rect x="22.4" y="286.5" width="69.51" height="7.3" fill="#000000"/>
<rect x="22.9" y="287.1" width="68.41" height="5.9" fill="url(#b1)"/>
<rect x="22.9" y="291.7" width="68.41" height="1.3" fill="#000000" opacity="0.22"/>
<rect x="22.4" y="297.54" width="290.82" height="7.3" fill="#000000"/>
<rect x="22.9" y="298.14" width="289.72" height="5.9" fill="url(#b2)"/>
<rect x="22.9" y="302.74" width="289.72" height="1.3" fill="#000000" opacity="0.22"/>
<rect x="22.4" y="308.58" width="96.5" height="7.3" fill="#000000"/>
<rect x="22.9" y="309.18" width="95.4" height="5.9" fill="url(#b3)"/>
<rect x="22.9" y="313.78" width="95.4" height="1.3" fill="#000000" opacity="0.22"/>
<rect x="22.4" y="319.62" width="117.25" height="7.3" fill="#000000"/>
<rect x="22.9" y="320.22" width="116.15" height="5.9" fill="url(#b4)"/>
<rect x="22.9" y="324.82" width="116.15" height="1.3" fill="#000000" opacity="0.22"/>
<rect x="22.4" y="330.66" width="182.62" height="7.3" fill="#000000"/>
<rect x="22.9" y="331.26" width="181.52" height="5.9" fill="url(#b5)"/>
<rect x="22.9" y="335.86" width="181.52" height="1.3" fill="#000000" opacity="0.22"/>
<rect x="22.4" y="341.7" width="253.79" height="7.3" fill="#000000"/>
<rect x="22.9" y="342.3" width="252.69" height="5.9" fill="url(#b6)"/>
<rect x="22.9" y="346.9" width="252.69" height="1.3" fill="#000000" opacity="0.22"/>
<rect x="22.4" y="352.74" width="115.47" height="7.3" fill="#000000"/>
<rect x="22.9" y="353.34" width="114.37" height="5.9" fill="url(#b7)"/>
<rect x="22.9" y="357.94" width="114.37" height="1.3" fill="#000000" opacity="0.22"/>
<rect x="22.4" y="363.78" width="42.07" height="7.3" fill="#000000"/>
<rect x="22.9" y="364.38" width="40.97" height="5.9" fill="url(#b8)"/>
<rect x="22.9" y="368.98" width="40.97" height="1.3" fill="#000000" opacity="0.22"/>
<rect x="22.4" y="374.82" width="110.33" height="7.3" fill="#000000"/>
<rect x="22.9" y="375.42" width="109.23" height="5.9" fill="url(#b9)"/>
<rect x="22.9" y="380.02" width="109.23" height="1.3" fill="#000000" opacity="0.22"/>
<rect x="22.4" y="385.86" width="126.4" height="7.3" fill="#000000"/>
<rect x="22.9" y="386.46" width="125.3" height="5.9" fill="url(#b10)"/>
<rect x="22.9" y="391.06" width="125.3" height="1.3" fill="#000000" opacity="0.22"/>
<rect x="22.4" y="396.9" width="48.98" height="7.3" fill="#000000"/>
<rect x="22.9" y="397.5" width="47.88" height="5.9" fill="url(#b11)"/>
<rect x="22.9" y="402.1" width="47.88" height="1.3" fill="#000000" opacity="0.22"/>
<rect x="22.4" y="407.94" width="61.92" height="7.3" fill="#000000"/>
<rect x="22.9" y="408.54" width="60.82" height="5.9" fill="url(#b12)"/>
<rect x="22.9" y="413.14" width="60.82" height="1.3" fill="#000000" opacity="0.22"/>
<rect x="22.4" y="418.98" width="86.91" height="7.3" fill="#000000"/>
<rect x="22.9" y="419.58" width="85.81" height="5.9" fill="url(#b13)"/>
<rect x="22.9" y="424.18" width="85.81" height="1.3" fill="#000000" opacity="0.22"/>
<rect x="22.4" y="430.02" width="55.23" height="7.3" fill="#000000"/>
<rect x="22.9" y="430.62" width="54.13" height="5.9" fill="url(#b14)"/>
<rect x="22.9" y="435.22" width="54.13" height="1.3" fill="#000000" opacity="0.22"/>
<rect x="22.4" y="441.06" width="130.64" height="7.3" fill="#000000"/>
<rect x="22.9" y="441.66" width="129.54" height="5.9" fill="url(#b15)"/>
<rect x="22.9" y="446.26" width="129.54" height="1.3" fill="#000000" opacity="0.22"/>
<rect x="22.4" y="452.1" width="68.84" height="7.3" fill="#000000"/>
<rect x="22.9" y="452.7" width="67.74" height="5.9" fill="url(#b16)"/>
<rect x="22.9" y="457.3" width="67.74" height="1.3" fill="#000000" opacity="0.22"/>
<rect x="22.4" y="463.14" width="112.12" height="7.3" fill="#000000"/>
<rect x="22.9" y="463.74" width="111.02" height="5.9" fill="url(#b17)"/>
<rect x="22.9" y="468.34" width="111.02" height="1.3" fill="#000000" opacity="0.22"/>
<rect x="22.4" y="474.18" width="238.84" height="7.3" fill="#000000"/>
<rect x="22.9" y="474.78" width="237.74" height="5.9" fill="url(#b18)"/>
<rect x="22.9" y="479.38" width="237.74" height="1.3" fill="#000000" opacity="0.22"/>
<rect x="22.4" y="485.22" width="75.75" height="7.3" fill="#000000"/>
<rect x="22.9" y="485.82" width="74.65" height="5.9" fill="url(#b19)"/>
<rect x="22.9" y="490.42" width="74.65" height="1.3" fill="#000000" opacity="0.22"/>
<rect x="22.4" y="496.26" width="93.6" height="7.3" fill="#000000"/>
<rect x="22.9" y="496.86" width="92.5" height="5.9" fill="url(#b20)"/>
<rect x="22.9" y="501.46" width="92.5" height="1.3" fill="#000000" opacity="0.22"/>
<rect x="22.4" y="507.3" width="136.44" height="7.3" fill="#000000"/>
<rect x="22.9" y="507.9" width="135.34" height="5.9" fill="url(#b21)"/>
<rect x="22.9" y="512.5" width="135.34" height="1.3" fill="#000000" opacity="0.22"/>
<rect x="22.4" y="518.34" width="130.19" height="7.3" fill="#000000"/>
<rect x="22.9" y="518.94" width="129.09" height="5.9" fill="url(#b22)"/>
<rect x="22.9" y="523.54" width="129.09" height="1.3" fill="#000000" opacity="0.22"/>
<rect x="22.4" y="529.38" width="97.84" height="7.3" fill="#000000"/>
<rect x="22.9" y="529.98" width="96.74" height="5.9" fill="url(#b23)"/>
<rect x="22.9" y="534.58" width="96.74" height="1.3" fill="#000000" opacity="0.22"/>
<rect x="22.4" y="540.42" width="30.91" height="7.3" fill="#000000"/>
<rect x="22.9" y="541.02" width="29.81" height="5.9" fill="url(#b24)"/>
<rect x="22.9" y="545.62" width="29.81" height="1.3" fill="#000000" opacity="0.22"/>
<rect x="22.4" y="551.46" width="169.9" height="7.3" fill="#000000"/>
<rect x="22.9" y="552.06" width="168.8" height="5.9" fill="url(#b25)"/>
<rect x="22.9" y="556.66" width="168.8" height="1.3" fill="#000000" opacity="0.22"/>
<rect x="22.4" y="562.5" width="200.24" height="7.3" fill="#000000"/>
<rect x="22.9" y="563.1" width="199.14" height="5.9" fill="url(#b26)"/>
<rect x="22.9" y="567.7" width="199.14" height="1.3" fill="#000000" opacity="0.22"/>
<rect x="22.4" y="573.54" width="217.42" height="7.3" fill="#000000"/>
<rect x="22.9" y="574.14" width="216.32" height="5.9" fill="url(#b27)"/>
<rect x="22.9" y="578.74" width="216.32" height="1.3" fill="#000000" opacity="0.22"/>
<rect x="22.4" y="584.58" width="220.1" height="7.3" fill="#000000"/>
<rect x="22.9" y="585.18" width="219" height="5.9" fill="url(#b28)"/>
<rect x="22.9" y="589.78" width="219" height="1.3" fill="#000000" opacity="0.22"/>
<rect x="22.4" y="595.62" width="244.86" height="7.3" fill="#000000"/>
<rect x="22.9" y="596.22" width="243.76" height="5.9" fill="url(#b29)"/>
<rect x="22.9" y="600.82" width="243.76" height="1.3" fill="#000000" opacity="0.22"/>
<rect x="401.6" y="124.8" width="152.9" height="336.2" fill="#242424" stroke="#a8a8a8" stroke-width="1.3"/>
<line x1="401.6" y1="166.82" x2="554.5" y2="166.82" stroke="#8a8a8a" stroke-width="1.2"/>
<line x1="401.6" y1="208.85" x2="554.5" y2="208.85" stroke="#8a8a8a" stroke-width="1.2"/>
<line x1="401.6" y1="250.88" x2="554.5" y2="250.88" stroke="#8a8a8a" stroke-width="1.2"/>
<line x1="401.6" y1="292.9" x2="554.5" y2="292.9" stroke="#8a8a8a" stroke-width="1.2"/>
<line x1="401.6" y1="334.93" x2="554.5" y2="334.93" stroke="#8a8a8a" stroke-width="1.2"/>
<line x1="401.6" y1="376.95" x2="554.5" y2="376.95" stroke="#8a8a8a" stroke-width="1.2"/>
<line x1="401.6" y1="418.98" x2="554.5" y2="418.98" stroke="#8a8a8a" stroke-width="1.2"/>
<line x1="397.1" y1="124.8" x2="401.6" y2="124.8" stroke="#c8c8c8" stroke-width="1.4"/>
<text x="396.4" y="130.1" font-size="14.6" fill="#d2d2d2" text-anchor="end">4</text>
<line x1="397.1" y1="166.82" x2="401.6" y2="166.82" stroke="#c8c8c8" stroke-width="1.4"/>
<text x="396.4" y="172.12" font-size="14.6" fill="#d2d2d2" text-anchor="end">3</text>
<line x1="397.1" y1="208.85" x2="401.6" y2="208.85" stroke="#c8c8c8" stroke-width="1.4"/>
<text x="396.4" y="214.15" font-size="14.6" fill="#d2d2d2" text-anchor="end">2</text>
<line x1="397.1" y1="250.88" x2="401.6" y2="250.88" stroke="#c8c8c8" stroke-width="1.4"/>
<text x="396.4" y="256.18" font-size="14.6" fill="#d2d2d2" text-anchor="end">1</text>
<line x1="397.1" y1="292.9" x2="401.6" y2="292.9" stroke="#c8c8c8" stroke-width="1.4"/>
<text x="396.4" y="298.2" font-size="14.6" fill="#d2d2d2" text-anchor="end">0</text>
<line x1="397.1" y1="334.93" x2="401.6" y2="334.93" stroke="#c8c8c8" stroke-width="1.4"/>
<text x="396.4" y="340.23" font-size="14.6" fill="#d2d2d2" text-anchor="end">-1</text>
<line x1="397.1" y1="376.95" x2="401.6" y2="376.95" stroke="#c8c8c8" stroke-width="1.4"/>
<text x="396.4" y="382.25" font-size="14.6" fill="#d2d2d2" text-anchor="end">-2</text>
<line x1="397.1" y1="418.98" x2="401.6" y2="418.98" stroke="#c8c8c8" stroke-width="1.4"/>
<text x="396.4" y="424.28" font-size="14.6" fill="#d2d2d2" text-anchor="end">-3</text>
<line x1="397.1" y1="461" x2="401.6" y2="461" stroke="#c8c8c8" stroke-width="1.4"/>
<text x="396.4" y="466.3" font-size="14.6" fill="#d2d2d2" text-anchor="end">-4</text>
<text x="468.6" y="119.7" font-size="14.2" fill="#d2d2d2" text-anchor="middle" textLength="44.8" lengthAdjust="spacingAndGlyphs">Delta L</text>
<rect x="416.6" y="292.9" width="121.1" height="127.2" fill="url(#gyel)" stroke="#000000" stroke-width="1"/>
<rect x="598.3" y="124.8" width="153.3" height="336.2" fill="#242424" stroke="#a8a8a8" stroke-width="1.3"/>
<line x1="598.3" y1="166.82" x2="751.6" y2="166.82" stroke="#8a8a8a" stroke-width="1.2"/>
<line x1="598.3" y1="208.85" x2="751.6" y2="208.85" stroke="#8a8a8a" stroke-width="1.2"/>
<line x1="598.3" y1="250.88" x2="751.6" y2="250.88" stroke="#8a8a8a" stroke-width="1.2"/>
<line x1="598.3" y1="292.9" x2="751.6" y2="292.9" stroke="#8a8a8a" stroke-width="1.2"/>
<line x1="598.3" y1="334.93" x2="751.6" y2="334.93" stroke="#8a8a8a" stroke-width="1.2"/>
<line x1="598.3" y1="376.95" x2="751.6" y2="376.95" stroke="#8a8a8a" stroke-width="1.2"/>
<line x1="598.3" y1="418.98" x2="751.6" y2="418.98" stroke="#8a8a8a" stroke-width="1.2"/>
<line x1="593.8" y1="124.8" x2="598.3" y2="124.8" stroke="#c8c8c8" stroke-width="1.4"/>
<text x="593.1" y="130.1" font-size="14.6" fill="#d2d2d2" text-anchor="end">4</text>
<line x1="593.8" y1="166.82" x2="598.3" y2="166.82" stroke="#c8c8c8" stroke-width="1.4"/>
<text x="593.1" y="172.12" font-size="14.6" fill="#d2d2d2" text-anchor="end">3</text>
<line x1="593.8" y1="208.85" x2="598.3" y2="208.85" stroke="#c8c8c8" stroke-width="1.4"/>
<text x="593.1" y="214.15" font-size="14.6" fill="#d2d2d2" text-anchor="end">2</text>
<line x1="593.8" y1="250.88" x2="598.3" y2="250.88" stroke="#c8c8c8" stroke-width="1.4"/>
<text x="593.1" y="256.18" font-size="14.6" fill="#d2d2d2" text-anchor="end">1</text>
<line x1="593.8" y1="292.9" x2="598.3" y2="292.9" stroke="#c8c8c8" stroke-width="1.4"/>
<text x="593.1" y="298.2" font-size="14.6" fill="#d2d2d2" text-anchor="end">0</text>
<line x1="593.8" y1="334.93" x2="598.3" y2="334.93" stroke="#c8c8c8" stroke-width="1.4"/>
<text x="593.1" y="340.23" font-size="14.6" fill="#d2d2d2" text-anchor="end">-1</text>
<line x1="593.8" y1="376.95" x2="598.3" y2="376.95" stroke="#c8c8c8" stroke-width="1.4"/>
<text x="593.1" y="382.25" font-size="14.6" fill="#d2d2d2" text-anchor="end">-2</text>
<line x1="593.8" y1="418.98" x2="598.3" y2="418.98" stroke="#c8c8c8" stroke-width="1.4"/>
<text x="593.1" y="424.28" font-size="14.6" fill="#d2d2d2" text-anchor="end">-3</text>
<line x1="593.8" y1="461" x2="598.3" y2="461" stroke="#c8c8c8" stroke-width="1.4"/>
<text x="593.1" y="466.3" font-size="14.6" fill="#d2d2d2" text-anchor="end">-4</text>
<text x="665.8" y="119.7" font-size="14.2" fill="#d2d2d2" text-anchor="middle" textLength="47.5" lengthAdjust="spacingAndGlyphs">Delta C</text>
<rect x="613.6" y="292.9" width="121.7" height="102.5" fill="url(#gyel)" stroke="#000000" stroke-width="1"/>
<rect x="796.6" y="124.8" width="153.1" height="336.2" fill="#242424" stroke="#a8a8a8" stroke-width="1.3"/>
<line x1="796.6" y1="166.82" x2="949.7" y2="166.82" stroke="#8a8a8a" stroke-width="1.2"/>
<line x1="796.6" y1="208.85" x2="949.7" y2="208.85" stroke="#8a8a8a" stroke-width="1.2"/>
<line x1="796.6" y1="250.88" x2="949.7" y2="250.88" stroke="#8a8a8a" stroke-width="1.2"/>
<line x1="796.6" y1="292.9" x2="949.7" y2="292.9" stroke="#8a8a8a" stroke-width="1.2"/>
<line x1="796.6" y1="334.93" x2="949.7" y2="334.93" stroke="#8a8a8a" stroke-width="1.2"/>
<line x1="796.6" y1="376.95" x2="949.7" y2="376.95" stroke="#8a8a8a" stroke-width="1.2"/>
<line x1="796.6" y1="418.98" x2="949.7" y2="418.98" stroke="#8a8a8a" stroke-width="1.2"/>
<line x1="792.1" y1="124.8" x2="796.6" y2="124.8" stroke="#c8c8c8" stroke-width="1.4"/>
<text x="791.4" y="130.1" font-size="14.6" fill="#d2d2d2" text-anchor="end">8</text>
<line x1="792.1" y1="166.82" x2="796.6" y2="166.82" stroke="#c8c8c8" stroke-width="1.4"/>
<text x="791.4" y="172.12" font-size="14.6" fill="#d2d2d2" text-anchor="end">6</text>
<line x1="792.1" y1="208.85" x2="796.6" y2="208.85" stroke="#c8c8c8" stroke-width="1.4"/>
<text x="791.4" y="214.15" font-size="14.6" fill="#d2d2d2" text-anchor="end">4</text>
<line x1="792.1" y1="250.88" x2="796.6" y2="250.88" stroke="#c8c8c8" stroke-width="1.4"/>
<text x="791.4" y="256.18" font-size="14.6" fill="#d2d2d2" text-anchor="end">2</text>
<line x1="792.1" y1="292.9" x2="796.6" y2="292.9" stroke="#c8c8c8" stroke-width="1.4"/>
<text x="791.4" y="298.2" font-size="14.6" fill="#d2d2d2" text-anchor="end">0</text>
<line x1="792.1" y1="334.93" x2="796.6" y2="334.93" stroke="#c8c8c8" stroke-width="1.4"/>
<text x="791.4" y="340.23" font-size="14.6" fill="#d2d2d2" text-anchor="end">-2</text>
<line x1="792.1" y1="376.95" x2="796.6" y2="376.95" stroke="#c8c8c8" stroke-width="1.4"/>
<text x="791.4" y="382.25" font-size="14.6" fill="#d2d2d2" text-anchor="end">-4</text>
<line x1="792.1" y1="418.98" x2="796.6" y2="418.98" stroke="#c8c8c8" stroke-width="1.4"/>
<text x="791.4" y="424.28" font-size="14.6" fill="#d2d2d2" text-anchor="end">-6</text>
<line x1="792.1" y1="461" x2="796.6" y2="461" stroke="#c8c8c8" stroke-width="1.4"/>
<text x="791.4" y="466.3" font-size="14.6" fill="#d2d2d2" text-anchor="end">-8</text>
<text x="863" y="119.7" font-size="14.2" fill="#d2d2d2" text-anchor="middle" textLength="48" lengthAdjust="spacingAndGlyphs">Delta H</text>
<rect x="811.5" y="292.9" width="120.8" height="149.1" fill="url(#gyel)" stroke="#000000" stroke-width="1"/>
<rect x="377" y="474.5" width="592" height="160.5" fill="#000000"/>
<clipPath id="swclip"><rect x="377" y="474.5" width="592" height="160.5"/></clipPath>
<g clip-path="url(#swclip)">
<rect x="393.9" y="480.8" width="58.7" height="116.9" fill="#ffffff"/>
<rect x="394.9" y="481.8" width="56.7" height="114.9" fill="#8c8c8c"/>
<rect x="395.9" y="482.8" width="54.7" height="57.2" fill="#f4eafc"/>
<rect x="395.9" y="540" width="54.7" height="55.7" fill="#f0f0f0"/>
<text x="423.1" y="612.6" font-size="11.6" fill="#ffffff" text-anchor="middle" textLength="30.54" lengthAdjust="spacingAndGlyphs">White</text>
<rect x="461.9" y="480.8" width="58.7" height="116.9" fill="#ffffff"/>
<rect x="462.9" y="481.8" width="56.7" height="114.9" fill="#8c8c8c"/>
<rect x="463.9" y="482.8" width="54.7" height="57.2" fill="#e6dff0"/>
<rect x="463.9" y="540" width="54.7" height="55.7" fill="#e6e6e6"/>
<text x="491.1" y="612.6" font-size="11.6" fill="#ffffff" text-anchor="middle" textLength="42.5" lengthAdjust="spacingAndGlyphs">Gray 80</text>
<rect x="529.9" y="480.8" width="58.7" height="116.9" fill="#ffffff"/>
<rect x="530.9" y="481.8" width="56.7" height="114.9" fill="#8c8c8c"/>
<rect x="531.9" y="482.8" width="54.7" height="57.2" fill="#d0c9db"/>
<rect x="531.9" y="540" width="54.7" height="55.7" fill="#d0d0d0"/>
<text x="559.1" y="612.6" font-size="11.6" fill="#ffffff" text-anchor="middle" textLength="42.5" lengthAdjust="spacingAndGlyphs">Gray 65</text>
<rect x="597.9" y="480.8" width="58.7" height="116.9" fill="#ffffff"/>
<rect x="598.9" y="481.8" width="56.7" height="114.9" fill="#8c8c8c"/>
<rect x="599.9" y="482.8" width="54.7" height="57.2" fill="#bbb6c7"/>
<rect x="599.9" y="540" width="54.7" height="55.7" fill="#bababa"/>
<text x="627.1" y="612.6" font-size="11.6" fill="#ffffff" text-anchor="middle" textLength="42.5" lengthAdjust="spacingAndGlyphs">Gray 50</text>
<rect x="665.9" y="480.8" width="58.7" height="116.9" fill="#ffffff"/>
<rect x="666.9" y="481.8" width="56.7" height="114.9" fill="#8c8c8c"/>
<rect x="667.9" y="482.8" width="54.7" height="57.2" fill="#a09caa"/>
<rect x="667.9" y="540" width="54.7" height="55.7" fill="#9e9e9e"/>
<text x="695.1" y="612.6" font-size="11.6" fill="#ffffff" text-anchor="middle" textLength="42.5" lengthAdjust="spacingAndGlyphs">Gray 35</text>
<rect x="733.9" y="480.8" width="58.7" height="116.9" fill="#ffffff"/>
<rect x="734.9" y="481.8" width="56.7" height="114.9" fill="#8c8c8c"/>
<rect x="735.9" y="482.8" width="54.7" height="57.2" fill="#020204"/>
<rect x="735.9" y="540" width="54.7" height="55.7" fill="#000000"/>
<text x="763.1" y="612.6" font-size="11.6" fill="#ffffff" text-anchor="middle" textLength="29.22" lengthAdjust="spacingAndGlyphs">Black</text>
<rect x="801.9" y="480.8" width="58.7" height="116.9" fill="#ffffff"/>
<rect x="802.9" y="481.8" width="56.7" height="114.9" fill="#8c8c8c"/>
<rect x="803.9" y="482.8" width="54.7" height="57.2" fill="#705850"/>
<rect x="803.9" y="540" width="54.7" height="55.7" fill="#745244"/>
<text x="831.1" y="612.6" font-size="11.6" fill="#ffffff" text-anchor="middle" textLength="51.79" lengthAdjust="spacingAndGlyphs">Dark Skin</text>
<rect x="869.9" y="480.8" width="58.7" height="116.9" fill="#ffffff"/>
<rect x="870.9" y="481.8" width="56.7" height="114.9" fill="#8c8c8c"/>
<rect x="871.9" y="482.8" width="54.7" height="57.2" fill="#b99891"/>
<rect x="871.9" y="540" width="54.7" height="55.7" fill="#c49682"/>
<text x="899.1" y="612.6" font-size="11.6" fill="#ffffff" text-anchor="middle" textLength="52.47" lengthAdjust="spacingAndGlyphs">Light Skin</text>
<rect x="937.9" y="480.8" width="58.7" height="116.9" fill="#ffffff"/>
<rect x="938.9" y="481.8" width="56.7" height="114.9" fill="#8c8c8c"/>
<rect x="939.9" y="482.8" width="54.7" height="57.2" fill="#6874a8"/>
<rect x="939.9" y="540" width="54.7" height="55.7" fill="#5e7a9d"/>
<text x="967.1" y="612.6" font-size="11.6" fill="#ffffff" text-anchor="middle" textLength="47.15" lengthAdjust="spacingAndGlyphs">Blue Sky</text>
</g>
<text transform="translate(389.4,524.2) rotate(-90)" font-size="12" fill="#ffffff" textLength="34.3" lengthAdjust="spacingAndGlyphs">Actual</text>
<text transform="translate(389.4,590.3) rotate(-90)" font-size="12" fill="#ffffff" textLength="35.2" lengthAdjust="spacingAndGlyphs">Target</text>
<rect x="377" y="635" width="592" height="16" fill="#626262"/>
<rect x="394.8" y="636.2" width="157.4" height="13.6" fill="#444444" rx="6.8"/>
<rect x="378" y="636.5" width="14.5" height="13.5" fill="#8a8a8a" rx="2.5"/>
<path d="M388.6,638.8 V647.6 L381.8,643.2 Z" fill="#3a3a3a"/>
<rect x="953.5" y="636.5" width="14.5" height="13.5" fill="#8a8a8a" rx="2.5"/>
<path d="M957.4,638.8 V647.6 L964.2,643.2 Z" fill="#3a3a3a"/>
<rect x="975.5" y="93.5" width="700" height="557.5" fill="#1c1c1c"/>
<rect x="982.3" y="99.6" width="681.2" height="545" fill="#333333"/>
<text x="1322.5" y="118.2" font-size="14.2" fill="#d2d2d2" text-anchor="middle" textLength="84" lengthAdjust="spacingAndGlyphs">CIE 1976 u&#x27;v&#x27;</text>
<rect x="1019.6" y="123.6" width="640" height="491.6" fill="#242424"/>
<clipPath id="locclip"><polygon points="1293.0,599.2 1291.9,599.6 1290.7,599.6 1289.4,599.5 1288.1,598.8 1286.6,597.9 1285.4,597.0 1284.0,596.0 1282.5,594.8 1280.7,593.4 1279.7,592.6 1278.6,591.8 1277.5,590.9 1276.3,589.9 1275.1,588.9 1273.8,587.8 1272.5,586.6 1271.1,585.4 1269.6,584.2 1268.1,582.9 1266.5,581.5 1264.8,580.1 1263.0,578.6 1261.1,577.0 1259.0,575.4 1256.9,573.6 1254.7,571.8 1252.3,569.8 1249.9,567.8 1247.4,565.8 1244.8,563.6 1242.1,561.3 1239.3,559.0 1236.3,556.5 1233.3,553.8 1230.1,551.0 1226.8,548.1 1223.4,545.0 1219.8,541.7 1216.2,538.2 1212.4,534.5 1208.5,530.6 1204.4,526.2 1200.1,521.5 1195.4,516.2 1190.4,510.3 1185.1,504.0 1179.5,497.0 1173.7,489.7 1167.8,481.9 1161.7,473.6 1155.5,464.9 1149.1,455.8 1142.6,446.2 1136.0,436.1 1129.3,425.5 1122.5,414.7 1115.7,403.5 1108.9,392.1 1102.2,380.6 1095.5,369.0 1088.9,357.2 1082.6,345.4 1076.5,333.6 1070.7,321.9 1065.3,310.5 1060.3,299.2 1055.5,288.2 1051.1,277.5 1047.0,267.1 1043.2,257.2 1039.7,247.7 1036.6,238.7 1033.9,230.1 1031.5,222.1 1029.4,214.7 1027.6,207.6 1026.2,201.1 1025.0,195.0 1024.1,189.3 1023.4,184.0 1023.0,179.1 1022.8,174.6 1022.8,170.5 1023.1,166.6 1023.6,162.9 1024.3,159.6 1025.1,156.5 1026.2,153.6 1027.5,151.0 1029.0,148.7 1030.6,146.5 1032.4,144.6 1034.3,142.9 1036.4,141.5 1038.6,140.2 1040.9,139.2 1043.3,138.2 1045.8,137.5 1048.4,136.9 1051.0,136.4 1053.7,136.0 1056.5,135.7 1059.4,135.5 1062.3,135.3 1065.3,135.2 1068.3,135.1 1071.3,135.0 1074.3,135.0 1077.3,135.0 1080.3,135.0 1083.3,135.0 1086.3,135.1 1089.4,135.2 1092.4,135.3 1095.6,135.4 1098.7,135.5 1101.9,135.7 1105.1,135.9 1108.4,136.1 1111.8,136.3 1115.1,136.6 1118.6,136.8 1122.1,137.1 1125.6,137.4 1129.3,137.7 1133.0,138.1 1136.7,138.4 1140.5,138.8 1144.4,139.2 1148.4,139.6 1152.5,140.0 1156.6,140.4 1160.8,140.8 1165.1,141.3 1169.5,141.8 1174.0,142.2 1178.6,142.7 1183.3,143.3 1188.0,143.8 1192.9,144.3 1197.9,144.9 1203.0,145.4 1208.1,146.0 1213.4,146.6 1218.8,147.2 1224.3,147.8 1229.9,148.5 1235.6,149.1 1241.4,149.8 1247.4,150.5 1253.4,151.2 1259.6,151.9 1265.8,152.6 1272.2,153.3 1278.7,154.1 1285.3,154.8 1292.0,155.6 1298.8,156.4 1305.7,157.2 1312.7,158.0 1319.8,158.8 1327.0,159.6 1334.3,160.5 1341.7,161.3 1349.2,162.2 1356.7,163.0 1364.3,163.9 1371.9,164.8 1379.7,165.7 1387.4,166.6 1395.2,167.5 1403.0,168.4 1410.7,169.3 1418.3,170.1 1425.8,171.0 1433.3,171.9 1440.7,172.7 1448.1,173.6 1455.5,174.4 1462.9,175.3 1470.3,176.1 1477.5,176.9 1484.6,177.8 1491.5,178.6 1498.2,179.3 1504.8,180.1 1511.2,180.8 1517.5,181.5 1523.7,182.2 1529.7,182.9 1535.5,183.6 1541.2,184.3 1546.7,184.9 1552.0,185.5 1557.2,186.1 1562.1,186.7 1566.9,187.2 1571.6,187.8 1576.0,188.3 1580.3,188.8 1584.5,189.2 1588.5,189.7 1592.4,190.1 1596.2,190.6 1599.8,191.0 1603.2,191.4 1606.6,191.8 1609.9,192.2 1613.2,192.5 1616.3,192.9 1619.3,193.2 1622.3,193.6 1625.1,193.9 1627.9,194.2 1630.6,194.5 1633.1,194.8 1635.6,195.1 1638.0,195.4 1640.3,195.7 1642.5,195.9 1644.6,196.1 1646.6,196.4 1648.5,196.6 1650.3,196.8 1652.0,197.0 1653.6,197.2 1655.0,197.3 1656.5,197.5 1657.8,197.7 1659.1,197.8 1660.4,198.0 1661.6,198.1 1663.7,198.3 1665.7,198.6 1667.4,198.8 1668.8,198.9 1670.5,199.1 1672.1,199.3 1673.5,199.5 1674.7,199.6 1676.3,199.8 1677.8,200.0 1679.1,200.1 1680.3,200.3 1680.7,200.3"/></clipPath>
<clipPath id="plotclip"><rect x="1020.1" y="124.1" width="638.9999999999999" height="490.6"/></clipPath>
<g clip-path="url(#plotclip)"><g clip-path="url(#locclip)">
<rect x="1053" y="132" width="50.5" height="2.6" fill="url(#c0)"/>
<rect x="1042" y="134" width="88.5" height="2.6" fill="url(#c1)"/>
<rect x="1036" y="136" width="115.5" height="2.6" fill="url(#c2)"/>
<rect x="1033" y="138" width="137.5" height="2.6" fill="url(#c3)"/>
<rect x="1030" y="140" width="158.5" height="2.6" fill="url(#c4)"/>
<rect x="1028" y="142" width="178.5" height="2.6" fill="url(#c5)"/>
<rect x="1026" y="144" width="198.5" height="2.6" fill="url(#c6)"/>
<rect x="1025" y="146" width="216.5" height="2.6" fill="url(#c7)"/>
<rect x="1024" y="148" width="235.5" height="2.6" fill="url(#c8)"/>
<rect x="1023" y="150" width="253.5" height="2.6" fill="url(#c9)"/>
<rect x="1022" y="152" width="272.5" height="2.6" fill="url(#c10)"/>
<rect x="1021" y="154" width="290.5" height="2.6" fill="url(#c11)"/>
<rect x="1021" y="156" width="307.5" height="2.6" fill="url(#c12)"/>
<rect x="1020" y="158" width="326.5" height="2.6" fill="url(#c13)"/>
<rect x="1020" y="160" width="343.5" height="2.6" fill="url(#c14)"/>
<rect x="1020" y="162" width="361.5" height="2.6" fill="url(#c15)"/>
<rect x="1020" y="164" width="378.5" height="2.6" fill="url(#c16)"/>
<rect x="1019" y="166" width="396.5" height="2.6" fill="url(#c17)"/>
<rect x="1019" y="168" width="414.5" height="2.6" fill="url(#c18)"/>
<rect x="1019" y="170" width="431.5" height="2.6" fill="url(#c19)"/>
<rect x="1019" y="172" width="448.5" height="2.6" fill="url(#c20)"/>
<rect x="1019" y="174" width="466.5" height="2.6" fill="url(#c21)"/>
<rect x="1019" y="176" width="483.5" height="2.6" fill="url(#c22)"/>
<rect x="1019" y="178" width="501.5" height="2.6" fill="url(#c23)"/>
<rect x="1020" y="180" width="517.5" height="2.6" fill="url(#c24)"/>
<rect x="1020" y="182" width="535.5" height="2.6" fill="url(#c25)"/>
<rect x="1020" y="184" width="552.5" height="2.6" fill="url(#c26)"/>
<rect x="1020" y="186" width="569.5" height="2.6" fill="url(#c27)"/>
<rect x="1020" y="188" width="587.5" height="2.6" fill="url(#c28)"/>
<rect x="1021" y="190" width="603.5" height="2.6" fill="url(#c29)"/>
<rect x="1021" y="192" width="621.5" height="2.6" fill="url(#c30)"/>
<rect x="1021" y="194" width="638.5" height="2.6" fill="url(#c31)"/>
<rect x="1022" y="196" width="639.5" height="2.6" fill="url(#c32)"/>
<rect x="1022" y="198" width="639.5" height="2.6" fill="url(#c33)"/>
<rect x="1023" y="200" width="638.5" height="2.6" fill="url(#c34)"/>
<rect x="1023" y="202" width="638.5" height="2.6" fill="url(#c35)"/>
<rect x="1023" y="204" width="638.5" height="2.6" fill="url(#c36)"/>
<rect x="1024" y="206" width="637.5" height="2.6" fill="url(#c37)"/>
<rect x="1024" y="208" width="637.5" height="2.6" fill="url(#c38)"/>
<rect x="1025" y="210" width="636.5" height="2.6" fill="url(#c39)"/>
<rect x="1025" y="212" width="636.5" height="2.6" fill="url(#c40)"/>
<rect x="1026" y="214" width="635.5" height="2.6" fill="url(#c41)"/>
<rect x="1026" y="216" width="635.5" height="2.6" fill="url(#c42)"/>
<rect x="1027" y="218" width="634.5" height="2.6" fill="url(#c43)"/>
<rect x="1028" y="220" width="633.5" height="2.6" fill="url(#c44)"/>
<rect x="1028" y="222" width="633.5" height="2.6" fill="url(#c45)"/>
<rect x="1029" y="224" width="632.5" height="2.6" fill="url(#c46)"/>
<rect x="1029" y="226" width="630.5" height="2.6" fill="url(#c47)"/>
<rect x="1030" y="228" width="628.5" height="2.6" fill="url(#c48)"/>
<rect x="1031" y="230" width="625.5" height="2.6" fill="url(#c49)"/>
<rect x="1031" y="232" width="623.5" height="2.6" fill="url(#c50)"/>
<rect x="1032" y="234" width="620.5" height="2.6" fill="url(#c51)"/>
<rect x="1032" y="236" width="618.5" height="2.6" fill="url(#c52)"/>
<rect x="1033" y="238" width="615.5" height="2.6" fill="url(#c53)"/>
<rect x="1034" y="240" width="612.5" height="2.6" fill="url(#c54)"/>
<rect x="1035" y="242" width="609.5" height="2.6" fill="url(#c55)"/>
<rect x="1035" y="244" width="607.5" height="2.6" fill="url(#c56)"/>
<rect x="1036" y="246" width="604.5" height="2.6" fill="url(#c57)"/>
<rect x="1037" y="248" width="601.5" height="2.6" fill="url(#c58)"/>
<rect x="1037" y="250" width="599.5" height="2.6" fill="url(#c59)"/>
<rect x="1038" y="252" width="596.5" height="2.6" fill="url(#c60)"/>
<rect x="1039" y="254" width="593.5" height="2.6" fill="url(#c61)"/>
<rect x="1039" y="256" width="591.5" height="2.6" fill="url(#c62)"/>
<rect x="1040" y="258" width="588.5" height="2.6" fill="url(#c63)"/>
<rect x="1041" y="260" width="585.5" height="2.6" fill="url(#c64)"/>
<rect x="1042" y="262" width="582.5" height="2.6" fill="url(#c65)"/>
<rect x="1043" y="264" width="580.5" height="2.6" fill="url(#c66)"/>
<rect x="1043" y="266" width="578.5" height="2.6" fill="url(#c67)"/>
<rect x="1044" y="268" width="575.5" height="2.6" fill="url(#c68)"/>
<rect x="1045" y="270" width="572.5" height="2.6" fill="url(#c69)"/>
<rect x="1046" y="272" width="569.5" height="2.6" fill="url(#c70)"/>
<rect x="1046" y="274" width="567.5" height="2.6" fill="url(#c71)"/>
<rect x="1047" y="276" width="564.5" height="2.6" fill="url(#c72)"/>
<rect x="1048" y="278" width="561.5" height="2.6" fill="url(#c73)"/>
<rect x="1049" y="280" width="558.5" height="2.6" fill="url(#c74)"/>
<rect x="1050" y="282" width="555.5" height="2.6" fill="url(#c75)"/>
<rect x="1051" y="284" width="552.5" height="2.6" fill="url(#c76)"/>
<rect x="1051" y="286" width="550.5" height="2.6" fill="url(#c77)"/>
<rect x="1052" y="288" width="547.5" height="2.6" fill="url(#c78)"/>
<rect x="1053" y="290" width="544.5" height="2.6" fill="url(#c79)"/>
<rect x="1054" y="292" width="541.5" height="2.6" fill="url(#c80)"/>
<rect x="1055" y="294" width="538.5" height="2.6" fill="url(#c81)"/>
<rect x="1056" y="296" width="535.5" height="2.6" fill="url(#c82)"/>
<rect x="1056" y="298" width="534.5" height="2.6" fill="url(#c83)"/>
<rect x="1057" y="300" width="531.5" height="2.6" fill="url(#c84)"/>
<rect x="1058" y="302" width="528.5" height="2.6" fill="url(#c85)"/>
<rect x="1059" y="304" width="525.5" height="2.6" fill="url(#c86)"/>
<rect x="1060" y="306" width="522.5" height="2.6" fill="url(#c87)"/>
<rect x="1061" y="308" width="519.5" height="2.6" fill="url(#c88)"/>
<rect x="1062" y="310" width="516.5" height="2.6" fill="url(#c89)"/>
<rect x="1063" y="312" width="513.5" height="2.6" fill="url(#c90)"/>
<rect x="1064" y="314" width="510.5" height="2.6" fill="url(#c91)"/>
<rect x="1065" y="316" width="507.5" height="2.6" fill="url(#c92)"/>
<rect x="1066" y="318" width="504.5" height="2.6" fill="url(#c93)"/>
<rect x="1067" y="320" width="501.5" height="2.6" fill="url(#c94)"/>
<rect x="1067" y="322" width="499.5" height="2.6" fill="url(#c95)"/>
<rect x="1068" y="324" width="496.5" height="2.6" fill="url(#c96)"/>
<rect x="1069" y="326" width="493.5" height="2.6" fill="url(#c97)"/>
<rect x="1070" y="328" width="490.5" height="2.6" fill="url(#c98)"/>
<rect x="1071" y="330" width="487.5" height="2.6" fill="url(#c99)"/>
<rect x="1072" y="332" width="484.5" height="2.6" fill="url(#c100)"/>
<rect x="1073" y="334" width="482.5" height="2.6" fill="url(#c101)"/>
<rect x="1074" y="336" width="479.5" height="2.6" fill="url(#c102)"/>
<rect x="1075" y="338" width="476.5" height="2.6" fill="url(#c103)"/>
<rect x="1076" y="340" width="473.5" height="2.6" fill="url(#c104)"/>
<rect x="1078" y="342" width="469.5" height="2.6" fill="url(#c105)"/>
<rect x="1079" y="344" width="466.5" height="2.6" fill="url(#c106)"/>
<rect x="1080" y="346" width="463.5" height="2.6" fill="url(#c107)"/>
<rect x="1081" y="348" width="460.5" height="2.6" fill="url(#c108)"/>
<rect x="1082" y="350" width="457.5" height="2.6" fill="url(#c109)"/>
<rect x="1083" y="352" width="454.5" height="2.6" fill="url(#c110)"/>
<rect x="1084" y="354" width="451.5" height="2.6" fill="url(#c111)"/>
<rect x="1085" y="356" width="448.5" height="2.6" fill="url(#c112)"/>
<rect x="1086" y="358" width="445.5" height="2.6" fill="url(#c113)"/>
<rect x="1087" y="360" width="442.5" height="2.6" fill="url(#c114)"/>
<rect x="1088" y="362" width="439.5" height="2.6" fill="url(#c115)"/>
<rect x="1089" y="364" width="436.5" height="2.6" fill="url(#c116)"/>
<rect x="1091" y="366" width="432.5" height="2.6" fill="url(#c117)"/>
<rect x="1092" y="368" width="429.5" height="2.6" fill="url(#c118)"/>
<rect x="1093" y="370" width="427.5" height="2.6" fill="url(#c119)"/>
<rect x="1094" y="372" width="424.5" height="2.6" fill="url(#c120)"/>
<rect x="1095" y="374" width="421.5" height="2.6" fill="url(#c121)"/>
<rect x="1096" y="376" width="418.5" height="2.6" fill="url(#c122)"/>
<rect x="1097" y="378" width="415.5" height="2.6" fill="url(#c123)"/>
<rect x="1099" y="380" width="411.5" height="2.6" fill="url(#c124)"/>
<rect x="1100" y="382" width="408.5" height="2.6" fill="url(#c125)"/>
<rect x="1101" y="384" width="405.5" height="2.6" fill="url(#c126)"/>
<rect x="1102" y="386" width="402.5" height="2.6" fill="url(#c127)"/>
<rect x="1103" y="388" width="399.5" height="2.6" fill="url(#c128)"/>
<rect x="1104" y="390" width="396.5" height="2.6" fill="url(#c129)"/>
<rect x="1106" y="392" width="392.5" height="2.6" fill="url(#c130)"/>
<rect x="1107" y="394" width="389.5" height="2.6" fill="url(#c131)"/>
<rect x="1108" y="396" width="386.5" height="2.6" fill="url(#c132)"/>
<rect x="1109" y="398" width="383.5" height="2.6" fill="url(#c133)"/>
<rect x="1110" y="400" width="380.5" height="2.6" fill="url(#c134)"/>
<rect x="1111" y="402" width="377.5" height="2.6" fill="url(#c135)"/>
<rect x="1113" y="404" width="373.5" height="2.6" fill="url(#c136)"/>
<rect x="1114" y="406" width="371.5" height="2.6" fill="url(#c137)"/>
<rect x="1115" y="408" width="368.5" height="2.6" fill="url(#c138)"/>
<rect x="1116" y="410" width="365.5" height="2.6" fill="url(#c139)"/>
<rect x="1118" y="412" width="361.5" height="2.6" fill="url(#c140)"/>
<rect x="1119" y="414" width="358.5" height="2.6" fill="url(#c141)"/>
<rect x="1120" y="416" width="355.5" height="2.6" fill="url(#c142)"/>
<rect x="1121" y="418" width="352.5" height="2.6" fill="url(#c143)"/>
<rect x="1122" y="420" width="349.5" height="2.6" fill="url(#c144)"/>
<rect x="1124" y="422" width="345.5" height="2.6" fill="url(#c145)"/>
<rect x="1125" y="424" width="342.5" height="2.6" fill="url(#c146)"/>
<rect x="1126" y="426" width="339.5" height="2.6" fill="url(#c147)"/>
<rect x="1127" y="428" width="336.5" height="2.6" fill="url(#c148)"/>
<rect x="1129" y="430" width="332.5" height="2.6" fill="url(#c149)"/>
<rect x="1130" y="432" width="329.5" height="2.6" fill="url(#c150)"/>
<rect x="1131" y="434" width="326.5" height="2.6" fill="url(#c151)"/>
<rect x="1133" y="436" width="322.5" height="2.6" fill="url(#c152)"/>
<rect x="1134" y="438" width="319.5" height="2.6" fill="url(#c153)"/>
<rect x="1135" y="440" width="316.5" height="2.6" fill="url(#c154)"/>
<rect x="1136" y="442" width="314.5" height="2.6" fill="url(#c155)"/>
<rect x="1138" y="444" width="310.5" height="2.6" fill="url(#c156)"/>
<rect x="1139" y="446" width="307.5" height="2.6" fill="url(#c157)"/>
<rect x="1140" y="448" width="304.5" height="2.6" fill="url(#c158)"/>
<rect x="1142" y="450" width="300.5" height="2.6" fill="url(#c159)"/>
<rect x="1143" y="452" width="297.5" height="2.6" fill="url(#c160)"/>
<rect x="1145" y="454" width="293.5" height="2.6" fill="url(#c161)"/>
<rect x="1146" y="456" width="290.5" height="2.6" fill="url(#c162)"/>
<rect x="1147" y="458" width="287.5" height="2.6" fill="url(#c163)"/>
<rect x="1149" y="460" width="283.5" height="2.6" fill="url(#c164)"/>
<rect x="1150" y="462" width="280.5" height="2.6" fill="url(#c165)"/>
<rect x="1151" y="464" width="277.5" height="2.6" fill="url(#c166)"/>
<rect x="1153" y="466" width="273.5" height="2.6" fill="url(#c167)"/>
<rect x="1154" y="468" width="270.5" height="2.6" fill="url(#c168)"/>
<rect x="1156" y="470" width="266.5" height="2.6" fill="url(#c169)"/>
<rect x="1157" y="472" width="263.5" height="2.6" fill="url(#c170)"/>
<rect x="1159" y="474" width="259.5" height="2.6" fill="url(#c171)"/>
<rect x="1160" y="476" width="257.5" height="2.6" fill="url(#c172)"/>
<rect x="1161" y="478" width="254.5" height="2.6" fill="url(#c173)"/>
<rect x="1163" y="480" width="250.5" height="2.6" fill="url(#c174)"/>
<rect x="1164" y="482" width="247.5" height="2.6" fill="url(#c175)"/>
<rect x="1166" y="484" width="243.5" height="2.6" fill="url(#c176)"/>
<rect x="1167" y="486" width="240.5" height="2.6" fill="url(#c177)"/>
<rect x="1169" y="488" width="236.5" height="2.6" fill="url(#c178)"/>
<rect x="1170" y="490" width="233.5" height="2.6" fill="url(#c179)"/>
<rect x="1172" y="492" width="229.5" height="2.6" fill="url(#c180)"/>
<rect x="1174" y="494" width="225.5" height="2.6" fill="url(#c181)"/>
<rect x="1175" y="496" width="222.5" height="2.6" fill="url(#c182)"/>
<rect x="1177" y="498" width="218.5" height="2.6" fill="url(#c183)"/>
<rect x="1178" y="500" width="215.5" height="2.6" fill="url(#c184)"/>
<rect x="1180" y="502" width="211.5" height="2.6" fill="url(#c185)"/>
<rect x="1182" y="504" width="207.5" height="2.6" fill="url(#c186)"/>
<rect x="1183" y="506" width="204.5" height="2.6" fill="url(#c187)"/>
<rect x="1185" y="508" width="200.5" height="2.6" fill="url(#c188)"/>
<rect x="1186" y="510" width="197.5" height="2.6" fill="url(#c189)"/>
<rect x="1188" y="512" width="194.5" height="2.6" fill="url(#c190)"/>
<rect x="1190" y="514" width="190.5" height="2.6" fill="url(#c191)"/>
<rect x="1192" y="516" width="186.5" height="2.6" fill="url(#c192)"/>
<rect x="1193" y="518" width="183.5" height="2.6" fill="url(#c193)"/>
<rect x="1195" y="520" width="179.5" height="2.6" fill="url(#c194)"/>
<rect x="1197" y="522" width="175.5" height="2.6" fill="url(#c195)"/>
<rect x="1199" y="524" width="171.5" height="2.6" fill="url(#c196)"/>
<rect x="1200" y="526" width="168.5" height="2.6" fill="url(#c197)"/>
<rect x="1202" y="528" width="164.5" height="2.6" fill="url(#c198)"/>
<rect x="1204" y="530" width="160.5" height="2.6" fill="url(#c199)"/>
<rect x="1206" y="532" width="156.5" height="2.6" fill="url(#c200)"/>
<rect x="1208" y="534" width="152.5" height="2.6" fill="url(#c201)"/>
<rect x="1210" y="536" width="148.5" height="2.6" fill="url(#c202)"/>
<rect x="1212" y="538" width="144.5" height="2.6" fill="url(#c203)"/>
<rect x="1214" y="540" width="140.5" height="2.6" fill="url(#c204)"/>
<rect x="1216" y="542" width="136.5" height="2.6" fill="url(#c205)"/>
<rect x="1218" y="544" width="132.5" height="2.6" fill="url(#c206)"/>
<rect x="1220" y="546" width="128.5" height="2.6" fill="url(#c207)"/>
<rect x="1223" y="548" width="124.5" height="2.6" fill="url(#c208)"/>
<rect x="1225" y="550" width="120.5" height="2.6" fill="url(#c209)"/>
<rect x="1227" y="552" width="116.5" height="2.6" fill="url(#c210)"/>
<rect x="1229" y="554" width="112.5" height="2.6" fill="url(#c211)"/>
<rect x="1232" y="556" width="107.5" height="2.6" fill="url(#c212)"/>
<rect x="1234" y="558" width="103.5" height="2.6" fill="url(#c213)"/>
<rect x="1236" y="560" width="99.5" height="2.6" fill="url(#c214)"/>
<rect x="1239" y="562" width="94.5" height="2.6" fill="url(#c215)"/>
<rect x="1241" y="564" width="90.5" height="2.6" fill="url(#c216)"/>
<rect x="1243" y="566" width="86.5" height="2.6" fill="url(#c217)"/>
<rect x="1246" y="568" width="81.5" height="2.6" fill="url(#c218)"/>
<rect x="1248" y="570" width="77.5" height="2.6" fill="url(#c219)"/>
<rect x="1251" y="572" width="72.5" height="2.6" fill="url(#c220)"/>
<rect x="1253" y="574" width="68.5" height="2.6" fill="url(#c221)"/>
<rect x="1255" y="576" width="64.5" height="2.6" fill="url(#c222)"/>
<rect x="1258" y="578" width="59.5" height="2.6" fill="url(#c223)"/>
<rect x="1260" y="580" width="55.5" height="2.6" fill="url(#c224)"/>
<rect x="1263" y="582" width="50.5" height="2.6" fill="url(#c225)"/>
<rect x="1265" y="584" width="47.5" height="2.6" fill="url(#c226)"/>
<rect x="1268" y="586" width="42.5" height="2.6" fill="url(#c227)"/>
<rect x="1270" y="588" width="38.5" height="2.6" fill="url(#c228)"/>
<rect x="1272" y="590" width="34.5" height="2.6" fill="url(#c229)"/>
<rect x="1275" y="592" width="29.5" height="2.6" fill="url(#c230)"/>
<rect x="1277" y="594" width="25.5" height="2.6" fill="url(#c231)"/>
<rect x="1279" y="596" width="21.5" height="2.6" fill="url(#c232)"/>
<rect x="1282" y="598" width="16.5" height="2.6" fill="url(#c233)"/>
<rect x="1285" y="600" width="11.5" height="2.6" fill="url(#c234)"/>
<path d="M1293.0,599.2 L1291.9,599.6 L1290.7,599.6 L1289.4,599.5 L1288.1,598.8 L1286.6,597.9 L1285.4,597.0 L1284.0,596.0 L1282.5,594.8 L1280.7,593.4 L1279.7,592.6 L1278.6,591.8 L1277.5,590.9 L1276.3,589.9 L1275.1,588.9 L1273.8,587.8 L1272.5,586.6 L1271.1,585.4 L1269.6,584.2 L1268.1,582.9 L1266.5,581.5 L1264.8,580.1 L1263.0,578.6 L1261.1,577.0 L1259.0,575.4 L1256.9,573.6 L1254.7,571.8 L1252.3,569.8 L1249.9,567.8 L1247.4,565.8 L1244.8,563.6 L1242.1,561.3 L1239.3,559.0 L1236.3,556.5 L1233.3,553.8 L1230.1,551.0 L1226.8,548.1 L1223.4,545.0 L1219.8,541.7 L1216.2,538.2 L1212.4,534.5 L1208.5,530.6 L1204.4,526.2 L1200.1,521.5 L1195.4,516.2 L1190.4,510.3 L1185.1,504.0 L1179.5,497.0 L1173.7,489.7 L1167.8,481.9 L1161.7,473.6 L1155.5,464.9 L1149.1,455.8 L1142.6,446.2 L1136.0,436.1 L1129.3,425.5 L1122.5,414.7 L1115.7,403.5 L1108.9,392.1 L1102.2,380.6 L1095.5,369.0 L1088.9,357.2 L1082.6,345.4 L1076.5,333.6 L1070.7,321.9 L1065.3,310.5 L1060.3,299.2 L1055.5,288.2 L1051.1,277.5 L1047.0,267.1 L1043.2,257.2 L1039.7,247.7 L1036.6,238.7 L1033.9,230.1 L1031.5,222.1 L1029.4,214.7 L1027.6,207.6 L1026.2,201.1 L1025.0,195.0 L1024.1,189.3 L1023.4,184.0 L1023.0,179.1 L1022.8,174.6 L1022.8,170.5 L1023.1,166.6 L1023.6,162.9 L1024.3,159.6 L1025.1,156.5 L1026.2,153.6 L1027.5,151.0 L1029.0,148.7 L1030.6,146.5 L1032.4,144.6 L1034.3,142.9 L1036.4,141.5 L1038.6,140.2 L1040.9,139.2 L1043.3,138.2 L1045.8,137.5 L1048.4,136.9 L1051.0,136.4 L1053.7,136.0 L1056.5,135.7 L1059.4,135.5 L1062.3,135.3 L1065.3,135.2 L1068.3,135.1 L1071.3,135.0 L1074.3,135.0 L1077.3,135.0 L1080.3,135.0 L1083.3,135.0 L1086.3,135.1 L1089.4,135.2 L1092.4,135.3 L1095.6,135.4 L1098.7,135.5 L1101.9,135.7 L1105.1,135.9 L1108.4,136.1 L1111.8,136.3 L1115.1,136.6 L1118.6,136.8 L1122.1,137.1 L1125.6,137.4 L1129.3,137.7 L1133.0,138.1 L1136.7,138.4 L1140.5,138.8 L1144.4,139.2 L1148.4,139.6 L1152.5,140.0 L1156.6,140.4 L1160.8,140.8 L1165.1,141.3 L1169.5,141.8 L1174.0,142.2 L1178.6,142.7 L1183.3,143.3 L1188.0,143.8 L1192.9,144.3 L1197.9,144.9 L1203.0,145.4 L1208.1,146.0 L1213.4,146.6 L1218.8,147.2 L1224.3,147.8 L1229.9,148.5 L1235.6,149.1 L1241.4,149.8 L1247.4,150.5 L1253.4,151.2 L1259.6,151.9 L1265.8,152.6 L1272.2,153.3 L1278.7,154.1 L1285.3,154.8 L1292.0,155.6 L1298.8,156.4 L1305.7,157.2 L1312.7,158.0 L1319.8,158.8 L1327.0,159.6 L1334.3,160.5 L1341.7,161.3 L1349.2,162.2 L1356.7,163.0 L1364.3,163.9 L1371.9,164.8 L1379.7,165.7 L1387.4,166.6 L1395.2,167.5 L1403.0,168.4 L1410.7,169.3 L1418.3,170.1 L1425.8,171.0 L1433.3,171.9 L1440.7,172.7 L1448.1,173.6 L1455.5,174.4 L1462.9,175.3 L1470.3,176.1 L1477.5,176.9 L1484.6,177.8 L1491.5,178.6 L1498.2,179.3 L1504.8,180.1 L1511.2,180.8 L1517.5,181.5 L1523.7,182.2 L1529.7,182.9 L1535.5,183.6 L1541.2,184.3 L1546.7,184.9 L1552.0,185.5 L1557.2,186.1 L1562.1,186.7 L1566.9,187.2 L1571.6,187.8 L1576.0,188.3 L1580.3,188.8 L1584.5,189.2 L1588.5,189.7 L1592.4,190.1 L1596.2,190.6 L1599.8,191.0 L1603.2,191.4 L1606.6,191.8 L1609.9,192.2 L1613.2,192.5 L1616.3,192.9 L1619.3,193.2 L1622.3,193.6 L1625.1,193.9 L1627.9,194.2 L1630.6,194.5 L1633.1,194.8 L1635.6,195.1 L1638.0,195.4 L1640.3,195.7 L1642.5,195.9 L1644.6,196.1 L1646.6,196.4 L1648.5,196.6 L1650.3,196.8 L1652.0,197.0 L1653.6,197.2 L1655.0,197.3 L1656.5,197.5 L1657.8,197.7 L1659.1,197.8 L1660.4,198.0 L1661.6,198.1 L1663.7,198.3 L1665.7,198.6 L1667.4,198.8 L1668.8,198.9 L1670.5,199.1 L1672.1,199.3 L1673.5,199.5 L1674.7,199.6 L1676.3,199.8 L1677.8,200.0 L1679.1,200.1 L1680.3,200.3 L1680.7,200.3 Z M1499.61,185.87 L1152.51,153.39 L1206.22,485.21 Z" fill="#000000" fill-opacity="0.4" fill-rule="evenodd"/>
</g></g>
<rect x="1019.6" y="123.6" width="640" height="491.6" fill="none" stroke="#a8a8a8" stroke-width="1"/>
<line x1="1019.6" y1="123.6" x2="1019.6" y2="615.8" stroke="#c0c0c0" stroke-width="1.4"/>
<line x1="1019" y1="615.2" x2="1659.6" y2="615.2" stroke="#c0c0c0" stroke-width="1.4"/>
<line x1="1014.6" y1="616.3" x2="1019.6" y2="616.3" stroke="#c8c8c8" stroke-width="1.3"/>
<text x="1013.4" y="622.5" font-size="14.4" fill="#d2d2d2" text-anchor="end" textLength="7.77" lengthAdjust="spacingAndGlyphs">0</text>
<line x1="1014.6" y1="575.3" x2="1019.6" y2="575.3" stroke="#c8c8c8" stroke-width="1.3"/>
<text x="1013.4" y="581.5" font-size="14.4" fill="#d2d2d2" text-anchor="end" textLength="27.18" lengthAdjust="spacingAndGlyphs">0,05</text>
<line x1="1014.6" y1="534.29" x2="1019.6" y2="534.29" stroke="#c8c8c8" stroke-width="1.3"/>
<text x="1013.4" y="540.49" font-size="14.4" fill="#d2d2d2" text-anchor="end" textLength="19.42" lengthAdjust="spacingAndGlyphs">0,1</text>
<line x1="1014.6" y1="493.29" x2="1019.6" y2="493.29" stroke="#c8c8c8" stroke-width="1.3"/>
<text x="1013.4" y="499.49" font-size="14.4" fill="#d2d2d2" text-anchor="end" textLength="27.18" lengthAdjust="spacingAndGlyphs">0,15</text>
<line x1="1014.6" y1="452.28" x2="1019.6" y2="452.28" stroke="#c8c8c8" stroke-width="1.3"/>
<text x="1013.4" y="458.48" font-size="14.4" fill="#d2d2d2" text-anchor="end" textLength="19.42" lengthAdjust="spacingAndGlyphs">0,2</text>
<line x1="1014.6" y1="411.28" x2="1019.6" y2="411.28" stroke="#c8c8c8" stroke-width="1.3"/>
<text x="1013.4" y="417.48" font-size="14.4" fill="#d2d2d2" text-anchor="end" textLength="27.18" lengthAdjust="spacingAndGlyphs">0,25</text>
<line x1="1014.6" y1="370.27" x2="1019.6" y2="370.27" stroke="#c8c8c8" stroke-width="1.3"/>
<text x="1013.4" y="376.47" font-size="14.4" fill="#d2d2d2" text-anchor="end" textLength="19.42" lengthAdjust="spacingAndGlyphs">0,3</text>
<line x1="1014.6" y1="329.27" x2="1019.6" y2="329.27" stroke="#c8c8c8" stroke-width="1.3"/>
<text x="1013.4" y="335.47" font-size="14.4" fill="#d2d2d2" text-anchor="end" textLength="27.18" lengthAdjust="spacingAndGlyphs">0,35</text>
<line x1="1014.6" y1="288.26" x2="1019.6" y2="288.26" stroke="#c8c8c8" stroke-width="1.3"/>
<text x="1013.4" y="294.46" font-size="14.4" fill="#d2d2d2" text-anchor="end" textLength="19.42" lengthAdjust="spacingAndGlyphs">0,4</text>
<line x1="1014.6" y1="247.26" x2="1019.6" y2="247.26" stroke="#c8c8c8" stroke-width="1.3"/>
<text x="1013.4" y="253.46" font-size="14.4" fill="#d2d2d2" text-anchor="end" textLength="27.18" lengthAdjust="spacingAndGlyphs">0,45</text>
<line x1="1014.6" y1="206.25" x2="1019.6" y2="206.25" stroke="#c8c8c8" stroke-width="1.3"/>
<text x="1013.4" y="212.45" font-size="14.4" fill="#d2d2d2" text-anchor="end" textLength="19.42" lengthAdjust="spacingAndGlyphs">0,5</text>
<line x1="1014.6" y1="165.24" x2="1019.6" y2="165.24" stroke="#c8c8c8" stroke-width="1.3"/>
<text x="1013.4" y="171.44" font-size="14.4" fill="#d2d2d2" text-anchor="end" textLength="27.18" lengthAdjust="spacingAndGlyphs">0,55</text>
<line x1="1020" y1="615.2" x2="1020" y2="620.2" stroke="#c8c8c8" stroke-width="1.3"/>
<text x="1020" y="637.2" font-size="14.4" fill="#d2d2d2" text-anchor="middle" textLength="7.77" lengthAdjust="spacingAndGlyphs">0</text>
<line x1="1073.29" y1="615.2" x2="1073.29" y2="620.2" stroke="#c8c8c8" stroke-width="1.3"/>
<text x="1073.29" y="637.2" font-size="14.4" fill="#d2d2d2" text-anchor="middle" textLength="27.18" lengthAdjust="spacingAndGlyphs">0,05</text>
<line x1="1126.57" y1="615.2" x2="1126.57" y2="620.2" stroke="#c8c8c8" stroke-width="1.3"/>
<text x="1126.57" y="637.2" font-size="14.4" fill="#d2d2d2" text-anchor="middle" textLength="19.42" lengthAdjust="spacingAndGlyphs">0,1</text>
<line x1="1179.86" y1="615.2" x2="1179.86" y2="620.2" stroke="#c8c8c8" stroke-width="1.3"/>
<text x="1179.86" y="637.2" font-size="14.4" fill="#d2d2d2" text-anchor="middle" textLength="27.18" lengthAdjust="spacingAndGlyphs">0,15</text>
<line x1="1233.14" y1="615.2" x2="1233.14" y2="620.2" stroke="#c8c8c8" stroke-width="1.3"/>
<text x="1233.14" y="637.2" font-size="14.4" fill="#d2d2d2" text-anchor="middle" textLength="19.42" lengthAdjust="spacingAndGlyphs">0,2</text>
<line x1="1286.42" y1="615.2" x2="1286.42" y2="620.2" stroke="#c8c8c8" stroke-width="1.3"/>
<text x="1286.42" y="637.2" font-size="14.4" fill="#d2d2d2" text-anchor="middle" textLength="27.18" lengthAdjust="spacingAndGlyphs">0,25</text>
<line x1="1339.71" y1="615.2" x2="1339.71" y2="620.2" stroke="#c8c8c8" stroke-width="1.3"/>
<text x="1339.71" y="637.2" font-size="14.4" fill="#d2d2d2" text-anchor="middle" textLength="19.42" lengthAdjust="spacingAndGlyphs">0,3</text>
<line x1="1393" y1="615.2" x2="1393" y2="620.2" stroke="#c8c8c8" stroke-width="1.3"/>
<text x="1393" y="637.2" font-size="14.4" fill="#d2d2d2" text-anchor="middle" textLength="27.18" lengthAdjust="spacingAndGlyphs">0,35</text>
<line x1="1446.28" y1="615.2" x2="1446.28" y2="620.2" stroke="#c8c8c8" stroke-width="1.3"/>
<text x="1446.28" y="637.2" font-size="14.4" fill="#d2d2d2" text-anchor="middle" textLength="19.42" lengthAdjust="spacingAndGlyphs">0,4</text>
<line x1="1499.57" y1="615.2" x2="1499.57" y2="620.2" stroke="#c8c8c8" stroke-width="1.3"/>
<text x="1499.57" y="637.2" font-size="14.4" fill="#d2d2d2" text-anchor="middle" textLength="27.18" lengthAdjust="spacingAndGlyphs">0,45</text>
<line x1="1552.85" y1="615.2" x2="1552.85" y2="620.2" stroke="#c8c8c8" stroke-width="1.3"/>
<text x="1552.85" y="637.2" font-size="14.4" fill="#d2d2d2" text-anchor="middle" textLength="19.42" lengthAdjust="spacingAndGlyphs">0,5</text>
<line x1="1606.13" y1="615.2" x2="1606.13" y2="620.2" stroke="#c8c8c8" stroke-width="1.3"/>
<text x="1606.13" y="637.2" font-size="14.4" fill="#d2d2d2" text-anchor="middle" textLength="27.18" lengthAdjust="spacingAndGlyphs">0,55</text>
<rect x="1145.9" y="146.8" width="13.2" height="13.2" fill="none" stroke="#ffffff" stroke-width="1.6" stroke-opacity="0.88"/>
<rect x="1169.9" y="170.9" width="13.2" height="13.2" fill="none" stroke="#ffffff" stroke-width="1.6" stroke-opacity="0.88"/>
<rect x="1209.9" y="162.9" width="13.2" height="13.2" fill="none" stroke="#ffffff" stroke-width="1.6" stroke-opacity="0.88"/>
<rect x="1229.9" y="154.9" width="13.2" height="13.2" fill="none" stroke="#ffffff" stroke-width="1.6" stroke-opacity="0.88"/>
<rect x="1256.9" y="158.8" width="13.2" height="13.2" fill="none" stroke="#ffffff" stroke-width="1.6" stroke-opacity="0.88"/>
<rect x="1289" y="165.9" width="13.2" height="13.2" fill="none" stroke="#ffffff" stroke-width="1.6" stroke-opacity="0.88"/>
<rect x="1206.9" y="185" width="13.2" height="13.2" fill="none" stroke="#ffffff" stroke-width="1.6" stroke-opacity="0.88"/>
<rect x="1271.9" y="198.8" width="13.2" height="13.2" fill="none" stroke="#ffffff" stroke-width="1.6" stroke-opacity="0.88"/>
<rect x="1260.9" y="204.8" width="13.2" height="13.2" fill="none" stroke="#ffffff" stroke-width="1.6" stroke-opacity="0.88"/>
<rect x="1176.9" y="215.9" width="13.2" height="13.2" fill="none" stroke="#ffffff" stroke-width="1.6" stroke-opacity="0.88"/>
<rect x="1160.9" y="234.9" width="13.2" height="13.2" fill="none" stroke="#ffffff" stroke-width="1.6" stroke-opacity="0.88"/>
<rect x="1165.9" y="266.9" width="13.2" height="13.2" fill="none" stroke="#ffffff" stroke-width="1.6" stroke-opacity="0.88"/>
<rect x="1199.8" y="263.9" width="13.2" height="13.2" fill="none" stroke="#ffffff" stroke-width="1.6" stroke-opacity="0.88"/>
<rect x="1220.4" y="268.9" width="13.2" height="13.2" fill="none" stroke="#ffffff" stroke-width="1.6" stroke-opacity="0.88"/>
<rect x="1256" y="286.9" width="13.2" height="13.2" fill="none" stroke="#ffffff" stroke-width="1.6" stroke-opacity="0.88"/>
<rect x="1202.9" y="316.8" width="13.2" height="13.2" fill="none" stroke="#ffffff" stroke-width="1.6" stroke-opacity="0.88"/>
<rect x="1318.2" y="257.8" width="13.2" height="13.2" fill="none" stroke="#ffffff" stroke-width="1.6" stroke-opacity="0.88"/>
<rect x="1202.9" y="367" width="13.2" height="13.2" fill="none" stroke="#ffffff" stroke-width="1.6" stroke-opacity="0.88"/>
<rect x="1338" y="336.9" width="13.2" height="13.2" fill="none" stroke="#ffffff" stroke-width="1.6" stroke-opacity="0.88"/>
<rect x="1199.9" y="478.8" width="13.2" height="13.2" fill="none" stroke="#ffffff" stroke-width="1.6" stroke-opacity="0.88"/>
<rect x="1331.9" y="169.9" width="13.2" height="13.2" fill="none" stroke="#ffffff" stroke-width="1.6" stroke-opacity="0.88"/>
<rect x="1351" y="211.8" width="13.2" height="13.2" fill="none" stroke="#ffffff" stroke-width="1.6" stroke-opacity="0.88"/>
<rect x="1412" y="200" width="13.2" height="13.2" fill="none" stroke="#ffffff" stroke-width="1.6" stroke-opacity="0.88"/>
<rect x="1493" y="179.4" width="13.2" height="13.2" fill="none" stroke="#ffffff" stroke-width="1.6" stroke-opacity="0.88"/>
<rect x="1223.2" y="224.2" width="12.4" height="12.4" fill="none" stroke="#000000" stroke-width="2.1"/>
<circle cx="1232.2" cy="240.2" r="4.3" fill="#ece4f4" stroke="#000000" stroke-width="1.1"/>
<circle cx="1232.6" cy="240.6" r="4.3" fill="#d6d0e0" stroke="#000000" stroke-width="1.1"/>
<circle cx="1233" cy="241" r="4.3" fill="#c4bece" stroke="#000000" stroke-width="1.1"/>
<circle cx="1233.6" cy="241.6" r="4.3" fill="#b0acba" stroke="#000000" stroke-width="1.1"/>
<circle cx="1234" cy="242" r="4.3" fill="#a09ea8" stroke="#000000" stroke-width="1.1"/>
<circle cx="1174.1" cy="154.4" r="4.3" fill="#14ff14" stroke="#000000" stroke-width="1.1"/>
<circle cx="1245.9" cy="161.5" r="4.3" fill="#ffff00" stroke="#000000" stroke-width="1.1"/>
<circle cx="1266.5" cy="166.9" r="4.3" fill="#e2be2c" stroke="#000000" stroke-width="1.1"/>
<circle cx="1285.4" cy="172.4" r="4.3" fill="#dea238" stroke="#000000" stroke-width="1.1"/>
<circle cx="1314.1" cy="176.3" r="4.3" fill="#d68234" stroke="#000000" stroke-width="1.1"/>
<circle cx="1225.4" cy="174.9" r="4.3" fill="#9eb450" stroke="#000000" stroke-width="1.1"/>
<circle cx="1197.1" cy="189.9" r="4.3" fill="#508850" stroke="#000000" stroke-width="1.1"/>
<circle cx="1221.6" cy="200.9" r="4.3" fill="#586848" stroke="#000000" stroke-width="1.1"/>
<circle cx="1262.3" cy="214.4" r="4.3" fill="#70584c" stroke="#000000" stroke-width="1.1"/>
<circle cx="1256.9" cy="221.4" r="4.3" fill="#b89688" stroke="#000000" stroke-width="1.1"/>
<circle cx="1311.6" cy="225.4" r="4.3" fill="#ba5464" stroke="#000000" stroke-width="1.1"/>
<circle cx="1200.1" cy="236.3" r="4.3" fill="#70a696" stroke="#000000" stroke-width="1.1"/>
<circle cx="1185" cy="256.8" r="4.3" fill="#14ffff" stroke="#000000" stroke-width="1.1"/>
<circle cx="1291.1" cy="271.9" r="4.3" fill="#b45c96" stroke="#000000" stroke-width="1.1"/>
<circle cx="1215.9" cy="285.3" r="4.3" fill="#6c82a6" stroke="#000000" stroke-width="1.1"/>
<circle cx="1224.4" cy="289.5" r="4.3" fill="#000000" stroke="#000000" stroke-width="1.1"/>
<circle cx="1231.2" cy="289.5" r="4.3" fill="#928eb8" stroke="#000000" stroke-width="1.1"/>
<circle cx="1188.9" cy="294.8" r="4.3" fill="#188ca0" stroke="#000000" stroke-width="1.1"/>
<circle cx="1253" cy="300.4" r="4.3" fill="#60446c" stroke="#000000" stroke-width="1.1"/>
<circle cx="1217.5" cy="332.9" r="4.3" fill="#5664a8" stroke="#000000" stroke-width="1.1"/>
<circle cx="1317" cy="347.9" r="4.3" fill="#ff14ff" stroke="#000000" stroke-width="1.1"/>
<circle cx="1216" cy="379.5" r="4.3" fill="#46509c" stroke="#000000" stroke-width="1.1"/>
<circle cx="1213.5" cy="508.6" r="4.3" fill="#0000ff" stroke="#00007a" stroke-width="1.1"/>
<circle cx="1426" cy="178" r="4.3" fill="#ff1010" stroke="#000000" stroke-width="1.1"/>
<circle cx="1357.6" cy="210.5" r="4.3" fill="#ac3c4a" stroke="#000000" stroke-width="1.1"/>
<clipPath id="insclip"><rect x="1455" y="443" width="198" height="131"/></clipPath>
<g clip-path="url(#insclip)">
<rect x="1455" y="443" width="198" height="131" fill="url(#ginsL)"/>
<polygon points="1455,443 1653,443 1653,558.5 1455,457.5" fill="#000000" fill-opacity="0.4"/>
</g>
<rect x="1455" y="443" width="198" height="131" fill="none" stroke="#8c8c8c" stroke-width="1.8"/>
<rect x="1547" y="500.8" width="13.2" height="13.2" fill="none" stroke="#ffffff" stroke-width="1.6" stroke-opacity="0.9"/>
<circle cx="1602.5" cy="528.1" r="4.3" fill="#ffff00" stroke="#000000" stroke-width="1.1"/>
<rect x="1404.4" y="583.5" width="251.8" height="26.5" fill="#333333"/>
<text x="1405.2" y="605.2" font-size="19.4" fill="#f0f0f0" textLength="210.6" lengthAdjust="spacingAndGlyphs">RGB Triplet: 255, 255, 0</text>
<rect x="322" y="663.8" width="1346.5" height="228.4" fill="#151515"/>
<rect x="323.2" y="665" width="1344.1" height="26" fill="url(#ghead)"/>
<clipPath id="tblclip"><rect x="323.2" y="665" width="1344.1" height="226"/></clipPath>
<g clip-path="url(#tblclip)">
<text x="494.6" y="684.4" font-size="14.4" fill="#f2f2f2" textLength="47.2" lengthAdjust="spacingAndGlyphs">White</text>
<text x="556.6" y="684.4" font-size="14.4" fill="#f2f2f2" textLength="60.6" lengthAdjust="spacingAndGlyphs">Gray 80</text>
<text x="627.2" y="684.4" font-size="14.4" fill="#f2f2f2" textLength="60.6" lengthAdjust="spacingAndGlyphs">Gray 65</text>
<text x="698" y="684.4" font-size="14.4" fill="#f2f2f2" textLength="61.2" lengthAdjust="spacingAndGlyphs">Gray 50</text>
<text x="769.4" y="684.4" font-size="14.4" fill="#f2f2f2" textLength="59.9" lengthAdjust="spacingAndGlyphs">Gray 35</text>
<text x="842.7" y="684.4" font-size="14.4" fill="#f2f2f2" textLength="40.7" lengthAdjust="spacingAndGlyphs">Black</text>
<text x="896.6" y="684.4" font-size="14.4" fill="#f2f2f2" textLength="73" lengthAdjust="spacingAndGlyphs">Dark Skin</text>
<text x="981" y="684.4" font-size="14.4" fill="#f2f2f2" textLength="74.6" lengthAdjust="spacingAndGlyphs">Light Skin</text>
<text x="1066.4" y="684.4" font-size="14.4" fill="#f2f2f2" textLength="65.5" lengthAdjust="spacingAndGlyphs">Blue Sky</text>
<text x="1142.1" y="684.4" font-size="14.4" fill="#f2f2f2" textLength="55.8" lengthAdjust="spacingAndGlyphs">Foliage</text>
<text x="1208.4" y="684.4" font-size="14.4" fill="#f2f2f2" textLength="92.9" lengthAdjust="spacingAndGlyphs">Blue Flower</text>
<text x="1312" y="684.4" font-size="14.4" fill="#f2f2f2" textLength="100.5" lengthAdjust="spacingAndGlyphs">Bluish Green</text>
<text x="1423.2" y="684.4" font-size="14.4" fill="#f2f2f2" textLength="56.8" lengthAdjust="spacingAndGlyphs">Orange</text>
<text x="1490.5" y="684.4" font-size="14.4" fill="#f2f2f2" textLength="103.5" lengthAdjust="spacingAndGlyphs">Purplish Blue</text>
<text x="1604.7" y="684.4" font-size="14.4" fill="#f2f2f2" textLength="120" lengthAdjust="spacingAndGlyphs">Moderate Red</text>
<rect x="323.2" y="690.9" width="1344.1" height="23.4" fill="#404040"/>
<text x="338.3" y="708.8" font-size="16" fill="#ffffff" font-weight="bold" textLength="71.9" lengthAdjust="spacingAndGlyphs">x: CIE31</text>
<text x="489.8" y="708.8" font-size="16" fill="#ffffff" textLength="35.65" lengthAdjust="spacingAndGlyphs">0,31</text>
<text x="556.6" y="708.8" font-size="16" fill="#ffffff" textLength="35.65" lengthAdjust="spacingAndGlyphs">0,31</text>
<text x="627.2" y="708.8" font-size="16" fill="#ffffff" textLength="35.65" lengthAdjust="spacingAndGlyphs">0,31</text>
<text x="698" y="708.8" font-size="16" fill="#ffffff" textLength="35.65" lengthAdjust="spacingAndGlyphs">0,30</text>
<text x="769.4" y="708.8" font-size="16" fill="#ffffff" textLength="35.65" lengthAdjust="spacingAndGlyphs">0,30</text>
<text x="840" y="708.8" font-size="16" fill="#ffffff" textLength="35.65" lengthAdjust="spacingAndGlyphs">0,25</text>
<text x="896.6" y="708.8" font-size="16" fill="#ffffff" textLength="35.65" lengthAdjust="spacingAndGlyphs">0,37</text>
<text x="981" y="708.8" font-size="16" fill="#ffffff" textLength="35.65" lengthAdjust="spacingAndGlyphs">0,35</text>
<text x="1066.4" y="708.8" font-size="16" fill="#ffffff" textLength="35.65" lengthAdjust="spacingAndGlyphs">0,25</text>
<text x="1142.1" y="708.8" font-size="16" fill="#ffffff" textLength="35.65" lengthAdjust="spacingAndGlyphs">0,34</text>
<text x="1208.4" y="708.8" font-size="16" fill="#ffffff" textLength="35.65" lengthAdjust="spacingAndGlyphs">0,26</text>
<text x="1312" y="708.8" font-size="16" fill="#ffffff" textLength="35.65" lengthAdjust="spacingAndGlyphs">0,27</text>
<text x="1423.2" y="708.8" font-size="16" fill="#ffffff" textLength="35.65" lengthAdjust="spacingAndGlyphs">0,49</text>
<text x="1490.5" y="708.8" font-size="16" fill="#ffffff" textLength="35.65" lengthAdjust="spacingAndGlyphs">0,22</text>
<text x="1604.7" y="708.8" font-size="16" fill="#ffffff" textLength="35.65" lengthAdjust="spacingAndGlyphs">0,41</text>
<rect x="323.2" y="714.21" width="1344.1" height="23.4" fill="#808080"/>
<text x="338.3" y="732.11" font-size="16" fill="#f0f0f0" font-weight="bold" textLength="71.4" lengthAdjust="spacingAndGlyphs">y: CIE31</text>
<text x="489.8" y="732.11" font-size="16" fill="#f0f0f0" textLength="35.65" lengthAdjust="spacingAndGlyphs">0,31</text>
<text x="556.6" y="732.11" font-size="16" fill="#f0f0f0" textLength="35.65" lengthAdjust="spacingAndGlyphs">0,31</text>
<text x="627.2" y="732.11" font-size="16" fill="#f0f0f0" textLength="35.65" lengthAdjust="spacingAndGlyphs">0,31</text>
<text x="698" y="732.11" font-size="16" fill="#f0f0f0" textLength="35.65" lengthAdjust="spacingAndGlyphs">0,31</text>
<text x="769.4" y="732.11" font-size="16" fill="#f0f0f0" textLength="35.65" lengthAdjust="spacingAndGlyphs">0,31</text>
<text x="840" y="732.11" font-size="16" fill="#f0f0f0" textLength="35.65" lengthAdjust="spacingAndGlyphs">0,23</text>
<text x="896.6" y="732.11" font-size="16" fill="#f0f0f0" textLength="35.65" lengthAdjust="spacingAndGlyphs">0,35</text>
<text x="981" y="732.11" font-size="16" fill="#f0f0f0" textLength="35.65" lengthAdjust="spacingAndGlyphs">0,34</text>
<text x="1066.4" y="732.11" font-size="16" fill="#f0f0f0" textLength="35.65" lengthAdjust="spacingAndGlyphs">0,24</text>
<text x="1142.1" y="732.11" font-size="16" fill="#f0f0f0" textLength="35.65" lengthAdjust="spacingAndGlyphs">0,40</text>
<text x="1208.4" y="732.11" font-size="16" fill="#f0f0f0" textLength="35.65" lengthAdjust="spacingAndGlyphs">0,23</text>
<text x="1312" y="732.11" font-size="16" fill="#f0f0f0" textLength="35.65" lengthAdjust="spacingAndGlyphs">0,33</text>
<text x="1423.2" y="732.11" font-size="16" fill="#f0f0f0" textLength="35.65" lengthAdjust="spacingAndGlyphs">0,42</text>
<text x="1490.5" y="732.11" font-size="16" fill="#f0f0f0" textLength="35.65" lengthAdjust="spacingAndGlyphs">0,18</text>
<text x="1604.7" y="732.11" font-size="16" fill="#f0f0f0" textLength="35.65" lengthAdjust="spacingAndGlyphs">0,31</text>
<rect x="323.2" y="737.52" width="1344.1" height="23.4" fill="#404040"/>
<text x="338.3" y="755.42" font-size="16" fill="#ffffff" font-weight="bold" textLength="11.9" lengthAdjust="spacingAndGlyphs">Y</text>
<text x="489.8" y="755.42" font-size="16" fill="#ffffff" textLength="56.03" lengthAdjust="spacingAndGlyphs">378,83</text>
<text x="556.6" y="755.42" font-size="16" fill="#ffffff" textLength="56.03" lengthAdjust="spacingAndGlyphs">290,26</text>
<text x="627.2" y="755.42" font-size="16" fill="#ffffff" textLength="56.03" lengthAdjust="spacingAndGlyphs">231,34</text>
<text x="698" y="755.42" font-size="16" fill="#ffffff" textLength="56.03" lengthAdjust="spacingAndGlyphs">180,02</text>
<text x="769.4" y="755.42" font-size="16" fill="#ffffff" textLength="56.03" lengthAdjust="spacingAndGlyphs">127,65</text>
<text x="840" y="755.42" font-size="16" fill="#ffffff" textLength="35.65" lengthAdjust="spacingAndGlyphs">0,29</text>
<text x="896.6" y="755.42" font-size="16" fill="#ffffff" textLength="45.84" lengthAdjust="spacingAndGlyphs">41,87</text>
<text x="981" y="755.42" font-size="16" fill="#ffffff" textLength="56.03" lengthAdjust="spacingAndGlyphs">134,77</text>
<text x="1066.4" y="755.42" font-size="16" fill="#ffffff" textLength="45.84" lengthAdjust="spacingAndGlyphs">67,26</text>
<text x="1142.1" y="755.42" font-size="16" fill="#ffffff" textLength="45.84" lengthAdjust="spacingAndGlyphs">49,55</text>
<text x="1208.4" y="755.42" font-size="16" fill="#ffffff" textLength="45.84" lengthAdjust="spacingAndGlyphs">83,78</text>
<text x="1312" y="755.42" font-size="16" fill="#ffffff" textLength="56.03" lengthAdjust="spacingAndGlyphs">148,42</text>
<text x="1423.2" y="755.42" font-size="16" fill="#ffffff" textLength="56.03" lengthAdjust="spacingAndGlyphs">106,74</text>
<text x="1490.5" y="755.42" font-size="16" fill="#ffffff" textLength="45.84" lengthAdjust="spacingAndGlyphs">46,21</text>
<text x="1604.7" y="755.42" font-size="16" fill="#ffffff" textLength="45.84" lengthAdjust="spacingAndGlyphs">76,94</text>
<rect x="323.2" y="760.83" width="1344.1" height="23.4" fill="#808080"/>
<text x="338.3" y="778.73" font-size="16" fill="#f0f0f0" font-weight="bold" textLength="129.9" lengthAdjust="spacingAndGlyphs">Target x:CIE31</text>
<text x="489.8" y="778.73" font-size="16" fill="#f0f0f0" textLength="35.65" lengthAdjust="spacingAndGlyphs">0,31</text>
<text x="556.6" y="778.73" font-size="16" fill="#f0f0f0" textLength="35.65" lengthAdjust="spacingAndGlyphs">0,31</text>
<text x="627.2" y="778.73" font-size="16" fill="#f0f0f0" textLength="35.65" lengthAdjust="spacingAndGlyphs">0,31</text>
<text x="698" y="778.73" font-size="16" fill="#f0f0f0" textLength="35.65" lengthAdjust="spacingAndGlyphs">0,31</text>
<text x="769.4" y="778.73" font-size="16" fill="#f0f0f0" textLength="35.65" lengthAdjust="spacingAndGlyphs">0,31</text>
<text x="840" y="778.73" font-size="16" fill="#f0f0f0" textLength="35.65" lengthAdjust="spacingAndGlyphs">0,31</text>
<text x="896.6" y="778.73" font-size="16" fill="#f0f0f0" textLength="35.65" lengthAdjust="spacingAndGlyphs">0,40</text>
<text x="981" y="778.73" font-size="16" fill="#f0f0f0" textLength="35.65" lengthAdjust="spacingAndGlyphs">0,38</text>
<text x="1066.4" y="778.73" font-size="16" fill="#f0f0f0" textLength="35.65" lengthAdjust="spacingAndGlyphs">0,25</text>
<text x="1142.1" y="778.73" font-size="16" fill="#f0f0f0" textLength="35.65" lengthAdjust="spacingAndGlyphs">0,34</text>
<text x="1208.4" y="778.73" font-size="16" fill="#f0f0f0" textLength="35.65" lengthAdjust="spacingAndGlyphs">0,27</text>
<text x="1312" y="778.73" font-size="16" fill="#f0f0f0" textLength="35.65" lengthAdjust="spacingAndGlyphs">0,26</text>
<text x="1423.2" y="778.73" font-size="16" fill="#f0f0f0" textLength="35.65" lengthAdjust="spacingAndGlyphs">0,51</text>
<text x="1490.5" y="778.73" font-size="16" fill="#f0f0f0" textLength="35.65" lengthAdjust="spacingAndGlyphs">0,22</text>
<text x="1604.7" y="778.73" font-size="16" fill="#f0f0f0" textLength="35.65" lengthAdjust="spacingAndGlyphs">0,46</text>
<rect x="323.2" y="784.14" width="1344.1" height="23.4" fill="#404040"/>
<text x="338.3" y="802.04" font-size="16" fill="#ffffff" font-weight="bold" textLength="129.9" lengthAdjust="spacingAndGlyphs">Target y:CIE31</text>
<text x="489.8" y="802.04" font-size="16" fill="#ffffff" textLength="35.65" lengthAdjust="spacingAndGlyphs">0,33</text>
<text x="556.6" y="802.04" font-size="16" fill="#ffffff" textLength="35.65" lengthAdjust="spacingAndGlyphs">0,33</text>
<text x="627.2" y="802.04" font-size="16" fill="#ffffff" textLength="35.65" lengthAdjust="spacingAndGlyphs">0,33</text>
<text x="698" y="802.04" font-size="16" fill="#ffffff" textLength="35.65" lengthAdjust="spacingAndGlyphs">0,33</text>
<text x="769.4" y="802.04" font-size="16" fill="#ffffff" textLength="35.65" lengthAdjust="spacingAndGlyphs">0,33</text>
<text x="840" y="802.04" font-size="16" fill="#ffffff" textLength="35.65" lengthAdjust="spacingAndGlyphs">0,33</text>
<text x="896.6" y="802.04" font-size="16" fill="#ffffff" textLength="35.65" lengthAdjust="spacingAndGlyphs">0,36</text>
<text x="981" y="802.04" font-size="16" fill="#ffffff" textLength="35.65" lengthAdjust="spacingAndGlyphs">0,36</text>
<text x="1066.4" y="802.04" font-size="16" fill="#ffffff" textLength="35.65" lengthAdjust="spacingAndGlyphs">0,27</text>
<text x="1142.1" y="802.04" font-size="16" fill="#ffffff" textLength="35.65" lengthAdjust="spacingAndGlyphs">0,43</text>
<text x="1208.4" y="802.04" font-size="16" fill="#ffffff" textLength="35.65" lengthAdjust="spacingAndGlyphs">0,25</text>
<text x="1312" y="802.04" font-size="16" fill="#ffffff" textLength="35.65" lengthAdjust="spacingAndGlyphs">0,36</text>
<text x="1423.2" y="802.04" font-size="16" fill="#ffffff" textLength="35.65" lengthAdjust="spacingAndGlyphs">0,41</text>
<text x="1490.5" y="802.04" font-size="16" fill="#ffffff" textLength="35.65" lengthAdjust="spacingAndGlyphs">0,19</text>
<text x="1604.7" y="802.04" font-size="16" fill="#ffffff" textLength="35.65" lengthAdjust="spacingAndGlyphs">0,31</text>
<rect x="323.2" y="807.45" width="1344.1" height="23.4" fill="#808080"/>
<text x="338.3" y="825.35" font-size="16" fill="#f0f0f0" font-weight="bold" textLength="75.5" lengthAdjust="spacingAndGlyphs">Target Y</text>
<text x="489.8" y="825.35" font-size="16" fill="#f0f0f0" textLength="56.03" lengthAdjust="spacingAndGlyphs">378,83</text>
<text x="556.6" y="825.35" font-size="16" fill="#f0f0f0" textLength="56.03" lengthAdjust="spacingAndGlyphs">299,77</text>
<text x="627.2" y="825.35" font-size="16" fill="#f0f0f0" textLength="56.03" lengthAdjust="spacingAndGlyphs">241,54</text>
<text x="698" y="825.35" font-size="16" fill="#f0f0f0" textLength="56.03" lengthAdjust="spacingAndGlyphs">186,01</text>
<text x="769.4" y="825.35" font-size="16" fill="#f0f0f0" textLength="56.03" lengthAdjust="spacingAndGlyphs">129,53</text>
<text x="840" y="825.35" font-size="16" fill="#f0f0f0" textLength="35.65" lengthAdjust="spacingAndGlyphs">0,00</text>
<text x="896.6" y="825.35" font-size="16" fill="#f0f0f0" textLength="45.84" lengthAdjust="spacingAndGlyphs">38,16</text>
<text x="981" y="825.35" font-size="16" fill="#f0f0f0" textLength="56.03" lengthAdjust="spacingAndGlyphs">132,19</text>
<text x="1066.4" y="825.35" font-size="16" fill="#f0f0f0" textLength="45.84" lengthAdjust="spacingAndGlyphs">70,84</text>
<text x="1142.1" y="825.35" font-size="16" fill="#f0f0f0" textLength="45.84" lengthAdjust="spacingAndGlyphs">49,37</text>
<text x="1208.4" y="825.35" font-size="16" fill="#f0f0f0" textLength="45.84" lengthAdjust="spacingAndGlyphs">88,34</text>
<text x="1312" y="825.35" font-size="16" fill="#f0f0f0" textLength="56.03" lengthAdjust="spacingAndGlyphs">158,63</text>
<text x="1423.2" y="825.35" font-size="16" fill="#f0f0f0" textLength="56.03" lengthAdjust="spacingAndGlyphs">107,39</text>
<text x="1490.5" y="825.35" font-size="16" fill="#f0f0f0" textLength="45.84" lengthAdjust="spacingAndGlyphs">44,53</text>
<text x="1604.7" y="825.35" font-size="16" fill="#f0f0f0" textLength="45.84" lengthAdjust="spacingAndGlyphs">70,75</text>
<rect x="323.2" y="830.76" width="1344.1" height="23.4" fill="#404040"/>
<text x="338.3" y="848.66" font-size="16" fill="#ffffff" font-weight="bold" textLength="74.6" lengthAdjust="spacingAndGlyphs">ΔE 2000</text>
<text x="489.8" y="848.66" font-size="16" fill="#ffffff" textLength="45.84" lengthAdjust="spacingAndGlyphs">10,98</text>
<text x="556.6" y="848.66" font-size="16" fill="#ffffff" textLength="35.65" lengthAdjust="spacingAndGlyphs">9,87</text>
<text x="627.2" y="848.66" font-size="16" fill="#ffffff" textLength="35.65" lengthAdjust="spacingAndGlyphs">9,75</text>
<text x="698" y="848.66" font-size="16" fill="#ffffff" textLength="35.65" lengthAdjust="spacingAndGlyphs">8,98</text>
<text x="769.4" y="848.66" font-size="16" fill="#ffffff" textLength="35.65" lengthAdjust="spacingAndGlyphs">7,62</text>
<text x="840" y="848.66" font-size="16" fill="#ffffff" textLength="35.65" lengthAdjust="spacingAndGlyphs">1,39</text>
<text x="896.6" y="848.66" font-size="16" fill="#ffffff" textLength="35.65" lengthAdjust="spacingAndGlyphs">4,39</text>
<text x="981" y="848.66" font-size="16" fill="#ffffff" textLength="35.65" lengthAdjust="spacingAndGlyphs">5,84</text>
<text x="1066.4" y="848.66" font-size="16" fill="#ffffff" textLength="35.65" lengthAdjust="spacingAndGlyphs">6,12</text>
<text x="1142.1" y="848.66" font-size="16" fill="#ffffff" textLength="35.65" lengthAdjust="spacingAndGlyphs">4,20</text>
<text x="1208.4" y="848.66" font-size="16" fill="#ffffff" textLength="35.65" lengthAdjust="spacingAndGlyphs">3,40</text>
<text x="1312" y="848.66" font-size="16" fill="#ffffff" textLength="45.84" lengthAdjust="spacingAndGlyphs">10,71</text>
<text x="1423.2" y="848.66" font-size="16" fill="#ffffff" textLength="35.65" lengthAdjust="spacingAndGlyphs">5,03</text>
<text x="1490.5" y="848.66" font-size="16" fill="#ffffff" textLength="35.65" lengthAdjust="spacingAndGlyphs">3,09</text>
<text x="1604.7" y="848.66" font-size="16" fill="#ffffff" textLength="35.65" lengthAdjust="spacingAndGlyphs">5,86</text>
<rect x="323.2" y="854.07" width="1344.1" height="23.4" fill="#808080"/>
<text x="338.3" y="871.97" font-size="16" fill="#f0f0f0" font-weight="bold" textLength="59.3" lengthAdjust="spacingAndGlyphs">ΔE ITP</text>
<text x="489.8" y="871.97" font-size="16" fill="#f0f0f0" textLength="35.65" lengthAdjust="spacingAndGlyphs">8,46</text>
<text x="556.6" y="871.97" font-size="16" fill="#f0f0f0" textLength="35.65" lengthAdjust="spacingAndGlyphs">8,43</text>
<text x="627.2" y="871.97" font-size="16" fill="#f0f0f0" textLength="35.65" lengthAdjust="spacingAndGlyphs">9,08</text>
<text x="698" y="871.97" font-size="16" fill="#f0f0f0" textLength="35.65" lengthAdjust="spacingAndGlyphs">9,12</text>
<text x="769.4" y="871.97" font-size="16" fill="#f0f0f0" textLength="35.65" lengthAdjust="spacingAndGlyphs">7,98</text>
<text x="840" y="871.97" font-size="16" fill="#f0f0f0" textLength="45.84" lengthAdjust="spacingAndGlyphs">71,43</text>
<text x="896.6" y="871.97" font-size="16" fill="#f0f0f0" textLength="45.84" lengthAdjust="spacingAndGlyphs">16,96</text>
<text x="981" y="871.97" font-size="16" fill="#f0f0f0" textLength="45.84" lengthAdjust="spacingAndGlyphs">14,41</text>
<text x="1066.4" y="871.97" font-size="16" fill="#f0f0f0" textLength="45.84" lengthAdjust="spacingAndGlyphs">10,90</text>
<text x="1142.1" y="871.97" font-size="16" fill="#f0f0f0" textLength="44.48" lengthAdjust="spacingAndGlyphs">11,03</text>
<text x="1208.4" y="871.97" font-size="16" fill="#f0f0f0" textLength="35.65" lengthAdjust="spacingAndGlyphs">8,46</text>
<text x="1312" y="871.97" font-size="16" fill="#f0f0f0" textLength="45.84" lengthAdjust="spacingAndGlyphs">16,92</text>
<text x="1423.2" y="871.97" font-size="16" fill="#f0f0f0" textLength="45.84" lengthAdjust="spacingAndGlyphs">18,14</text>
<text x="1490.5" y="871.97" font-size="16" fill="#f0f0f0" textLength="35.65" lengthAdjust="spacingAndGlyphs">8,68</text>
<text x="1604.7" y="871.97" font-size="16" fill="#f0f0f0" textLength="45.84" lengthAdjust="spacingAndGlyphs">36,23</text>
</g>
<rect x="323.2" y="877" width="1344.1" height="14" fill="#626262"/>
<rect x="345.6" y="877.8" width="646.1" height="12.6" fill="#444444" rx="6.3"/>
<rect x="325" y="878" width="15.5" height="12.5" fill="#8a8a8a" rx="2.5"/>
<path d="M336.4,879.8 V888.6 L329.6,884.2 Z" fill="#3a3a3a"/>
<rect x="1650" y="878" width="15.5" height="12.5" fill="#8a8a8a" rx="2.5"/>
<path d="M1654.6,879.8 V888.6 L1661.4,884.2 Z" fill="#3a3a3a"/>
<rect x="0" y="933" width="1268" height="62" fill="#404040"/>
<clipPath id="pbclip"><rect x="1.5" y="933" width="1266" height="62"/></clipPath>
<g clip-path="url(#pbclip)">
<rect x="-31.9" y="933.8" width="63.4" height="61.4" fill="#2c2c2c" rx="4.6"/>
<rect x="-31.3" y="934.2" width="62.2" height="60.2" fill="url(#gpb)" rx="4"/>
<rect x="-25.3" y="939.6" width="50.6" height="16" fill="#605c84" rx="4.2"/>
<rect x="-24.4" y="940.5" width="49.6" height="14.9" fill="#8680b8" rx="3.8"/>
<text x="-21.45" y="973.8" font-size="11.9" fill="#262626" font-weight="bold" textLength="27" lengthAdjust="spacingAndGlyphs">Blue</text>
<text x="-21.45" y="988.7" font-size="11.9" fill="#262626" font-weight="bold" textLength="42.5" lengthAdjust="spacingAndGlyphs">Flower</text>
<rect x="33.1" y="933.8" width="63.4" height="61.4" fill="#2c2c2c" rx="4.6"/>
<rect x="33.7" y="934.2" width="62.2" height="60.2" fill="url(#gpb)" rx="4"/>
<rect x="39.7" y="939.6" width="50.6" height="16" fill="#478c7c" rx="4.2"/>
<rect x="40.6" y="940.5" width="49.6" height="14.9" fill="#62c2ac" rx="3.8"/>
<text x="46.15" y="973.8" font-size="11.9" fill="#262626" font-weight="bold" textLength="36.6" lengthAdjust="spacingAndGlyphs">Bluish</text>
<text x="46.15" y="988.7" font-size="11.9" fill="#262626" font-weight="bold" textLength="37.3" lengthAdjust="spacingAndGlyphs">Green</text>
<rect x="98.1" y="933.8" width="63.4" height="61.4" fill="#2c2c2c" rx="4.6"/>
<rect x="98.7" y="934.2" width="62.2" height="60.2" fill="url(#gpb)" rx="4"/>
<rect x="104.7" y="939.6" width="50.6" height="30.6" fill="#a0581d" rx="4.2"/>
<rect x="105.6" y="940.5" width="49.6" height="29.5" fill="#de7a28" rx="3.8"/>
<text x="107.6" y="988.7" font-size="11.9" fill="#262626" font-weight="bold" textLength="44.4" lengthAdjust="spacingAndGlyphs">Orange</text>
<rect x="163.1" y="933.8" width="63.4" height="61.4" fill="#2c2c2c" rx="4.6"/>
<rect x="163.7" y="934.2" width="62.2" height="60.2" fill="url(#gpb)" rx="4"/>
<rect x="169.7" y="939.6" width="50.6" height="16" fill="#34427f" rx="4.2"/>
<rect x="170.6" y="940.5" width="49.6" height="14.9" fill="#485cb0" rx="3.8"/>
<text x="169.65" y="973.8" font-size="11.9" fill="#262626" font-weight="bold" textLength="50.3" lengthAdjust="spacingAndGlyphs">Purplish</text>
<text x="169.65" y="988.7" font-size="11.9" fill="#262626" font-weight="bold" textLength="27" lengthAdjust="spacingAndGlyphs">Blue</text>
<rect x="228.1" y="933.8" width="63.4" height="61.4" fill="#2c2c2c" rx="4.6"/>
<rect x="228.7" y="934.2" width="62.2" height="60.2" fill="url(#gpb)" rx="4"/>
<rect x="234.7" y="939.6" width="50.6" height="16" fill="#903c48" rx="4.2"/>
<rect x="235.6" y="940.5" width="49.6" height="14.9" fill="#c85464" rx="3.8"/>
<text x="229.5" y="973.8" font-size="11.9" fill="#262626" font-weight="bold" textLength="60.6" lengthAdjust="spacingAndGlyphs">Moderate</text>
<text x="229.5" y="988.7" font-size="11.9" fill="#262626" font-weight="bold" textLength="23.2" lengthAdjust="spacingAndGlyphs">Red</text>
<rect x="293.1" y="933.8" width="63.4" height="61.4" fill="#2c2c2c" rx="4.6"/>
<rect x="293.7" y="934.2" width="62.2" height="60.2" fill="url(#gpb)" rx="4"/>
<rect x="299.7" y="939.6" width="50.6" height="30.6" fill="#422a51" rx="4.2"/>
<rect x="300.6" y="940.5" width="49.6" height="29.5" fill="#5c3a70" rx="3.8"/>
<text x="304.7" y="988.7" font-size="11.9" fill="#262626" font-weight="bold" textLength="40.2" lengthAdjust="spacingAndGlyphs">Purple</text>
<rect x="358.1" y="933.8" width="63.4" height="61.4" fill="#2c2c2c" rx="4.6"/>
<rect x="358.7" y="934.2" width="62.2" height="60.2" fill="url(#gpb)" rx="4"/>
<rect x="364.7" y="939.6" width="50.6" height="16" fill="#7c902e" rx="4.2"/>
<rect x="365.6" y="940.5" width="49.6" height="14.9" fill="#acc840" rx="3.8"/>
<text x="369.7" y="973.8" font-size="11.9" fill="#262626" font-weight="bold" textLength="40.2" lengthAdjust="spacingAndGlyphs">Yellow</text>
<text x="369.7" y="988.7" font-size="11.9" fill="#262626" font-weight="bold" textLength="37.3" lengthAdjust="spacingAndGlyphs">Green</text>
<rect x="423.1" y="933.8" width="63.4" height="61.4" fill="#2c2c2c" rx="4.6"/>
<rect x="423.7" y="934.2" width="62.2" height="60.2" fill="url(#gpb)" rx="4"/>
<rect x="429.7" y="939.6" width="50.6" height="16" fill="#ad7923" rx="4.2"/>
<rect x="430.6" y="940.5" width="49.6" height="14.9" fill="#f0a830" rx="3.8"/>
<text x="432.6" y="973.8" font-size="11.9" fill="#262626" font-weight="bold" textLength="44.4" lengthAdjust="spacingAndGlyphs">Orange</text>
<text x="432.6" y="988.7" font-size="11.9" fill="#262626" font-weight="bold" textLength="40.2" lengthAdjust="spacingAndGlyphs">Yellow</text>
<rect x="488.1" y="933.8" width="63.4" height="61.4" fill="#2c2c2c" rx="4.6"/>
<rect x="488.7" y="934.2" width="62.2" height="60.2" fill="url(#gpb)" rx="4"/>
<rect x="494.7" y="939.6" width="50.6" height="30.6" fill="#252b72" rx="4.2"/>
<rect x="495.6" y="940.5" width="49.6" height="29.5" fill="#343c9e" rx="3.8"/>
<text x="506.3" y="988.7" font-size="11.9" fill="#262626" font-weight="bold" textLength="27" lengthAdjust="spacingAndGlyphs">Blue</text>
<rect x="553.1" y="933.8" width="63.4" height="61.4" fill="#2c2c2c" rx="4.6"/>
<rect x="553.7" y="934.2" width="62.2" height="60.2" fill="url(#gpb)" rx="4"/>
<rect x="559.7" y="939.6" width="50.6" height="30.6" fill="#316d37" rx="4.2"/>
<rect x="560.6" y="940.5" width="49.6" height="29.5" fill="#44984c" rx="3.8"/>
<text x="566.15" y="988.7" font-size="11.9" fill="#262626" font-weight="bold" textLength="37.3" lengthAdjust="spacingAndGlyphs">Green</text>
<rect x="618.1" y="933.8" width="63.4" height="61.4" fill="#2c2c2c" rx="4.6"/>
<rect x="618.7" y="934.2" width="62.2" height="60.2" fill="url(#gpb)" rx="4"/>
<rect x="624.7" y="939.6" width="50.6" height="30.6" fill="#802328" rx="4.2"/>
<rect x="625.6" y="940.5" width="49.6" height="29.5" fill="#b23038" rx="3.8"/>
<text x="638.2" y="988.7" font-size="11.9" fill="#262626" font-weight="bold" textLength="23.2" lengthAdjust="spacingAndGlyphs">Red</text>
<rect x="683.1" y="933.8" width="63.4" height="61.4" fill="#2c2c2c" rx="4.6"/>
<rect x="683.7" y="934.2" width="62.2" height="60.2" fill="url(#gpb)" rx="4"/>
<rect x="689.7" y="939.6" width="50.6" height="30.6" fill="#b0941a" rx="4.2"/>
<rect x="690.6" y="940.5" width="49.6" height="29.5" fill="#f4ce24" rx="3.8"/>
<text x="694.7" y="988.7" font-size="11.9" fill="#262626" font-weight="bold" textLength="40.2" lengthAdjust="spacingAndGlyphs">Yellow</text>
<rect x="748.1" y="933.8" width="63.4" height="61.4" fill="#2c2c2c" rx="4.6"/>
<rect x="748.7" y="934.2" width="62.2" height="60.2" fill="url(#gpb)" rx="4"/>
<rect x="754.7" y="939.6" width="50.6" height="30.6" fill="#8c3c6f" rx="4.2"/>
<rect x="755.6" y="940.5" width="49.6" height="29.5" fill="#c2549a" rx="3.8"/>
<text x="752.45" y="988.7" font-size="11.9" fill="#262626" font-weight="bold" textLength="54.7" lengthAdjust="spacingAndGlyphs">Magenta</text>
<rect x="813.1" y="933.8" width="63.4" height="61.4" fill="#2c2c2c" rx="4.6"/>
<rect x="813.7" y="934.2" width="62.2" height="60.2" fill="url(#gpb)" rx="4"/>
<rect x="819.7" y="939.6" width="50.6" height="30.6" fill="#00637c" rx="4.2"/>
<rect x="820.6" y="940.5" width="49.6" height="29.5" fill="#008aac" rx="3.8"/>
<text x="830.15" y="988.7" font-size="11.9" fill="#262626" font-weight="bold" textLength="29.3" lengthAdjust="spacingAndGlyphs">Cyan</text>
<rect x="878.1" y="933.8" width="63.4" height="61.4" fill="#2c2c2c" rx="4.6"/>
<rect x="878.7" y="934.2" width="62.2" height="60.2" fill="url(#gpb)" rx="4"/>
<rect x="884.7" y="939.6" width="50.6" height="30.6" fill="#b80000" rx="4.2"/>
<rect x="885.6" y="940.5" width="49.6" height="29.5" fill="#ff0000" rx="3.8"/>
<text x="879.9" y="988.7" font-size="11.9" fill="#262626" font-weight="bold" textLength="59.8" lengthAdjust="spacingAndGlyphs">100% Red</text>
<rect x="943.1" y="933.8" width="63.4" height="61.4" fill="#2c2c2c" rx="4.6"/>
<rect x="943.7" y="934.2" width="62.2" height="60.2" fill="url(#gpb)" rx="4"/>
<rect x="949.7" y="939.6" width="50.6" height="16" fill="#00b800" rx="4.2"/>
<rect x="950.6" y="940.5" width="49.6" height="14.9" fill="#00ff00" rx="3.8"/>
<text x="956.15" y="973.8" font-size="11.9" fill="#262626" font-weight="bold" textLength="32.5" lengthAdjust="spacingAndGlyphs">100%</text>
<text x="956.15" y="988.7" font-size="11.9" fill="#262626" font-weight="bold" textLength="37.3" lengthAdjust="spacingAndGlyphs">Green</text>
<rect x="1008.1" y="933.8" width="63.4" height="61.4" fill="#2c2c2c" rx="4.6"/>
<rect x="1008.7" y="934.2" width="62.2" height="60.2" fill="url(#gpb)" rx="4"/>
<rect x="1014.7" y="939.6" width="50.6" height="16" fill="#0000b8" rx="4.2"/>
<rect x="1015.6" y="940.5" width="49.6" height="14.9" fill="#0000ff" rx="3.8"/>
<text x="1023.55" y="973.8" font-size="11.9" fill="#262626" font-weight="bold" textLength="32.5" lengthAdjust="spacingAndGlyphs">100%</text>
<text x="1023.55" y="988.7" font-size="11.9" fill="#262626" font-weight="bold" textLength="27" lengthAdjust="spacingAndGlyphs">Blue</text>
<rect x="1073.1" y="933.8" width="63.4" height="61.4" fill="#2c2c2c" rx="4.6"/>
<rect x="1073.7" y="934.2" width="62.2" height="60.2" fill="url(#gpb)" rx="4"/>
<rect x="1079.7" y="939.6" width="50.6" height="16" fill="#00b8b8" rx="4.2"/>
<rect x="1080.6" y="940.5" width="49.6" height="14.9" fill="#00ffff" rx="3.8"/>
<text x="1088.55" y="973.8" font-size="11.9" fill="#262626" font-weight="bold" textLength="32.5" lengthAdjust="spacingAndGlyphs">100%</text>
<text x="1088.55" y="988.7" font-size="11.9" fill="#262626" font-weight="bold" textLength="29.3" lengthAdjust="spacingAndGlyphs">Cyan</text>
<rect x="1138.1" y="933.8" width="63.4" height="61.4" fill="#2c2c2c" rx="4.6"/>
<rect x="1138.7" y="934.2" width="62.2" height="60.2" fill="url(#gpb)" rx="4"/>
<rect x="1144.7" y="939.6" width="50.6" height="16" fill="#b800b8" rx="4.2"/>
<rect x="1145.6" y="940.5" width="49.6" height="14.9" fill="#ff00ff" rx="3.8"/>
<text x="1142.45" y="973.8" font-size="11.9" fill="#262626" font-weight="bold" textLength="32.5" lengthAdjust="spacingAndGlyphs">100%</text>
<text x="1142.45" y="988.7" font-size="11.9" fill="#262626" font-weight="bold" textLength="54.7" lengthAdjust="spacingAndGlyphs">Magenta</text>
<rect x="1203.1" y="933.8" width="63.4" height="61.4" fill="#2c2c2c" rx="4.6"/>
<rect x="1203.7" y="934.2" width="62.2" height="60.2" fill="url(#gpbs)" rx="4"/>
<rect x="1209.7" y="939.6" width="50.6" height="16" fill="#b8b800" rx="4.2"/>
<rect x="1210.6" y="940.5" width="49.6" height="14.9" fill="#ffff00" rx="3.8"/>
<text x="1214.7" y="973.8" font-size="11.9" fill="#ffffff" font-weight="bold" textLength="32.5" lengthAdjust="spacingAndGlyphs">100%</text>
<text x="1214.7" y="988.7" font-size="11.9" fill="#ffffff" font-weight="bold" textLength="40.2" lengthAdjust="spacingAndGlyphs">Yellow</text>
</g>
<rect x="0" y="933" width="1.6" height="77" fill="#222222"/>
<rect x="1.6" y="994.8" width="1266.4" height="15.2" fill="#626262"/>
<rect x="451.5" y="996.6" width="795.5" height="14" fill="#444444" rx="7"/>
<rect x="4.2" y="996.4" width="11.6" height="13.2" fill="#8a8a8a" rx="2.5"/>
<path d="M12.8,998.4 V1007.6 L6.6,1003 Z" fill="#3a3a3a"/>
<rect x="1251.6" y="996.4" width="13" height="13.2" fill="#8a8a8a" rx="2.5"/>
<path d="M1255.4,998.4 V1007.6 L1261.8,1003 Z" fill="#3a3a3a"/>
<rect x="1267" y="933" width="403" height="77" fill="#3c3c3c"/>
<path d="M1267.2,955.8 V938 Q1267.2,933.6 1271.6,933.6 H1322.4 Q1326.8,933.6 1326.8,938 V955.8 Z" fill="url(#gcpa)"/>
<rect x="1267.2" y="957" width="59.6" height="53" fill="url(#gcp2)"/>
<circle cx="1297.5" cy="945.1" r="9.5" fill="url(#gcc)"/>
<path d="M1292.2,947.2 H1302.8 L1297.5,941.8 Z" fill="#343434"/>
<rect x="1278.8" y="965.4" width="36.4" height="35.8" fill="url(#gstop)" rx="4.4" stroke="#262626" stroke-width="2.5"/>
<rect x="1288.9" y="975" width="17" height="16.9" fill="#000000"/>
<rect x="1288.9" y="975" width="17" height="8.5" fill="#2a2a2a" opacity="0.55"/>
<rect x="1329.1" y="933.2" width="56.6" height="37.7" fill="url(#gcp)"/>
<circle cx="1357.7" cy="952.4" r="12" fill="url(#gcc)"/>
<rect x="1386.9" y="933.2" width="54.5" height="37.7" fill="url(#gcp)"/>
<circle cx="1414.45" cy="952.4" r="12" fill="url(#gcc)"/>
<rect x="1442.6" y="933.2" width="55.7" height="37.7" fill="url(#gcp)"/>
<circle cx="1470.75" cy="952.4" r="12" fill="url(#gcc)"/>
<rect x="1499.5" y="933.2" width="54.8" height="37.7" fill="url(#gcp)"/>
<circle cx="1527.2" cy="952.4" r="12" fill="url(#gcc)"/>
<rect x="1555.5" y="933.2" width="56" height="37.7" fill="url(#gcpd)"/>
<circle cx="1583.8" cy="952.4" r="12" fill="url(#gccd)"/>
<rect x="1612.7" y="933.2" width="57.6" height="37.7" fill="url(#gcp)"/>
<circle cx="1641.8" cy="952.4" r="12" fill="url(#gcc)"/>
<rect x="1352.7" y="947.4" width="10" height="9.8" fill="#363636"/>
<path d="M1410.85,946.8 V959 L1421.45,952.9 Z" fill="#363636"/>
<path d="M1466.55,946.8 H1464.15 V958.2 H1466.55 M1474.95,946.8 H1477.35 V958.2 H1474.95" stroke="#363636" stroke-width="1.7" fill="none"/>
<path d="M1467.15,952.5 H1474.35" stroke="#363636" stroke-width="1.4" stroke-dasharray="1.6 1.2" fill="none"/>
<path d="M1527.2,952.5 C1524.8,949 1520,948.6 1520,952.5 C1520,956.4 1524.8,956 1527.2,952.5 C1529.6,949 1534.4,948.6 1534.4,952.5 C1534.4,956.4 1529.6,956 1527.2,952.5 Z" stroke="#363636" stroke-width="1.8" fill="none"/>
<path d="M1577.8,951.2 A6.2,6.2 0 0 1 1588.4,947.8 M1589.8,953.8 A6.2,6.2 0 0 1 1579.2,957.2" stroke="#1e1e1e" stroke-width="2.4" fill="none"/>
<path d="M1586,949.8 L1591.2,950.6 L1590.6,945.2 Z M1581.6,955.2 L1576.4,954.4 L1577,959.8 Z" fill="#1e1e1e"/>
<rect x="1329.1" y="972.4" width="169.3" height="38" fill="url(#gcp)"/>
<rect x="1499.6" y="972.4" width="171" height="38" fill="url(#gcp)"/>
<circle cx="1366.9" cy="991" r="12" fill="url(#gcc)"/>
<circle cx="1634.4" cy="991" r="12" fill="url(#gcc)"/>
<path d="M1366.2,985.8 L1361.4,991 L1366.2,996.2 M1371.8,985.8 L1367,991 L1371.8,996.2" stroke="#363636" stroke-width="1.9" fill="none"/>
<path d="M1629.4,985.8 L1634.2,991 L1629.4,996.2 M1635,985.8 L1639.8,991 L1635,996.2" stroke="#363636" stroke-width="1.9" fill="none"/>
<text x="1401.6" y="1001" font-size="24.8" fill="#cccccc" font-weight="bold" textLength="62.4" lengthAdjust="spacingAndGlyphs" opacity="0.5">Back</text>
<text x="1401" y="1000.2" font-size="24.8" fill="#3a3a3a" font-weight="bold" textLength="62.4" lengthAdjust="spacingAndGlyphs">Back</text>
<text x="1534.8" y="1001" font-size="24.8" fill="#cccccc" font-weight="bold" textLength="64.1" lengthAdjust="spacingAndGlyphs" opacity="0.5">Next</text>
<text x="1534.2" y="1000.2" font-size="24.8" fill="#3a3a3a" font-weight="bold" textLength="64.1" lengthAdjust="spacingAndGlyphs">Next</text>
<rect x="1666.2" y="41" width="3.8" height="892" fill="url(#gedge)"/>
</svg>
</body></html>
